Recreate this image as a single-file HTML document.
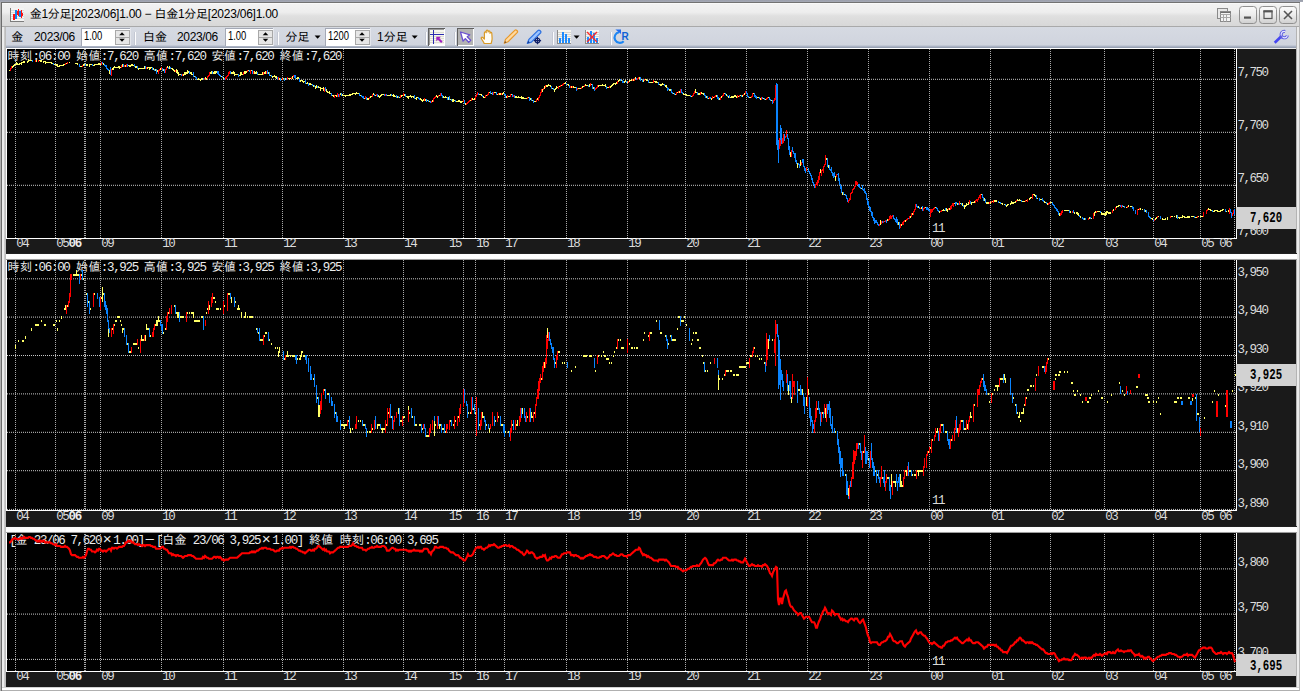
<!DOCTYPE html>
<html lang="ja"><head><meta charset="utf-8"><title>金1分足[2023/06]1.00 - 白金1分足[2023/06]1.00</title>
<style>
html,body{margin:0;padding:0;background:#fff;}
body{width:1303px;height:693px;position:relative;overflow:hidden;font-family:"Liberation Sans","IPAGothic",sans-serif;}
div{position:absolute;box-sizing:border-box;}
.t{white-space:pre;font-family:"Liberation Mono","IPAGothic",monospace;font-size:12px;line-height:13px;color:#ececec;}
.t .j{letter-spacing:0.4px;}
.t .l{font-size:12.5px;letter-spacing:-1.32px;}
.ax{color:#dcdcdc;}
.ax .l{letter-spacing:-1.5px;}
.w{display:inline-block;width:12.3px;text-align:center;font-size:15px;line-height:13px;letter-spacing:0;}
.b{font-weight:bold;}
.pb{font-weight:bold;color:#000;font-size:15.5px;line-height:16px;transform:scaleX(0.69);transform-origin:0 0;}
.p3 .l{letter-spacing:-1.385px;}
.p3 .j{letter-spacing:0.25px;}
.p3 .w{width:12.2px;}
.u{white-space:pre;font-family:"Liberation Sans","IPAGothic",sans-serif;font-size:12px;line-height:14px;color:#000;}
.chart{background:#000;}
.axis{background:#1a1a1a;}
.pbox{background:#d2d2d2;color:#000;text-align:center;}
svg{position:absolute;left:0;top:0;}
</style></head><body>

<div style="left:0;top:0;width:1300px;height:690.7px;background:#b4b4b4;"></div>
<div style="left:0;top:0;width:1303px;height:2px;background:linear-gradient(#999daa,#a6aab6);"></div>
<div style="left:1px;top:1.6px;width:1299px;height:1.5px;background:#727272;"></div>
<div style="left:0;top:2.4px;width:1px;height:688.3px;background:#b0b0b0;"></div>
<div style="left:0.9px;top:2.4px;width:1.4px;height:688.3px;background:#6c6c6c;"></div>
<div style="left:2.3px;top:3.2px;width:1296.6px;height:686.3px;background:#ececec;"></div>
<div style="left:1299px;top:3px;width:1px;height:687.7px;background:#b6b6b6;"></div>
<div style="left:2.3px;top:686.6px;width:1297px;height:4.1px;background:linear-gradient(#d2d2d2 0,#d2d2d2 30%,#fff 36%,#fff 66%,#b0b0b0 72%,#b0b0b0 100%);"></div>
<div style="left:4.3px;top:26.5px;width:1.7px;height:660px;background:linear-gradient(90deg,#d0d0d0,#b6b6b6);"></div>
<div style="left:1295.8px;top:26.5px;width:1.5px;height:660px;background:#b4b4b4;"></div>
<div style="left:2.3px;top:3.2px;width:1296.7px;height:23.3px;background:linear-gradient(#fdfdfd 0,#f2f2f2 6%,#eeeeee 40%,#e0e0e0 56%,#dbdbdb 80%,#d8d8d8 100%);"></div>
<div style="left:2.3px;top:26.2px;width:1296.7px;height:0.8px;background:#a9a9a9;"></div>
<div style="left:6px;top:27px;width:1290px;height:21px;background:linear-gradient(#d6dae2,#d0d4de 85%,#aeb6c6 92%,#8c96aa 100%);"></div>
<div class="axis" style="left:6px;top:49px;width:1290px;height:204px;"></div>
<div class="chart" style="left:6px;top:49px;width:1231px;height:189.6px;border-left:1px solid #fff;border-right:1px solid #fff;border-bottom:1.1px solid #fff;"></div>
<div style="left:6px;top:47.9px;width:1290px;height:1.2px;background:#ececec;"></div>
<div style="left:6px;top:48px;width:1231px;height:1.1px;background:#fff;"></div>
<div class="axis" style="left:6px;top:260px;width:1290px;height:266px;"></div>
<div class="chart" style="left:6px;top:260px;width:1231px;height:250.6px;border-left:1px solid #fff;border-right:1px solid #fff;border-bottom:1.1px solid #fff;"></div>
<div class="axis" style="left:6px;top:532px;width:1290px;height:155px;"></div>
<div class="chart" style="left:6px;top:532px;width:1231px;height:139.6px;border-left:1px solid #fff;border-right:1px solid #fff;border-bottom:1.1px solid #fff;"></div>
<div style="left:6px;top:252.5px;width:1291px;height:7px;background:linear-gradient(#1a1a1a 0,#1a1a1a 7%,#fdfdfd 12%,#fff 78%,#aaa 90%,#777 100%);"></div>
<div style="left:6px;top:525.5px;width:1291px;height:7px;background:linear-gradient(#1a1a1a 0,#1a1a1a 7%,#fdfdfd 12%,#fff 78%,#aaa 90%,#777 100%);"></div>
<div class="t " style="left:7.6px;top:50.5px;"><span class="j">時刻</span><span class="l">:06:00</span></div>
<div class="t " style="left:76px;top:50.5px;"><span class="j">始値</span><span class="l">:7,620</span></div>
<div class="t " style="left:143.7px;top:50.5px;"><span class="j">高値</span><span class="l">:7,620</span></div>
<div class="t " style="left:211.6px;top:50.5px;"><span class="j">安値</span><span class="l">:7,620</span></div>
<div class="t " style="left:279.4px;top:50.5px;"><span class="j">終値</span><span class="l">:7,620</span></div>
<div class="t " style="left:7.6px;top:261.5px;"><span class="j">時刻</span><span class="l">:06:00</span></div>
<div class="t " style="left:76px;top:261.5px;"><span class="j">始値</span><span class="l">:3,925</span></div>
<div class="t " style="left:143.7px;top:261.5px;"><span class="j">高値</span><span class="l">:3,925</span></div>
<div class="t " style="left:211.6px;top:261.5px;"><span class="j">安値</span><span class="l">:3,925</span></div>
<div class="t " style="left:279.4px;top:261.5px;"><span class="j">終値</span><span class="l">:3,925</span></div>
<div class="t p3" style="left:9.3px;top:534.2px;"><span class="l">[</span><span class="j">金</span><span class="l"> 23/06 7,620</span><span class="w">×</span><span class="l">1.00]</span><span class="j">－</span><span class="l">[</span><span class="j">白金</span><span class="l"> 23/06 3,925</span><span class="w">×</span><span class="l">1.00] </span><span class="j">終値</span><span class="l"> </span><span class="j">時刻</span><span class="l">:06:00 3,695</span></div>
<svg width="1303" height="693" viewBox="0 0 1303 693">
<g stroke="#a8a8a8" stroke-width="1" stroke-dasharray="1 1" shape-rendering="crispEdges"><line x1="15.5" y1="49" x2="15.5" y2="237.6"/><line x1="55.5" y1="49" x2="55.5" y2="237.6"/><line x1="84.5" y1="49" x2="84.5" y2="237.6"/><line x1="85.5" y1="49" x2="85.5" y2="237.6"/><line x1="100.5" y1="49" x2="100.5" y2="237.6"/><line x1="161.5" y1="49" x2="161.5" y2="237.6"/><line x1="223.5" y1="49" x2="223.5" y2="237.6"/><line x1="282.5" y1="49" x2="282.5" y2="237.6"/><line x1="343.5" y1="49" x2="343.5" y2="237.6"/><line x1="403.5" y1="49" x2="403.5" y2="237.6"/><line x1="463.5" y1="49" x2="463.5" y2="237.6"/><line x1="475.5" y1="49" x2="475.5" y2="237.6"/><line x1="504.5" y1="49" x2="504.5" y2="237.6"/><line x1="566.5" y1="49" x2="566.5" y2="237.6"/><line x1="627.5" y1="49" x2="627.5" y2="237.6"/><line x1="685.5" y1="49" x2="685.5" y2="237.6"/><line x1="746.5" y1="49" x2="746.5" y2="237.6"/><line x1="807.5" y1="49" x2="807.5" y2="237.6"/><line x1="868.5" y1="49" x2="868.5" y2="237.6"/><line x1="929.5" y1="49" x2="929.5" y2="237.6"/><line x1="990.5" y1="49" x2="990.5" y2="237.6"/><line x1="1050.5" y1="49" x2="1050.5" y2="237.6"/><line x1="1104.5" y1="49" x2="1104.5" y2="237.6"/><line x1="1153.5" y1="49" x2="1153.5" y2="237.6"/><line x1="1200.5" y1="49" x2="1200.5" y2="237.6"/><line x1="1234.5" y1="49" x2="1234.5" y2="237.6"/></g><g stroke="#c8c8c8" stroke-width="1" stroke-dasharray="1 1"><line x1="7" y1="79.3" x2="1236" y2="79.3"/><line x1="7" y1="132.3" x2="1236" y2="132.3"/><line x1="7" y1="185.3" x2="1236" y2="185.3"/></g>
<g stroke="#a8a8a8" stroke-width="1" stroke-dasharray="1 1" shape-rendering="crispEdges"><line x1="15.5" y1="260" x2="15.5" y2="509.4"/><line x1="55.5" y1="260" x2="55.5" y2="509.4"/><line x1="84.5" y1="260" x2="84.5" y2="509.4"/><line x1="85.5" y1="260" x2="85.5" y2="509.4"/><line x1="100.5" y1="260" x2="100.5" y2="509.4"/><line x1="161.5" y1="260" x2="161.5" y2="509.4"/><line x1="223.5" y1="260" x2="223.5" y2="509.4"/><line x1="282.5" y1="260" x2="282.5" y2="509.4"/><line x1="343.5" y1="260" x2="343.5" y2="509.4"/><line x1="403.5" y1="260" x2="403.5" y2="509.4"/><line x1="463.5" y1="260" x2="463.5" y2="509.4"/><line x1="475.5" y1="260" x2="475.5" y2="509.4"/><line x1="504.5" y1="260" x2="504.5" y2="509.4"/><line x1="566.5" y1="260" x2="566.5" y2="509.4"/><line x1="627.5" y1="260" x2="627.5" y2="509.4"/><line x1="685.5" y1="260" x2="685.5" y2="509.4"/><line x1="746.5" y1="260" x2="746.5" y2="509.4"/><line x1="807.5" y1="260" x2="807.5" y2="509.4"/><line x1="868.5" y1="260" x2="868.5" y2="509.4"/><line x1="929.5" y1="260" x2="929.5" y2="509.4"/><line x1="990.5" y1="260" x2="990.5" y2="509.4"/><line x1="1050.5" y1="260" x2="1050.5" y2="509.4"/><line x1="1104.5" y1="260" x2="1104.5" y2="509.4"/><line x1="1153.5" y1="260" x2="1153.5" y2="509.4"/><line x1="1200.5" y1="260" x2="1200.5" y2="509.4"/><line x1="1234.5" y1="260" x2="1234.5" y2="509.4"/></g><g stroke="#c8c8c8" stroke-width="1" stroke-dasharray="1 1"><line x1="7" y1="278.8" x2="1236" y2="278.8"/><line x1="7" y1="317.1" x2="1236" y2="317.1"/><line x1="7" y1="355.5" x2="1236" y2="355.5"/><line x1="7" y1="393.9" x2="1236" y2="393.9"/><line x1="7" y1="432.3" x2="1236" y2="432.3"/><line x1="7" y1="470.7" x2="1236" y2="470.7"/><line x1="7" y1="509.4" x2="1236" y2="509.4"/></g>
<g stroke="#a8a8a8" stroke-width="1" stroke-dasharray="1 1" shape-rendering="crispEdges"><line x1="15.5" y1="532" x2="15.5" y2="670.5"/><line x1="55.5" y1="532" x2="55.5" y2="670.5"/><line x1="84.5" y1="532" x2="84.5" y2="670.5"/><line x1="85.5" y1="532" x2="85.5" y2="670.5"/><line x1="100.5" y1="532" x2="100.5" y2="670.5"/><line x1="161.5" y1="532" x2="161.5" y2="670.5"/><line x1="223.5" y1="532" x2="223.5" y2="670.5"/><line x1="282.5" y1="532" x2="282.5" y2="670.5"/><line x1="343.5" y1="532" x2="343.5" y2="670.5"/><line x1="403.5" y1="532" x2="403.5" y2="670.5"/><line x1="463.5" y1="532" x2="463.5" y2="670.5"/><line x1="475.5" y1="532" x2="475.5" y2="670.5"/><line x1="504.5" y1="532" x2="504.5" y2="670.5"/><line x1="566.5" y1="532" x2="566.5" y2="670.5"/><line x1="627.5" y1="532" x2="627.5" y2="670.5"/><line x1="685.5" y1="532" x2="685.5" y2="670.5"/><line x1="746.5" y1="532" x2="746.5" y2="670.5"/><line x1="807.5" y1="532" x2="807.5" y2="670.5"/><line x1="868.5" y1="532" x2="868.5" y2="670.5"/><line x1="929.5" y1="532" x2="929.5" y2="670.5"/><line x1="990.5" y1="532" x2="990.5" y2="670.5"/><line x1="1050.5" y1="532" x2="1050.5" y2="670.5"/><line x1="1104.5" y1="532" x2="1104.5" y2="670.5"/><line x1="1153.5" y1="532" x2="1153.5" y2="670.5"/><line x1="1200.5" y1="532" x2="1200.5" y2="670.5"/><line x1="1234.5" y1="532" x2="1234.5" y2="670.5"/></g><g stroke="#c8c8c8" stroke-width="1" stroke-dasharray="1 1"><line x1="7" y1="568.9" x2="1236" y2="568.9"/><line x1="7" y1="614.1" x2="1236" y2="614.1"/><line x1="7" y1="659.4" x2="1236" y2="659.4"/></g>
<g shape-rendering="crispEdges"><rect x="8.5" y="70.3" width="1.1" height="1.1" fill="#ffff66"/><rect x="9.5" y="68.2" width="1.1" height="3.2" fill="#ff0000"/><rect x="10.5" y="66.1" width="1.1" height="3.2" fill="#ff0000"/><rect x="11.5" y="66.1" width="1.1" height="2.1" fill="#ffff66"/><rect x="12.5" y="65.0" width="1.1" height="2.1" fill="#ffff66"/><rect x="13.5" y="64.0" width="1.1" height="2.1" fill="#ffff66"/><rect x="14.5" y="64.0" width="1.1" height="1.1" fill="#ffff66"/><rect x="15.5" y="61.8" width="1.1" height="3.2" fill="#ffff66"/><rect x="16.5" y="62.9" width="1.1" height="2.1" fill="#ffff66"/><rect x="17.5" y="64.0" width="1.1" height="1.1" fill="#ffff66"/><rect x="18.5" y="62.9" width="1.1" height="2.1" fill="#ffff66"/><rect x="19.5" y="62.9" width="1.1" height="1.1" fill="#ffff66"/><rect x="20.5" y="61.8" width="1.1" height="3.2" fill="#ffff66"/><rect x="21.5" y="61.8" width="1.1" height="1.1" fill="#ffff66"/><rect x="22.5" y="60.8" width="1.1" height="2.1" fill="#ffff66"/><rect x="23.5" y="60.8" width="1.1" height="2.1" fill="#ffff66"/><rect x="26.5" y="60.8" width="1.1" height="2.1" fill="#ffff66"/><rect x="27.5" y="58.7" width="1.1" height="3.2" fill="#ffff66"/><rect x="28.5" y="59.7" width="1.1" height="1.1" fill="#ffff66"/><rect x="29.5" y="59.7" width="1.1" height="1.1" fill="#ffff66"/><rect x="30.5" y="59.7" width="1.1" height="1.1" fill="#ffff66"/><rect x="31.5" y="59.7" width="1.1" height="2.1" fill="#0a84ff"/><rect x="34.5" y="59.7" width="1.1" height="2.1" fill="#ff0000"/><rect x="35.5" y="59.7" width="1.1" height="2.1" fill="#ffff66"/><rect x="37.5" y="59.7" width="1.1" height="2.1" fill="#ff0000"/><rect x="38.5" y="59.7" width="1.1" height="1.1" fill="#ffff66"/><rect x="39.5" y="59.7" width="1.1" height="2.1" fill="#ffff66"/><rect x="40.5" y="59.7" width="1.1" height="2.1" fill="#ffff66"/><rect x="42.5" y="60.8" width="1.1" height="2.1" fill="#ffff66"/><rect x="43.5" y="60.8" width="1.1" height="1.1" fill="#ffff66"/><rect x="44.5" y="60.8" width="1.1" height="3.2" fill="#ffff66"/><rect x="45.5" y="61.8" width="1.1" height="1.1" fill="#ffff66"/><rect x="46.5" y="61.8" width="1.1" height="1.1" fill="#ffff66"/><rect x="47.5" y="61.8" width="1.1" height="1.1" fill="#ffff66"/><rect x="48.5" y="61.8" width="1.1" height="1.1" fill="#ffff66"/><rect x="49.5" y="61.8" width="1.1" height="1.1" fill="#ffff66"/><rect x="50.5" y="61.8" width="1.1" height="2.1" fill="#ffff66"/><rect x="51.5" y="62.9" width="1.1" height="1.1" fill="#ffff66"/><rect x="52.5" y="62.9" width="1.1" height="2.1" fill="#0a84ff"/><rect x="53.5" y="64.0" width="1.1" height="1.1" fill="#ffff66"/><rect x="54.5" y="64.0" width="1.1" height="1.1" fill="#ffff66"/><rect x="55.5" y="64.0" width="1.1" height="2.1" fill="#ffff66"/><rect x="56.5" y="64.0" width="1.1" height="3.2" fill="#ffff66"/><rect x="57.5" y="66.1" width="1.1" height="1.1" fill="#ffff66"/><rect x="58.5" y="65.0" width="1.1" height="2.1" fill="#ffff66"/><rect x="59.5" y="65.0" width="1.1" height="1.1" fill="#ffff66"/><rect x="60.5" y="65.0" width="1.1" height="1.1" fill="#ffff66"/><rect x="61.5" y="65.0" width="1.1" height="1.1" fill="#ffff66"/><rect x="62.5" y="64.0" width="1.1" height="2.1" fill="#ffff66"/><rect x="63.5" y="64.0" width="1.1" height="1.1" fill="#ffff66"/><rect x="64.5" y="62.9" width="1.1" height="2.1" fill="#ff0000"/><rect x="65.5" y="62.9" width="1.1" height="1.1" fill="#ffff66"/><rect x="66.5" y="61.8" width="1.1" height="2.1" fill="#ff0000"/><rect x="68.5" y="61.8" width="1.1" height="1.1" fill="#ffff66"/><rect x="74.5" y="62.9" width="1.1" height="1.1" fill="#ffff66"/><rect x="75.5" y="62.9" width="1.1" height="1.1" fill="#ffff66"/><rect x="76.5" y="62.9" width="1.1" height="2.1" fill="#ffff66"/><rect x="78.5" y="64.0" width="1.1" height="3.2" fill="#0a84ff"/><rect x="79.5" y="66.1" width="1.1" height="1.1" fill="#ffff66"/><rect x="80.5" y="66.1" width="1.1" height="1.1" fill="#ffff66"/><rect x="81.5" y="65.0" width="1.1" height="2.1" fill="#ff0000"/><rect x="82.5" y="64.0" width="1.1" height="2.1" fill="#ffff66"/><rect x="83.5" y="64.0" width="1.1" height="1.1" fill="#ffff66"/><rect x="84.5" y="64.0" width="1.1" height="2.1" fill="#0a84ff"/><rect x="85.5" y="64.0" width="1.1" height="2.1" fill="#ffff66"/><rect x="86.5" y="64.0" width="1.1" height="2.1" fill="#ffff66"/><rect x="88.5" y="64.0" width="1.1" height="3.2" fill="#ffff66"/><rect x="89.5" y="64.0" width="1.1" height="1.1" fill="#ffff66"/><rect x="90.5" y="64.0" width="1.1" height="1.1" fill="#ffff66"/><rect x="91.5" y="64.0" width="1.1" height="2.1" fill="#0a84ff"/><rect x="92.5" y="65.0" width="1.1" height="1.1" fill="#ffff66"/><rect x="93.5" y="64.0" width="1.1" height="2.1" fill="#ffff66"/><rect x="94.5" y="64.0" width="1.1" height="1.1" fill="#ffff66"/><rect x="95.5" y="64.0" width="1.1" height="1.1" fill="#ffff66"/><rect x="96.5" y="64.0" width="1.1" height="1.1" fill="#ffff66"/><rect x="97.5" y="62.9" width="1.1" height="2.1" fill="#ffff66"/><rect x="98.5" y="62.9" width="1.1" height="2.1" fill="#ffff66"/><rect x="99.5" y="64.0" width="1.1" height="1.1" fill="#ffff66"/><rect x="100.5" y="61.8" width="1.1" height="3.2" fill="#ff0000"/><rect x="101.5" y="61.8" width="1.1" height="2.1" fill="#0a84ff"/><rect x="102.5" y="62.9" width="1.1" height="2.1" fill="#ffff66"/><rect x="103.5" y="64.0" width="1.1" height="2.1" fill="#0a84ff"/><rect x="104.5" y="65.0" width="1.1" height="2.1" fill="#0a84ff"/><rect x="105.5" y="65.0" width="1.1" height="4.2" fill="#0a84ff"/><rect x="106.5" y="68.2" width="1.1" height="2.1" fill="#0a84ff"/><rect x="107.5" y="69.3" width="1.1" height="2.1" fill="#0a84ff"/><rect x="108.5" y="70.3" width="1.1" height="3.2" fill="#ffff66"/><rect x="109.5" y="71.4" width="1.1" height="3.2" fill="#0a84ff"/><rect x="110.5" y="69.3" width="1.1" height="6.4" fill="#ff0000"/><rect x="111.5" y="68.2" width="1.1" height="2.1" fill="#ffff66"/><rect x="112.5" y="67.1" width="1.1" height="3.2" fill="#ffff66"/><rect x="113.5" y="66.1" width="1.1" height="2.1" fill="#ffff66"/><rect x="114.5" y="67.1" width="1.1" height="1.1" fill="#ffff66"/><rect x="115.5" y="67.1" width="1.1" height="1.1" fill="#ffff66"/><rect x="116.5" y="67.1" width="1.1" height="1.1" fill="#ffff66"/><rect x="117.5" y="66.1" width="1.1" height="2.1" fill="#ffff66"/><rect x="118.5" y="66.1" width="1.1" height="3.2" fill="#ffff66"/><rect x="119.5" y="67.1" width="1.1" height="1.1" fill="#ffff66"/><rect x="120.5" y="65.0" width="1.1" height="3.2" fill="#ff0000"/><rect x="121.5" y="64.0" width="1.1" height="3.2" fill="#ffff66"/><rect x="122.5" y="64.0" width="1.1" height="3.2" fill="#0a84ff"/><rect x="123.5" y="65.0" width="1.1" height="2.1" fill="#ff0000"/><rect x="124.5" y="65.0" width="1.1" height="2.1" fill="#ffff66"/><rect x="125.5" y="64.0" width="1.1" height="3.2" fill="#ff0000"/><rect x="126.5" y="64.0" width="1.1" height="3.2" fill="#0a84ff"/><rect x="127.5" y="65.0" width="1.1" height="1.1" fill="#ffff66"/><rect x="128.5" y="65.0" width="1.1" height="2.1" fill="#ffff66"/><rect x="129.5" y="65.0" width="1.1" height="2.1" fill="#ffff66"/><rect x="130.5" y="64.0" width="1.1" height="2.1" fill="#ffff66"/><rect x="131.5" y="64.0" width="1.1" height="2.1" fill="#ffff66"/><rect x="132.5" y="65.0" width="1.1" height="1.1" fill="#ffff66"/><rect x="133.5" y="64.0" width="1.1" height="3.2" fill="#0a84ff"/><rect x="134.5" y="66.1" width="1.1" height="2.1" fill="#ffff66"/><rect x="135.5" y="66.1" width="1.1" height="2.1" fill="#ffff66"/><rect x="136.5" y="66.1" width="1.1" height="3.2" fill="#0a84ff"/><rect x="137.5" y="68.2" width="1.1" height="2.1" fill="#ffff66"/><rect x="138.5" y="68.2" width="1.1" height="1.1" fill="#ffff66"/><rect x="139.5" y="68.2" width="1.1" height="1.1" fill="#ffff66"/><rect x="140.5" y="68.2" width="1.1" height="1.1" fill="#ffff66"/><rect x="141.5" y="68.2" width="1.1" height="1.1" fill="#ffff66"/><rect x="142.5" y="68.2" width="1.1" height="1.1" fill="#ffff66"/><rect x="143.5" y="66.1" width="1.1" height="3.2" fill="#ffff66"/><rect x="144.5" y="66.1" width="1.1" height="3.2" fill="#0a84ff"/><rect x="145.5" y="67.1" width="1.1" height="2.1" fill="#ff0000"/><rect x="146.5" y="67.1" width="1.1" height="2.1" fill="#ffff66"/><rect x="147.5" y="67.1" width="1.1" height="1.1" fill="#ffff66"/><rect x="148.5" y="67.1" width="1.1" height="3.2" fill="#ffff66"/><rect x="149.5" y="67.1" width="1.1" height="2.1" fill="#ffff66"/><rect x="150.5" y="67.1" width="1.1" height="1.1" fill="#ffff66"/><rect x="151.5" y="67.1" width="1.1" height="3.2" fill="#0a84ff"/><rect x="152.5" y="68.2" width="1.1" height="2.1" fill="#ffff66"/><rect x="153.5" y="69.3" width="1.1" height="2.1" fill="#0a84ff"/><rect x="154.5" y="69.3" width="1.1" height="2.1" fill="#ffff66"/><rect x="155.5" y="70.3" width="1.1" height="1.1" fill="#ffff66"/><rect x="156.5" y="70.3" width="1.1" height="2.1" fill="#ffff66"/><rect x="157.5" y="70.3" width="1.1" height="3.2" fill="#ff0000"/><rect x="158.5" y="69.3" width="1.1" height="2.1" fill="#ff0000"/><rect x="159.5" y="68.2" width="1.1" height="2.1" fill="#ffff66"/><rect x="160.5" y="67.1" width="1.1" height="3.2" fill="#ff0000"/><rect x="161.5" y="68.2" width="1.1" height="3.2" fill="#0a84ff"/><rect x="162.5" y="69.3" width="1.1" height="2.1" fill="#ffff66"/><rect x="163.5" y="69.3" width="1.1" height="3.2" fill="#0a84ff"/><rect x="164.5" y="69.3" width="1.1" height="3.2" fill="#ff0000"/><rect x="165.5" y="67.1" width="1.1" height="3.2" fill="#ff0000"/><rect x="166.5" y="66.1" width="1.1" height="2.1" fill="#ffff66"/><rect x="167.5" y="67.1" width="1.1" height="2.1" fill="#0a84ff"/><rect x="168.5" y="66.1" width="1.1" height="3.2" fill="#ffff66"/><rect x="169.5" y="67.1" width="1.1" height="2.1" fill="#0a84ff"/><rect x="170.5" y="68.2" width="1.1" height="1.1" fill="#ffff66"/><rect x="171.5" y="68.2" width="1.1" height="2.1" fill="#ffff66"/><rect x="172.5" y="69.3" width="1.1" height="2.1" fill="#ffff66"/><rect x="173.5" y="70.3" width="1.1" height="2.1" fill="#ffff66"/><rect x="174.5" y="70.3" width="1.1" height="2.1" fill="#ff0000"/><rect x="175.5" y="69.3" width="1.1" height="3.2" fill="#ffff66"/><rect x="176.5" y="70.3" width="1.1" height="3.2" fill="#ffff66"/><rect x="177.5" y="72.4" width="1.1" height="3.2" fill="#ffff66"/><rect x="178.5" y="73.5" width="1.1" height="1.1" fill="#ffff66"/><rect x="179.5" y="73.5" width="1.1" height="1.1" fill="#ffff66"/><rect x="180.5" y="73.5" width="1.1" height="2.1" fill="#0a84ff"/><rect x="181.5" y="73.5" width="1.1" height="2.1" fill="#ff0000"/><rect x="182.5" y="73.5" width="1.1" height="2.1" fill="#ffff66"/><rect x="183.5" y="72.4" width="1.1" height="2.1" fill="#ffff66"/><rect x="184.5" y="72.4" width="1.1" height="2.1" fill="#ffff66"/><rect x="185.5" y="72.4" width="1.1" height="1.1" fill="#ffff66"/><rect x="186.5" y="70.3" width="1.1" height="3.2" fill="#ffff66"/><rect x="187.5" y="71.4" width="1.1" height="1.1" fill="#ffff66"/><rect x="188.5" y="71.4" width="1.1" height="2.1" fill="#0a84ff"/><rect x="189.5" y="72.4" width="1.1" height="1.1" fill="#ffff66"/><rect x="190.5" y="72.4" width="1.1" height="2.1" fill="#ffff66"/><rect x="191.5" y="73.5" width="1.1" height="1.1" fill="#ffff66"/><rect x="192.5" y="72.4" width="1.1" height="4.2" fill="#0a84ff"/><rect x="193.5" y="75.6" width="1.1" height="1.1" fill="#ffff66"/><rect x="194.5" y="75.6" width="1.1" height="2.1" fill="#0a84ff"/><rect x="195.5" y="76.7" width="1.1" height="3.2" fill="#0a84ff"/><rect x="196.5" y="78.8" width="1.1" height="1.1" fill="#ffff66"/><rect x="197.5" y="77.7" width="1.1" height="2.1" fill="#ffff66"/><rect x="198.5" y="78.8" width="1.1" height="1.1" fill="#ffff66"/><rect x="199.5" y="78.8" width="1.1" height="2.1" fill="#ffff66"/><rect x="200.5" y="77.7" width="1.1" height="2.1" fill="#ffff66"/><rect x="201.5" y="77.7" width="1.1" height="2.1" fill="#ffff66"/><rect x="202.5" y="77.7" width="1.1" height="2.1" fill="#0a84ff"/><rect x="203.5" y="77.7" width="1.1" height="2.1" fill="#ff0000"/><rect x="204.5" y="76.7" width="1.1" height="2.1" fill="#ffff66"/><rect x="205.5" y="77.7" width="1.1" height="2.1" fill="#ffff66"/><rect x="206.5" y="75.6" width="1.1" height="3.2" fill="#ff0000"/><rect x="207.5" y="74.6" width="1.1" height="2.1" fill="#ff0000"/><rect x="208.5" y="72.4" width="1.1" height="3.2" fill="#ff0000"/><rect x="209.5" y="72.4" width="1.1" height="1.1" fill="#ffff66"/><rect x="210.5" y="71.4" width="1.1" height="2.1" fill="#ffff66"/><rect x="211.5" y="71.4" width="1.1" height="2.1" fill="#0a84ff"/><rect x="212.5" y="72.4" width="1.1" height="1.1" fill="#ffff66"/><rect x="213.5" y="71.4" width="1.1" height="2.1" fill="#ffff66"/><rect x="214.5" y="71.4" width="1.1" height="2.1" fill="#ffff66"/><rect x="215.5" y="71.4" width="1.1" height="1.1" fill="#ffff66"/><rect x="216.5" y="71.4" width="1.1" height="2.1" fill="#0a84ff"/><rect x="217.5" y="71.4" width="1.1" height="3.2" fill="#0a84ff"/><rect x="218.5" y="73.5" width="1.1" height="2.1" fill="#0a84ff"/><rect x="219.5" y="74.6" width="1.1" height="2.1" fill="#0a84ff"/><rect x="220.5" y="75.6" width="1.1" height="1.1" fill="#ffff66"/><rect x="221.5" y="75.6" width="1.1" height="2.1" fill="#0a84ff"/><rect x="222.5" y="76.7" width="1.1" height="2.1" fill="#ffff66"/><rect x="223.5" y="77.7" width="1.1" height="2.1" fill="#0a84ff"/><rect x="224.5" y="76.7" width="1.1" height="3.2" fill="#ff0000"/><rect x="225.5" y="75.6" width="1.1" height="3.2" fill="#ff0000"/><rect x="226.5" y="74.6" width="1.1" height="2.1" fill="#ff0000"/><rect x="227.5" y="72.4" width="1.1" height="3.2" fill="#ff0000"/><rect x="228.5" y="71.4" width="1.1" height="2.1" fill="#ff0000"/><rect x="229.5" y="71.4" width="1.1" height="2.1" fill="#0a84ff"/><rect x="230.5" y="72.4" width="1.1" height="1.1" fill="#ffff66"/><rect x="231.5" y="72.4" width="1.1" height="1.1" fill="#ffff66"/><rect x="232.5" y="71.4" width="1.1" height="2.1" fill="#ffff66"/><rect x="233.5" y="72.4" width="1.1" height="3.2" fill="#ffff66"/><rect x="234.5" y="73.5" width="1.1" height="1.1" fill="#ffff66"/><rect x="235.5" y="73.5" width="1.1" height="1.1" fill="#ffff66"/><rect x="236.5" y="73.5" width="1.1" height="1.1" fill="#ffff66"/><rect x="237.5" y="73.5" width="1.1" height="3.2" fill="#0a84ff"/><rect x="238.5" y="74.6" width="1.1" height="1.1" fill="#ffff66"/><rect x="239.5" y="72.4" width="1.1" height="3.2" fill="#ffff66"/><rect x="240.5" y="72.4" width="1.1" height="2.1" fill="#ffff66"/><rect x="241.5" y="73.5" width="1.1" height="1.1" fill="#ffff66"/><rect x="242.5" y="72.4" width="1.1" height="2.1" fill="#ff0000"/><rect x="243.5" y="71.4" width="1.1" height="2.1" fill="#ffff66"/><rect x="244.5" y="71.4" width="1.1" height="2.1" fill="#ffff66"/><rect x="245.5" y="71.4" width="1.1" height="1.1" fill="#ffff66"/><rect x="246.5" y="70.3" width="1.1" height="2.1" fill="#ff0000"/><rect x="247.5" y="70.3" width="1.1" height="1.1" fill="#ffff66"/><rect x="248.5" y="70.3" width="1.1" height="2.1" fill="#0a84ff"/><rect x="249.5" y="70.3" width="1.1" height="3.2" fill="#ff0000"/><rect x="250.5" y="70.3" width="1.1" height="1.1" fill="#ffff66"/><rect x="251.5" y="70.3" width="1.1" height="3.2" fill="#0a84ff"/><rect x="252.5" y="71.4" width="1.1" height="2.1" fill="#ff0000"/><rect x="253.5" y="71.4" width="1.1" height="2.1" fill="#ffff66"/><rect x="254.5" y="72.4" width="1.1" height="1.1" fill="#ffff66"/><rect x="255.5" y="71.4" width="1.1" height="2.1" fill="#ffff66"/><rect x="256.5" y="72.4" width="1.1" height="2.1" fill="#0a84ff"/><rect x="257.5" y="73.5" width="1.1" height="1.1" fill="#ffff66"/><rect x="258.5" y="73.5" width="1.1" height="1.1" fill="#ffff66"/><rect x="259.5" y="73.5" width="1.1" height="1.1" fill="#ffff66"/><rect x="260.5" y="73.5" width="1.1" height="1.1" fill="#ffff66"/><rect x="261.5" y="72.4" width="1.1" height="2.1" fill="#ffff66"/><rect x="262.5" y="72.4" width="1.1" height="2.1" fill="#ff0000"/><rect x="263.5" y="72.4" width="1.1" height="1.1" fill="#ffff66"/><rect x="264.5" y="71.4" width="1.1" height="2.1" fill="#ffff66"/><rect x="265.5" y="71.4" width="1.1" height="2.1" fill="#ff0000"/><rect x="266.5" y="70.3" width="1.1" height="3.2" fill="#0a84ff"/><rect x="267.5" y="72.4" width="1.1" height="1.1" fill="#ffff66"/><rect x="268.5" y="72.4" width="1.1" height="3.2" fill="#0a84ff"/><rect x="269.5" y="74.6" width="1.1" height="1.1" fill="#ffff66"/><rect x="270.5" y="74.6" width="1.1" height="2.1" fill="#0a84ff"/><rect x="271.5" y="75.6" width="1.1" height="2.1" fill="#ffff66"/><rect x="272.5" y="75.6" width="1.1" height="1.1" fill="#ffff66"/><rect x="273.5" y="74.6" width="1.1" height="2.1" fill="#ffff66"/><rect x="274.5" y="75.6" width="1.1" height="2.1" fill="#ffff66"/><rect x="275.5" y="75.6" width="1.1" height="3.2" fill="#ffff66"/><rect x="276.5" y="76.7" width="1.1" height="3.2" fill="#0a84ff"/><rect x="277.5" y="76.7" width="1.1" height="3.2" fill="#ff0000"/><rect x="278.5" y="77.7" width="1.1" height="2.1" fill="#ffff66"/><rect x="279.5" y="77.7" width="1.1" height="3.2" fill="#0a84ff"/><rect x="280.5" y="78.8" width="1.1" height="1.1" fill="#ffff66"/><rect x="281.5" y="77.7" width="1.1" height="2.1" fill="#ff0000"/><rect x="282.5" y="77.7" width="1.1" height="1.1" fill="#ffff66"/><rect x="283.5" y="77.7" width="1.1" height="3.2" fill="#0a84ff"/><rect x="284.5" y="77.7" width="1.1" height="2.1" fill="#ffff66"/><rect x="285.5" y="77.7" width="1.1" height="2.1" fill="#0a84ff"/><rect x="286.5" y="76.7" width="1.1" height="3.2" fill="#ff0000"/><rect x="287.5" y="77.7" width="1.1" height="1.1" fill="#ffff66"/><rect x="288.5" y="77.7" width="1.1" height="2.1" fill="#ffff66"/><rect x="289.5" y="77.7" width="1.1" height="1.1" fill="#ffff66"/><rect x="290.5" y="76.7" width="1.1" height="2.1" fill="#ff0000"/><rect x="291.5" y="75.6" width="1.1" height="3.2" fill="#ffff66"/><rect x="292.5" y="74.6" width="1.1" height="2.1" fill="#ff0000"/><rect x="293.5" y="74.6" width="1.1" height="3.2" fill="#0a84ff"/><rect x="294.5" y="74.6" width="1.1" height="4.2" fill="#0a84ff"/><rect x="295.5" y="77.7" width="1.1" height="1.1" fill="#ffff66"/><rect x="296.5" y="76.7" width="1.1" height="2.1" fill="#ffff66"/><rect x="297.5" y="76.7" width="1.1" height="2.1" fill="#ffff66"/><rect x="298.5" y="77.7" width="1.1" height="4.2" fill="#0a84ff"/><rect x="299.5" y="79.9" width="1.1" height="2.1" fill="#ffff66"/><rect x="300.5" y="79.9" width="1.1" height="1.1" fill="#ffff66"/><rect x="301.5" y="79.9" width="1.1" height="2.1" fill="#ffff66"/><rect x="302.5" y="80.9" width="1.1" height="2.1" fill="#ffff66"/><rect x="303.5" y="80.9" width="1.1" height="1.1" fill="#ffff66"/><rect x="304.5" y="79.9" width="1.1" height="4.2" fill="#0a84ff"/><rect x="305.5" y="83.0" width="1.1" height="1.1" fill="#ffff66"/><rect x="306.5" y="82.0" width="1.1" height="2.1" fill="#ffff66"/><rect x="307.5" y="83.0" width="1.1" height="3.2" fill="#0a84ff"/><rect x="308.5" y="83.0" width="1.1" height="2.1" fill="#ffff66"/><rect x="309.5" y="83.0" width="1.1" height="2.1" fill="#ffff66"/><rect x="310.5" y="84.1" width="1.1" height="1.1" fill="#ffff66"/><rect x="311.5" y="84.1" width="1.1" height="2.1" fill="#0a84ff"/><rect x="312.5" y="85.2" width="1.1" height="2.1" fill="#ffff66"/><rect x="313.5" y="85.2" width="1.1" height="2.1" fill="#0a84ff"/><rect x="314.5" y="86.2" width="1.1" height="3.2" fill="#ffff66"/><rect x="315.5" y="85.2" width="1.1" height="3.2" fill="#ffff66"/><rect x="316.5" y="86.2" width="1.1" height="2.1" fill="#0a84ff"/><rect x="317.5" y="86.2" width="1.1" height="2.1" fill="#ffff66"/><rect x="318.5" y="87.3" width="1.1" height="1.1" fill="#ffff66"/><rect x="319.5" y="87.3" width="1.1" height="3.2" fill="#ffff66"/><rect x="320.5" y="88.3" width="1.1" height="1.1" fill="#ffff66"/><rect x="321.5" y="88.3" width="1.1" height="1.1" fill="#ffff66"/><rect x="322.5" y="87.3" width="1.1" height="3.2" fill="#ffff66"/><rect x="323.5" y="88.3" width="1.1" height="3.2" fill="#ff0000"/><rect x="324.5" y="87.3" width="1.1" height="3.2" fill="#0a84ff"/><rect x="325.5" y="89.4" width="1.1" height="2.1" fill="#ffff66"/><rect x="326.5" y="90.5" width="1.1" height="2.1" fill="#ffff66"/><rect x="327.5" y="91.5" width="1.1" height="1.1" fill="#ffff66"/><rect x="328.5" y="90.5" width="1.1" height="3.2" fill="#ffff66"/><rect x="329.5" y="92.6" width="1.1" height="1.1" fill="#ffff66"/><rect x="330.5" y="92.6" width="1.1" height="3.2" fill="#0a84ff"/><rect x="331.5" y="94.7" width="1.1" height="1.1" fill="#ffff66"/><rect x="332.5" y="94.7" width="1.1" height="2.1" fill="#ffff66"/><rect x="333.5" y="94.7" width="1.1" height="3.2" fill="#ff0000"/><rect x="334.5" y="94.7" width="1.1" height="1.1" fill="#ffff66"/><rect x="335.5" y="94.7" width="1.1" height="2.1" fill="#ffff66"/><rect x="336.5" y="92.6" width="1.1" height="4.2" fill="#ff0000"/><rect x="337.5" y="93.6" width="1.1" height="3.2" fill="#0a84ff"/><rect x="338.5" y="93.6" width="1.1" height="3.2" fill="#ff0000"/><rect x="339.5" y="92.6" width="1.1" height="2.1" fill="#ffff66"/><rect x="340.5" y="92.6" width="1.1" height="3.2" fill="#0a84ff"/><rect x="341.5" y="93.6" width="1.1" height="2.1" fill="#ffff66"/><rect x="342.5" y="94.7" width="1.1" height="1.1" fill="#ffff66"/><rect x="343.5" y="94.7" width="1.1" height="1.1" fill="#ffff66"/><rect x="344.5" y="94.7" width="1.1" height="2.1" fill="#ffff66"/><rect x="345.5" y="94.7" width="1.1" height="1.1" fill="#ffff66"/><rect x="346.5" y="94.7" width="1.1" height="1.1" fill="#ffff66"/><rect x="347.5" y="94.7" width="1.1" height="1.1" fill="#ffff66"/><rect x="348.5" y="93.6" width="1.1" height="2.1" fill="#ffff66"/><rect x="349.5" y="93.6" width="1.1" height="2.1" fill="#ffff66"/><rect x="350.5" y="93.6" width="1.1" height="1.1" fill="#ffff66"/><rect x="351.5" y="92.6" width="1.1" height="2.1" fill="#ffff66"/><rect x="352.5" y="92.6" width="1.1" height="1.1" fill="#ffff66"/><rect x="353.5" y="92.6" width="1.1" height="1.1" fill="#ffff66"/><rect x="354.5" y="92.6" width="1.1" height="2.1" fill="#ffff66"/><rect x="355.5" y="91.5" width="1.1" height="2.1" fill="#ffff66"/><rect x="356.5" y="92.6" width="1.1" height="1.1" fill="#ffff66"/><rect x="357.5" y="92.6" width="1.1" height="1.1" fill="#ffff66"/><rect x="358.5" y="92.6" width="1.1" height="3.2" fill="#0a84ff"/><rect x="359.5" y="94.7" width="1.1" height="1.1" fill="#ffff66"/><rect x="360.5" y="94.7" width="1.1" height="2.1" fill="#0a84ff"/><rect x="361.5" y="95.8" width="1.1" height="2.1" fill="#0a84ff"/><rect x="362.5" y="95.8" width="1.1" height="3.2" fill="#0a84ff"/><rect x="363.5" y="97.9" width="1.1" height="1.1" fill="#ffff66"/><rect x="364.5" y="95.8" width="1.1" height="3.2" fill="#ff0000"/><rect x="365.5" y="96.8" width="1.1" height="3.2" fill="#0a84ff"/><rect x="366.5" y="97.9" width="1.1" height="2.1" fill="#ffff66"/><rect x="367.5" y="97.9" width="1.1" height="2.1" fill="#ffff66"/><rect x="368.5" y="96.8" width="1.1" height="2.1" fill="#ff0000"/><rect x="369.5" y="95.8" width="1.1" height="2.1" fill="#ffff66"/><rect x="370.5" y="95.8" width="1.1" height="1.1" fill="#ffff66"/><rect x="371.5" y="93.6" width="1.1" height="3.2" fill="#ff0000"/><rect x="372.5" y="92.6" width="1.1" height="2.1" fill="#ffff66"/><rect x="373.5" y="93.6" width="1.1" height="2.1" fill="#0a84ff"/><rect x="374.5" y="94.7" width="1.1" height="1.1" fill="#ffff66"/><rect x="375.5" y="93.6" width="1.1" height="2.1" fill="#ff0000"/><rect x="376.5" y="93.6" width="1.1" height="3.2" fill="#0a84ff"/><rect x="377.5" y="94.7" width="1.1" height="2.1" fill="#ffff66"/><rect x="378.5" y="95.8" width="1.1" height="2.1" fill="#ffff66"/><rect x="379.5" y="94.7" width="1.1" height="2.1" fill="#ffff66"/><rect x="380.5" y="93.6" width="1.1" height="2.1" fill="#ffff66"/><rect x="381.5" y="93.6" width="1.1" height="1.1" fill="#ffff66"/><rect x="382.5" y="93.6" width="1.1" height="1.1" fill="#ffff66"/><rect x="383.5" y="93.6" width="1.1" height="2.1" fill="#0a84ff"/><rect x="384.5" y="93.6" width="1.1" height="2.1" fill="#ff0000"/><rect x="385.5" y="93.6" width="1.1" height="2.1" fill="#0a84ff"/><rect x="386.5" y="94.7" width="1.1" height="1.1" fill="#ffff66"/><rect x="387.5" y="94.7" width="1.1" height="1.1" fill="#ffff66"/><rect x="388.5" y="94.7" width="1.1" height="1.1" fill="#ffff66"/><rect x="389.5" y="93.6" width="1.1" height="2.1" fill="#ffff66"/><rect x="390.5" y="93.6" width="1.1" height="2.1" fill="#0a84ff"/><rect x="391.5" y="94.7" width="1.1" height="1.1" fill="#ffff66"/><rect x="392.5" y="93.6" width="1.1" height="3.2" fill="#ffff66"/><rect x="393.5" y="94.7" width="1.1" height="2.1" fill="#ffff66"/><rect x="394.5" y="95.8" width="1.1" height="1.1" fill="#ffff66"/><rect x="395.5" y="94.7" width="1.1" height="3.2" fill="#0a84ff"/><rect x="396.5" y="95.8" width="1.1" height="2.1" fill="#ffff66"/><rect x="397.5" y="95.8" width="1.1" height="2.1" fill="#0a84ff"/><rect x="398.5" y="96.8" width="1.1" height="1.1" fill="#ffff66"/><rect x="399.5" y="94.7" width="1.1" height="3.2" fill="#ff0000"/><rect x="400.5" y="94.7" width="1.1" height="2.1" fill="#ffff66"/><rect x="401.5" y="94.7" width="1.1" height="1.1" fill="#ffff66"/><rect x="402.5" y="92.6" width="1.1" height="3.2" fill="#ff0000"/><rect x="403.5" y="93.6" width="1.1" height="2.1" fill="#ffff66"/><rect x="404.5" y="93.6" width="1.1" height="3.2" fill="#0a84ff"/><rect x="405.5" y="95.8" width="1.1" height="1.1" fill="#ffff66"/><rect x="406.5" y="95.8" width="1.1" height="2.1" fill="#ffff66"/><rect x="407.5" y="95.8" width="1.1" height="3.2" fill="#ffff66"/><rect x="408.5" y="95.8" width="1.1" height="1.1" fill="#ffff66"/><rect x="409.5" y="94.7" width="1.1" height="2.1" fill="#ffff66"/><rect x="410.5" y="95.8" width="1.1" height="2.1" fill="#ffff66"/><rect x="411.5" y="95.8" width="1.1" height="1.1" fill="#ffff66"/><rect x="412.5" y="95.8" width="1.1" height="2.1" fill="#ffff66"/><rect x="413.5" y="94.7" width="1.1" height="4.2" fill="#0a84ff"/><rect x="414.5" y="97.9" width="1.1" height="1.1" fill="#ffff66"/><rect x="415.5" y="96.8" width="1.1" height="3.2" fill="#ffff66"/><rect x="416.5" y="96.8" width="1.1" height="1.1" fill="#ffff66"/><rect x="417.5" y="96.8" width="1.1" height="2.1" fill="#0a84ff"/><rect x="418.5" y="97.9" width="1.1" height="2.1" fill="#0a84ff"/><rect x="419.5" y="97.9" width="1.1" height="2.1" fill="#ffff66"/><rect x="420.5" y="98.9" width="1.1" height="2.1" fill="#ffff66"/><rect x="421.5" y="100.0" width="1.1" height="2.1" fill="#ffff66"/><rect x="422.5" y="98.9" width="1.1" height="2.1" fill="#ffff66"/><rect x="423.5" y="97.9" width="1.1" height="3.2" fill="#ff0000"/><rect x="424.5" y="98.9" width="1.1" height="2.1" fill="#ffff66"/><rect x="425.5" y="98.9" width="1.1" height="3.2" fill="#0a84ff"/><rect x="426.5" y="100.0" width="1.1" height="1.1" fill="#ffff66"/><rect x="427.5" y="100.0" width="1.1" height="2.1" fill="#0a84ff"/><rect x="428.5" y="101.1" width="1.1" height="1.1" fill="#ffff66"/><rect x="429.5" y="101.1" width="1.1" height="2.1" fill="#0a84ff"/><rect x="430.5" y="101.1" width="1.1" height="2.1" fill="#ff0000"/><rect x="431.5" y="100.0" width="1.1" height="2.1" fill="#ffff66"/><rect x="432.5" y="97.9" width="1.1" height="4.2" fill="#ff0000"/><rect x="433.5" y="96.8" width="1.1" height="2.1" fill="#ff0000"/><rect x="434.5" y="95.8" width="1.1" height="2.1" fill="#ff0000"/><rect x="435.5" y="94.7" width="1.1" height="2.1" fill="#ffff66"/><rect x="436.5" y="95.8" width="1.1" height="2.1" fill="#ffff66"/><rect x="437.5" y="94.7" width="1.1" height="2.1" fill="#ff0000"/><rect x="438.5" y="94.7" width="1.1" height="1.1" fill="#ffff66"/><rect x="439.5" y="92.6" width="1.1" height="3.2" fill="#ff0000"/><rect x="440.5" y="92.6" width="1.1" height="3.2" fill="#0a84ff"/><rect x="441.5" y="94.7" width="1.1" height="3.2" fill="#0a84ff"/><rect x="442.5" y="95.8" width="1.1" height="2.1" fill="#ffff66"/><rect x="443.5" y="96.8" width="1.1" height="1.1" fill="#ffff66"/><rect x="444.5" y="95.8" width="1.1" height="2.1" fill="#ffff66"/><rect x="445.5" y="96.8" width="1.1" height="1.1" fill="#ffff66"/><rect x="446.5" y="96.8" width="1.1" height="3.2" fill="#0a84ff"/><rect x="447.5" y="96.8" width="1.1" height="3.2" fill="#ffff66"/><rect x="448.5" y="95.8" width="1.1" height="4.2" fill="#0a84ff"/><rect x="449.5" y="98.9" width="1.1" height="1.1" fill="#ffff66"/><rect x="450.5" y="98.9" width="1.1" height="2.1" fill="#0a84ff"/><rect x="451.5" y="98.9" width="1.1" height="3.2" fill="#ffff66"/><rect x="452.5" y="98.9" width="1.1" height="3.2" fill="#ffff66"/><rect x="453.5" y="100.0" width="1.1" height="1.1" fill="#ffff66"/><rect x="454.5" y="100.0" width="1.1" height="2.1" fill="#0a84ff"/><rect x="455.5" y="101.1" width="1.1" height="1.1" fill="#ffff66"/><rect x="456.5" y="101.1" width="1.1" height="1.1" fill="#ffff66"/><rect x="457.5" y="100.0" width="1.1" height="2.1" fill="#ffff66"/><rect x="458.5" y="100.0" width="1.1" height="2.1" fill="#ffff66"/><rect x="459.5" y="101.1" width="1.1" height="2.1" fill="#ffff66"/><rect x="460.5" y="101.1" width="1.1" height="2.1" fill="#ffff66"/><rect x="461.5" y="101.1" width="1.1" height="1.1" fill="#ffff66"/><rect x="462.5" y="100.0" width="1.1" height="2.1" fill="#ff0000"/><rect x="463.5" y="100.0" width="1.1" height="4.2" fill="#0a84ff"/><rect x="464.5" y="103.2" width="1.1" height="2.1" fill="#ffff66"/><rect x="465.5" y="103.2" width="1.1" height="2.1" fill="#ff0000"/><rect x="466.5" y="102.1" width="1.1" height="2.1" fill="#ff0000"/><rect x="467.5" y="101.1" width="1.1" height="2.1" fill="#ff0000"/><rect x="468.5" y="100.0" width="1.1" height="2.1" fill="#ff0000"/><rect x="469.5" y="100.0" width="1.1" height="1.1" fill="#ffff66"/><rect x="470.5" y="97.9" width="1.1" height="3.2" fill="#ff0000"/><rect x="471.5" y="97.9" width="1.1" height="2.1" fill="#ffff66"/><rect x="472.5" y="98.9" width="1.1" height="1.1" fill="#ffff66"/><rect x="473.5" y="97.9" width="1.1" height="2.1" fill="#ffff66"/><rect x="474.5" y="95.8" width="1.1" height="4.2" fill="#ff0000"/><rect x="475.5" y="93.6" width="1.1" height="3.2" fill="#ff0000"/><rect x="476.5" y="91.5" width="1.1" height="3.2" fill="#ff0000"/><rect x="477.5" y="92.6" width="1.1" height="2.1" fill="#0a84ff"/><rect x="478.5" y="93.6" width="1.1" height="1.1" fill="#ffff66"/><rect x="479.5" y="93.6" width="1.1" height="1.1" fill="#ffff66"/><rect x="480.5" y="93.6" width="1.1" height="2.1" fill="#ffff66"/><rect x="481.5" y="94.7" width="1.1" height="2.1" fill="#0a84ff"/><rect x="482.5" y="95.8" width="1.1" height="2.1" fill="#ffff66"/><rect x="483.5" y="96.8" width="1.1" height="1.1" fill="#ffff66"/><rect x="484.5" y="94.7" width="1.1" height="3.2" fill="#ff0000"/><rect x="485.5" y="94.7" width="1.1" height="1.1" fill="#ffff66"/><rect x="486.5" y="93.6" width="1.1" height="2.1" fill="#ff0000"/><rect x="487.5" y="91.5" width="1.1" height="3.2" fill="#ff0000"/><rect x="488.5" y="91.5" width="1.1" height="1.1" fill="#ffff66"/><rect x="489.5" y="90.5" width="1.1" height="3.2" fill="#0a84ff"/><rect x="490.5" y="92.6" width="1.1" height="1.1" fill="#ffff66"/><rect x="491.5" y="91.5" width="1.1" height="3.2" fill="#0a84ff"/><rect x="492.5" y="91.5" width="1.1" height="3.2" fill="#ff0000"/><rect x="493.5" y="91.5" width="1.1" height="1.1" fill="#ffff66"/><rect x="494.5" y="91.5" width="1.1" height="1.1" fill="#ffff66"/><rect x="495.5" y="91.5" width="1.1" height="3.2" fill="#0a84ff"/><rect x="496.5" y="93.6" width="1.1" height="1.1" fill="#ffff66"/><rect x="497.5" y="92.6" width="1.1" height="2.1" fill="#ff0000"/><rect x="498.5" y="92.6" width="1.1" height="2.1" fill="#ffff66"/><rect x="499.5" y="92.6" width="1.1" height="2.1" fill="#ffff66"/><rect x="500.5" y="92.6" width="1.1" height="2.1" fill="#ff0000"/><rect x="501.5" y="92.6" width="1.1" height="2.1" fill="#ffff66"/><rect x="502.5" y="91.5" width="1.1" height="2.1" fill="#ffff66"/><rect x="503.5" y="92.6" width="1.1" height="2.1" fill="#0a84ff"/><rect x="504.5" y="93.6" width="1.1" height="4.2" fill="#0a84ff"/><rect x="505.5" y="95.8" width="1.1" height="2.1" fill="#ffff66"/><rect x="506.5" y="94.7" width="1.1" height="3.2" fill="#ff0000"/><rect x="507.5" y="95.8" width="1.1" height="1.1" fill="#ffff66"/><rect x="508.5" y="95.8" width="1.1" height="1.1" fill="#ffff66"/><rect x="509.5" y="93.6" width="1.1" height="3.2" fill="#ff0000"/><rect x="510.5" y="93.6" width="1.1" height="1.1" fill="#ffff66"/><rect x="511.5" y="93.6" width="1.1" height="3.2" fill="#0a84ff"/><rect x="512.5" y="94.7" width="1.1" height="2.1" fill="#ff0000"/><rect x="513.5" y="94.7" width="1.1" height="3.2" fill="#0a84ff"/><rect x="514.5" y="95.8" width="1.1" height="2.1" fill="#ffff66"/><rect x="515.5" y="95.8" width="1.1" height="2.1" fill="#ffff66"/><rect x="516.5" y="96.8" width="1.1" height="1.1" fill="#ffff66"/><rect x="517.5" y="95.8" width="1.1" height="2.1" fill="#ffff66"/><rect x="518.5" y="96.8" width="1.1" height="1.1" fill="#ffff66"/><rect x="519.5" y="96.8" width="1.1" height="1.1" fill="#ffff66"/><rect x="520.5" y="95.8" width="1.1" height="3.2" fill="#ffff66"/><rect x="521.5" y="96.8" width="1.1" height="2.1" fill="#ffff66"/><rect x="522.5" y="96.8" width="1.1" height="2.1" fill="#ffff66"/><rect x="523.5" y="97.9" width="1.1" height="1.1" fill="#ffff66"/><rect x="524.5" y="97.9" width="1.1" height="1.1" fill="#ffff66"/><rect x="525.5" y="97.9" width="1.1" height="1.1" fill="#ffff66"/><rect x="526.5" y="96.8" width="1.1" height="2.1" fill="#ff0000"/><rect x="527.5" y="96.8" width="1.1" height="1.1" fill="#ffff66"/><rect x="528.5" y="96.8" width="1.1" height="4.2" fill="#0a84ff"/><rect x="529.5" y="97.9" width="1.1" height="2.1" fill="#ffff66"/><rect x="530.5" y="97.9" width="1.1" height="3.2" fill="#0a84ff"/><rect x="531.5" y="100.0" width="1.1" height="1.1" fill="#ffff66"/><rect x="532.5" y="100.0" width="1.1" height="3.2" fill="#0a84ff"/><rect x="533.5" y="101.1" width="1.1" height="1.1" fill="#ffff66"/><rect x="534.5" y="101.1" width="1.1" height="1.1" fill="#ffff66"/><rect x="535.5" y="98.9" width="1.1" height="3.2" fill="#ff0000"/><rect x="536.5" y="97.9" width="1.1" height="2.1" fill="#ffff66"/><rect x="537.5" y="96.8" width="1.1" height="4.2" fill="#ff0000"/><rect x="538.5" y="94.7" width="1.1" height="3.2" fill="#ff0000"/><rect x="539.5" y="91.5" width="1.1" height="4.2" fill="#ff0000"/><rect x="540.5" y="89.4" width="1.1" height="3.2" fill="#ff0000"/><rect x="541.5" y="89.4" width="1.1" height="2.1" fill="#ffff66"/><rect x="542.5" y="88.3" width="1.1" height="2.1" fill="#ff0000"/><rect x="543.5" y="86.2" width="1.1" height="3.2" fill="#ffff66"/><rect x="544.5" y="85.2" width="1.1" height="3.2" fill="#ff0000"/><rect x="545.5" y="85.2" width="1.1" height="2.1" fill="#ffff66"/><rect x="546.5" y="85.2" width="1.1" height="2.1" fill="#ffff66"/><rect x="547.5" y="84.1" width="1.1" height="2.1" fill="#ffff66"/><rect x="548.5" y="85.2" width="1.1" height="1.1" fill="#ffff66"/><rect x="549.5" y="85.2" width="1.1" height="2.1" fill="#ffff66"/><rect x="550.5" y="86.2" width="1.1" height="3.2" fill="#0a84ff"/><rect x="551.5" y="88.3" width="1.1" height="1.1" fill="#ffff66"/><rect x="552.5" y="88.3" width="1.1" height="2.1" fill="#0a84ff"/><rect x="553.5" y="89.4" width="1.1" height="2.1" fill="#ffff66"/><rect x="554.5" y="88.3" width="1.1" height="2.1" fill="#ffff66"/><rect x="555.5" y="86.2" width="1.1" height="3.2" fill="#ffff66"/><rect x="556.5" y="87.3" width="1.1" height="1.1" fill="#ffff66"/><rect x="557.5" y="86.2" width="1.1" height="3.2" fill="#ff0000"/><rect x="558.5" y="86.2" width="1.1" height="1.1" fill="#ffff66"/><rect x="559.5" y="85.2" width="1.1" height="2.1" fill="#ff0000"/><rect x="560.5" y="85.2" width="1.1" height="1.1" fill="#ffff66"/><rect x="561.5" y="84.1" width="1.1" height="2.1" fill="#ff0000"/><rect x="562.5" y="83.0" width="1.1" height="2.1" fill="#ff0000"/><rect x="563.5" y="83.0" width="1.1" height="1.1" fill="#ffff66"/><rect x="564.5" y="82.0" width="1.1" height="2.1" fill="#ffff66"/><rect x="565.5" y="83.0" width="1.1" height="2.1" fill="#0a84ff"/><rect x="566.5" y="84.1" width="1.1" height="1.1" fill="#ffff66"/><rect x="567.5" y="84.1" width="1.1" height="2.1" fill="#ffff66"/><rect x="568.5" y="85.2" width="1.1" height="3.2" fill="#0a84ff"/><rect x="569.5" y="86.2" width="1.1" height="2.1" fill="#ff0000"/><rect x="570.5" y="86.2" width="1.1" height="2.1" fill="#ffff66"/><rect x="571.5" y="86.2" width="1.1" height="2.1" fill="#ff0000"/><rect x="572.5" y="86.2" width="1.1" height="2.1" fill="#ffff66"/><rect x="573.5" y="87.3" width="1.1" height="1.1" fill="#ffff66"/><rect x="574.5" y="87.3" width="1.1" height="1.1" fill="#ffff66"/><rect x="575.5" y="87.3" width="1.1" height="3.2" fill="#0a84ff"/><rect x="576.5" y="88.3" width="1.1" height="2.1" fill="#ff0000"/><rect x="577.5" y="88.3" width="1.1" height="1.1" fill="#ffff66"/><rect x="578.5" y="88.3" width="1.1" height="1.1" fill="#ffff66"/><rect x="579.5" y="88.3" width="1.1" height="1.1" fill="#ffff66"/><rect x="580.5" y="87.3" width="1.1" height="2.1" fill="#ff0000"/><rect x="581.5" y="86.2" width="1.1" height="2.1" fill="#ffff66"/><rect x="582.5" y="86.2" width="1.1" height="1.1" fill="#ffff66"/><rect x="583.5" y="85.2" width="1.1" height="2.1" fill="#ff0000"/><rect x="584.5" y="84.1" width="1.1" height="2.1" fill="#ffff66"/><rect x="585.5" y="85.2" width="1.1" height="1.1" fill="#ffff66"/><rect x="586.5" y="85.2" width="1.1" height="1.1" fill="#ffff66"/><rect x="587.5" y="85.2" width="1.1" height="2.1" fill="#0a84ff"/><rect x="588.5" y="84.1" width="1.1" height="3.2" fill="#ffff66"/><rect x="589.5" y="83.0" width="1.1" height="3.2" fill="#ff0000"/><rect x="590.5" y="84.1" width="1.1" height="1.1" fill="#ffff66"/><rect x="591.5" y="84.1" width="1.1" height="5.3" fill="#0a84ff"/><rect x="592.5" y="87.3" width="1.1" height="2.1" fill="#ffff66"/><rect x="593.5" y="87.3" width="1.1" height="3.2" fill="#0a84ff"/><rect x="594.5" y="88.3" width="1.1" height="2.1" fill="#ff0000"/><rect x="595.5" y="87.3" width="1.1" height="2.1" fill="#ff0000"/><rect x="596.5" y="85.2" width="1.1" height="3.2" fill="#ff0000"/><rect x="597.5" y="85.2" width="1.1" height="2.1" fill="#ffff66"/><rect x="598.5" y="85.2" width="1.1" height="1.1" fill="#ffff66"/><rect x="599.5" y="85.2" width="1.1" height="1.1" fill="#ffff66"/><rect x="600.5" y="85.2" width="1.1" height="1.1" fill="#ffff66"/><rect x="601.5" y="84.1" width="1.1" height="2.1" fill="#ffff66"/><rect x="602.5" y="85.2" width="1.1" height="1.1" fill="#ffff66"/><rect x="603.5" y="85.2" width="1.1" height="1.1" fill="#ffff66"/><rect x="604.5" y="84.1" width="1.1" height="3.2" fill="#ffff66"/><rect x="605.5" y="86.2" width="1.1" height="3.2" fill="#0a84ff"/><rect x="606.5" y="87.3" width="1.1" height="1.1" fill="#ffff66"/><rect x="607.5" y="87.3" width="1.1" height="1.1" fill="#ffff66"/><rect x="608.5" y="86.2" width="1.1" height="2.1" fill="#ff0000"/><rect x="609.5" y="86.2" width="1.1" height="2.1" fill="#ffff66"/><rect x="610.5" y="85.2" width="1.1" height="2.1" fill="#ffff66"/><rect x="611.5" y="84.1" width="1.1" height="2.1" fill="#ffff66"/><rect x="612.5" y="83.0" width="1.1" height="2.1" fill="#ffff66"/><rect x="613.5" y="83.0" width="1.1" height="1.1" fill="#ffff66"/><rect x="614.5" y="83.0" width="1.1" height="2.1" fill="#ffff66"/><rect x="615.5" y="82.0" width="1.1" height="2.1" fill="#ffff66"/><rect x="616.5" y="80.9" width="1.1" height="3.2" fill="#ff0000"/><rect x="617.5" y="79.9" width="1.1" height="2.1" fill="#ffff66"/><rect x="618.5" y="78.8" width="1.1" height="2.1" fill="#ffff66"/><rect x="619.5" y="78.8" width="1.1" height="2.1" fill="#0a84ff"/><rect x="620.5" y="79.9" width="1.1" height="1.1" fill="#ffff66"/><rect x="621.5" y="79.9" width="1.1" height="3.2" fill="#0a84ff"/><rect x="622.5" y="80.9" width="1.1" height="2.1" fill="#0a84ff"/><rect x="623.5" y="80.9" width="1.1" height="2.1" fill="#ffff66"/><rect x="624.5" y="79.9" width="1.1" height="2.1" fill="#ffff66"/><rect x="625.5" y="80.9" width="1.1" height="2.1" fill="#0a84ff"/><rect x="626.5" y="82.0" width="1.1" height="1.1" fill="#ffff66"/><rect x="627.5" y="80.9" width="1.1" height="2.1" fill="#ff0000"/><rect x="628.5" y="79.9" width="1.1" height="2.1" fill="#ffff66"/><rect x="629.5" y="79.9" width="1.1" height="1.1" fill="#ffff66"/><rect x="630.5" y="78.8" width="1.1" height="2.1" fill="#ffff66"/><rect x="631.5" y="78.8" width="1.1" height="2.1" fill="#ff0000"/><rect x="632.5" y="78.8" width="1.1" height="2.1" fill="#ffff66"/><rect x="633.5" y="77.7" width="1.1" height="3.2" fill="#ff0000"/><rect x="634.5" y="76.7" width="1.1" height="2.1" fill="#ffff66"/><rect x="635.5" y="77.7" width="1.1" height="2.1" fill="#0a84ff"/><rect x="636.5" y="77.7" width="1.1" height="2.1" fill="#ff0000"/><rect x="637.5" y="76.7" width="1.1" height="2.1" fill="#ff0000"/><rect x="638.5" y="76.7" width="1.1" height="2.1" fill="#ffff66"/><rect x="639.5" y="76.7" width="1.1" height="4.2" fill="#0a84ff"/><rect x="640.5" y="78.8" width="1.1" height="1.1" fill="#ffff66"/><rect x="641.5" y="78.8" width="1.1" height="3.2" fill="#0a84ff"/><rect x="642.5" y="79.9" width="1.1" height="2.1" fill="#ffff66"/><rect x="643.5" y="78.8" width="1.1" height="2.1" fill="#ff0000"/><rect x="644.5" y="78.8" width="1.1" height="1.1" fill="#ffff66"/><rect x="645.5" y="78.8" width="1.1" height="2.1" fill="#ffff66"/><rect x="646.5" y="79.9" width="1.1" height="1.1" fill="#ffff66"/><rect x="647.5" y="79.9" width="1.1" height="3.2" fill="#0a84ff"/><rect x="648.5" y="82.0" width="1.1" height="1.1" fill="#ffff66"/><rect x="649.5" y="82.0" width="1.1" height="1.1" fill="#ffff66"/><rect x="650.5" y="82.0" width="1.1" height="1.1" fill="#ffff66"/><rect x="651.5" y="82.0" width="1.1" height="1.1" fill="#ffff66"/><rect x="652.5" y="79.9" width="1.1" height="3.2" fill="#ff0000"/><rect x="653.5" y="80.9" width="1.1" height="1.1" fill="#ffff66"/><rect x="654.5" y="80.9" width="1.1" height="2.1" fill="#ffff66"/><rect x="655.5" y="80.9" width="1.1" height="2.1" fill="#ffff66"/><rect x="656.5" y="82.0" width="1.1" height="1.1" fill="#ffff66"/><rect x="657.5" y="82.0" width="1.1" height="3.2" fill="#0a84ff"/><rect x="658.5" y="84.1" width="1.1" height="1.1" fill="#ffff66"/><rect x="659.5" y="84.1" width="1.1" height="2.1" fill="#ffff66"/><rect x="660.5" y="84.1" width="1.1" height="2.1" fill="#ffff66"/><rect x="661.5" y="83.0" width="1.1" height="2.1" fill="#ffff66"/><rect x="662.5" y="84.1" width="1.1" height="1.1" fill="#ffff66"/><rect x="663.5" y="84.1" width="1.1" height="2.1" fill="#0a84ff"/><rect x="664.5" y="85.2" width="1.1" height="2.1" fill="#ffff66"/><rect x="665.5" y="85.2" width="1.1" height="3.2" fill="#ffff66"/><rect x="666.5" y="87.3" width="1.1" height="3.2" fill="#0a84ff"/><rect x="667.5" y="88.3" width="1.1" height="2.1" fill="#0a84ff"/><rect x="668.5" y="89.4" width="1.1" height="1.1" fill="#ffff66"/><rect x="669.5" y="89.4" width="1.1" height="1.1" fill="#ffff66"/><rect x="670.5" y="89.4" width="1.1" height="3.2" fill="#0a84ff"/><rect x="671.5" y="91.5" width="1.1" height="2.1" fill="#0a84ff"/><rect x="672.5" y="92.6" width="1.1" height="1.1" fill="#ffff66"/><rect x="673.5" y="92.6" width="1.1" height="2.1" fill="#0a84ff"/><rect x="674.5" y="93.6" width="1.1" height="1.1" fill="#ffff66"/><rect x="675.5" y="91.5" width="1.1" height="3.2" fill="#ff0000"/><rect x="676.5" y="91.5" width="1.1" height="1.1" fill="#ffff66"/><rect x="677.5" y="90.5" width="1.1" height="2.1" fill="#ff0000"/><rect x="678.5" y="90.5" width="1.1" height="2.1" fill="#ffff66"/><rect x="679.5" y="89.4" width="1.1" height="3.2" fill="#ff0000"/><rect x="680.5" y="89.4" width="1.1" height="3.2" fill="#0a84ff"/><rect x="681.5" y="91.5" width="1.1" height="2.1" fill="#0a84ff"/><rect x="682.5" y="92.6" width="1.1" height="2.1" fill="#ffff66"/><rect x="683.5" y="93.6" width="1.1" height="1.1" fill="#ffff66"/><rect x="684.5" y="93.6" width="1.1" height="1.1" fill="#ffff66"/><rect x="685.5" y="93.6" width="1.1" height="2.1" fill="#ffff66"/><rect x="686.5" y="94.7" width="1.1" height="1.1" fill="#ffff66"/><rect x="687.5" y="94.7" width="1.1" height="1.1" fill="#ffff66"/><rect x="688.5" y="94.7" width="1.1" height="1.1" fill="#ffff66"/><rect x="689.5" y="94.7" width="1.1" height="2.1" fill="#0a84ff"/><rect x="690.5" y="95.8" width="1.1" height="1.1" fill="#ffff66"/><rect x="691.5" y="94.7" width="1.1" height="2.1" fill="#ff0000"/><rect x="692.5" y="92.6" width="1.1" height="3.2" fill="#ff0000"/><rect x="693.5" y="90.5" width="1.1" height="3.2" fill="#ff0000"/><rect x="694.5" y="89.4" width="1.1" height="3.2" fill="#ffff66"/><rect x="695.5" y="91.5" width="1.1" height="1.1" fill="#ffff66"/><rect x="696.5" y="91.5" width="1.1" height="3.2" fill="#0a84ff"/><rect x="697.5" y="92.6" width="1.1" height="2.1" fill="#ffff66"/><rect x="698.5" y="92.6" width="1.1" height="2.1" fill="#ffff66"/><rect x="699.5" y="91.5" width="1.1" height="3.2" fill="#ff0000"/><rect x="700.5" y="91.5" width="1.1" height="2.1" fill="#ffff66"/><rect x="701.5" y="92.6" width="1.1" height="1.1" fill="#ffff66"/><rect x="702.5" y="92.6" width="1.1" height="2.1" fill="#ffff66"/><rect x="703.5" y="92.6" width="1.1" height="3.2" fill="#0a84ff"/><rect x="704.5" y="94.7" width="1.1" height="3.2" fill="#0a84ff"/><rect x="705.5" y="95.8" width="1.1" height="2.1" fill="#ffff66"/><rect x="706.5" y="95.8" width="1.1" height="3.2" fill="#0a84ff"/><rect x="707.5" y="97.9" width="1.1" height="1.1" fill="#ffff66"/><rect x="708.5" y="96.8" width="1.1" height="2.1" fill="#ff0000"/><rect x="709.5" y="96.8" width="1.1" height="2.1" fill="#0a84ff"/><rect x="710.5" y="97.9" width="1.1" height="2.1" fill="#ffff66"/><rect x="711.5" y="95.8" width="1.1" height="3.2" fill="#ff0000"/><rect x="712.5" y="96.8" width="1.1" height="1.1" fill="#ffff66"/><rect x="713.5" y="95.8" width="1.1" height="2.1" fill="#ff0000"/><rect x="714.5" y="94.7" width="1.1" height="2.1" fill="#ff0000"/><rect x="715.5" y="94.7" width="1.1" height="2.1" fill="#ffff66"/><rect x="716.5" y="94.7" width="1.1" height="4.2" fill="#0a84ff"/><rect x="717.5" y="96.8" width="1.1" height="3.2" fill="#0a84ff"/><rect x="718.5" y="97.9" width="1.1" height="2.1" fill="#ffff66"/><rect x="719.5" y="96.8" width="1.1" height="3.2" fill="#ff0000"/><rect x="720.5" y="95.8" width="1.1" height="2.1" fill="#ffff66"/><rect x="721.5" y="94.7" width="1.1" height="2.1" fill="#ff0000"/><rect x="722.5" y="92.6" width="1.1" height="3.2" fill="#ff0000"/><rect x="723.5" y="92.6" width="1.1" height="1.1" fill="#ffff66"/><rect x="724.5" y="92.6" width="1.1" height="2.1" fill="#0a84ff"/><rect x="725.5" y="93.6" width="1.1" height="2.1" fill="#ffff66"/><rect x="726.5" y="94.7" width="1.1" height="2.1" fill="#0a84ff"/><rect x="727.5" y="95.8" width="1.1" height="2.1" fill="#ffff66"/><rect x="728.5" y="94.7" width="1.1" height="3.2" fill="#0a84ff"/><rect x="729.5" y="96.8" width="1.1" height="1.1" fill="#ffff66"/><rect x="730.5" y="95.8" width="1.1" height="2.1" fill="#ffff66"/><rect x="731.5" y="95.8" width="1.1" height="2.1" fill="#ffff66"/><rect x="732.5" y="95.8" width="1.1" height="2.1" fill="#ffff66"/><rect x="733.5" y="94.7" width="1.1" height="2.1" fill="#ffff66"/><rect x="734.5" y="94.7" width="1.1" height="2.1" fill="#ffff66"/><rect x="735.5" y="95.8" width="1.1" height="2.1" fill="#ffff66"/><rect x="736.5" y="94.7" width="1.1" height="3.2" fill="#ff0000"/><rect x="737.5" y="95.8" width="1.1" height="1.1" fill="#ffff66"/><rect x="738.5" y="94.7" width="1.1" height="2.1" fill="#ff0000"/><rect x="739.5" y="94.7" width="1.1" height="1.1" fill="#ffff66"/><rect x="740.5" y="94.7" width="1.1" height="2.1" fill="#0a84ff"/><rect x="741.5" y="94.7" width="1.1" height="2.1" fill="#ffff66"/><rect x="742.5" y="93.6" width="1.1" height="2.1" fill="#ff0000"/><rect x="743.5" y="92.6" width="1.1" height="2.1" fill="#ffff66"/><rect x="744.5" y="90.5" width="1.1" height="3.2" fill="#ff0000"/><rect x="745.5" y="90.5" width="1.1" height="3.2" fill="#0a84ff"/><rect x="746.5" y="92.6" width="1.1" height="4.2" fill="#0a84ff"/><rect x="747.5" y="95.8" width="1.1" height="2.1" fill="#0a84ff"/><rect x="748.5" y="96.8" width="1.1" height="1.1" fill="#ffff66"/><rect x="749.5" y="96.8" width="1.1" height="1.1" fill="#ffff66"/><rect x="750.5" y="95.8" width="1.1" height="2.1" fill="#ff0000"/><rect x="751.5" y="92.6" width="1.1" height="4.2" fill="#ff0000"/><rect x="752.5" y="92.6" width="1.1" height="1.1" fill="#ffff66"/><rect x="753.5" y="92.6" width="1.1" height="4.2" fill="#0a84ff"/><rect x="754.5" y="94.7" width="1.1" height="3.2" fill="#0a84ff"/><rect x="755.5" y="95.8" width="1.1" height="3.2" fill="#0a84ff"/><rect x="756.5" y="96.8" width="1.1" height="1.1" fill="#ffff66"/><rect x="757.5" y="96.8" width="1.1" height="1.1" fill="#ffff66"/><rect x="758.5" y="96.8" width="1.1" height="2.1" fill="#0a84ff"/><rect x="759.5" y="97.9" width="1.1" height="2.1" fill="#ffff66"/><rect x="760.5" y="96.8" width="1.1" height="3.2" fill="#ff0000"/><rect x="761.5" y="96.8" width="1.1" height="2.1" fill="#0a84ff"/><rect x="762.5" y="97.9" width="1.1" height="1.1" fill="#ffff66"/><rect x="763.5" y="97.9" width="1.1" height="2.1" fill="#0a84ff"/><rect x="764.5" y="98.9" width="1.1" height="1.1" fill="#ffff66"/><rect x="765.5" y="97.9" width="1.1" height="2.1" fill="#ff0000"/><rect x="766.5" y="96.8" width="1.1" height="2.1" fill="#ff0000"/><rect x="767.5" y="96.8" width="1.1" height="1.1" fill="#ffff66"/><rect x="768.5" y="96.8" width="1.1" height="3.2" fill="#0a84ff"/><rect x="769.5" y="98.9" width="1.1" height="2.1" fill="#0a84ff"/><rect x="770.5" y="100.0" width="1.1" height="1.1" fill="#ffff66"/><rect x="771.5" y="100.0" width="1.1" height="4.2" fill="#0a84ff"/><rect x="772.5" y="100.0" width="1.1" height="3.2" fill="#ff0000"/><rect x="773.5" y="97.9" width="1.1" height="3.2" fill="#ff0000"/><rect x="774.5" y="89.4" width="1.1" height="9.5" fill="#ff0000"/><rect x="775.5" y="84.1" width="1.1" height="7.4" fill="#ff0000"/><rect x="776.5" y="84.1" width="1.1" height="65.7" fill="#0a84ff"/><rect x="777.5" y="144.5" width="1.1" height="4.2" fill="#0a84ff"/><rect x="778.5" y="138.2" width="1.1" height="10.6" fill="#ff0000"/><rect x="779.5" y="127.6" width="1.1" height="18.0" fill="#ff0000"/><rect x="780.5" y="127.6" width="1.1" height="15.9" fill="#0a84ff"/><rect x="781.5" y="138.2" width="1.1" height="5.3" fill="#ff0000"/><rect x="782.5" y="133.9" width="1.1" height="9.5" fill="#ff0000"/><rect x="783.5" y="133.9" width="1.1" height="7.4" fill="#0a84ff"/><rect x="784.5" y="136.0" width="1.1" height="2.1" fill="#ff0000"/><rect x="785.5" y="129.7" width="1.1" height="7.4" fill="#ff0000"/><rect x="786.5" y="133.9" width="1.1" height="5.3" fill="#0a84ff"/><rect x="787.5" y="138.2" width="1.1" height="11.6" fill="#0a84ff"/><rect x="788.5" y="145.6" width="1.1" height="9.5" fill="#0a84ff"/><rect x="789.5" y="151.9" width="1.1" height="5.3" fill="#ffff66"/><rect x="790.5" y="149.8" width="1.1" height="7.4" fill="#ff0000"/><rect x="791.5" y="146.6" width="1.1" height="5.3" fill="#0a84ff"/><rect x="792.5" y="150.9" width="1.1" height="3.2" fill="#0a84ff"/><rect x="793.5" y="153.0" width="1.1" height="5.3" fill="#0a84ff"/><rect x="794.5" y="153.0" width="1.1" height="8.5" fill="#0a84ff"/><rect x="795.5" y="160.4" width="1.1" height="3.2" fill="#0a84ff"/><rect x="796.5" y="162.5" width="1.1" height="5.3" fill="#ffff66"/><rect x="797.5" y="162.5" width="1.1" height="2.1" fill="#0a84ff"/><rect x="798.5" y="163.6" width="1.1" height="4.2" fill="#0a84ff"/><rect x="799.5" y="160.4" width="1.1" height="5.3" fill="#ffff66"/><rect x="800.5" y="161.5" width="1.1" height="3.2" fill="#ff0000"/><rect x="801.5" y="159.4" width="1.1" height="3.2" fill="#0a84ff"/><rect x="802.5" y="159.4" width="1.1" height="7.4" fill="#0a84ff"/><rect x="803.5" y="165.7" width="1.1" height="5.3" fill="#0a84ff"/><rect x="804.5" y="167.8" width="1.1" height="5.3" fill="#0a84ff"/><rect x="805.5" y="166.8" width="1.1" height="4.2" fill="#ff0000"/><rect x="806.5" y="168.9" width="1.1" height="1.1" fill="#ffff66"/><rect x="807.5" y="167.8" width="1.1" height="4.2" fill="#0a84ff"/><rect x="808.5" y="171.0" width="1.1" height="3.2" fill="#0a84ff"/><rect x="809.5" y="173.1" width="1.1" height="3.2" fill="#0a84ff"/><rect x="810.5" y="175.3" width="1.1" height="4.2" fill="#0a84ff"/><rect x="811.5" y="178.4" width="1.1" height="4.2" fill="#0a84ff"/><rect x="812.5" y="181.6" width="1.1" height="3.2" fill="#0a84ff"/><rect x="813.5" y="183.7" width="1.1" height="4.2" fill="#0a84ff"/><rect x="814.5" y="183.7" width="1.1" height="4.2" fill="#ff0000"/><rect x="815.5" y="181.6" width="1.1" height="3.2" fill="#ff0000"/><rect x="816.5" y="179.5" width="1.1" height="6.4" fill="#ff0000"/><rect x="817.5" y="176.3" width="1.1" height="6.4" fill="#ff0000"/><rect x="818.5" y="172.1" width="1.1" height="7.4" fill="#ff0000"/><rect x="819.5" y="168.9" width="1.1" height="4.2" fill="#ffff66"/><rect x="820.5" y="170.0" width="1.1" height="6.4" fill="#ff0000"/><rect x="821.5" y="168.9" width="1.1" height="2.1" fill="#ff0000"/><rect x="822.5" y="165.7" width="1.1" height="7.4" fill="#ff0000"/><rect x="823.5" y="163.6" width="1.1" height="3.2" fill="#ff0000"/><rect x="824.5" y="156.2" width="1.1" height="8.5" fill="#ff0000"/><rect x="825.5" y="158.3" width="1.1" height="2.1" fill="#ffff66"/><rect x="826.5" y="158.3" width="1.1" height="8.5" fill="#0a84ff"/><rect x="827.5" y="164.7" width="1.1" height="3.2" fill="#ffff66"/><rect x="828.5" y="164.7" width="1.1" height="5.3" fill="#0a84ff"/><rect x="829.5" y="168.9" width="1.1" height="2.1" fill="#0a84ff"/><rect x="830.5" y="166.8" width="1.1" height="6.4" fill="#0a84ff"/><rect x="831.5" y="172.1" width="1.1" height="4.2" fill="#0a84ff"/><rect x="832.5" y="173.1" width="1.1" height="5.3" fill="#0a84ff"/><rect x="833.5" y="172.1" width="1.1" height="5.3" fill="#0a84ff"/><rect x="834.5" y="176.3" width="1.1" height="4.2" fill="#ffff66"/><rect x="835.5" y="174.2" width="1.1" height="3.2" fill="#ff0000"/><rect x="836.5" y="174.2" width="1.1" height="1.1" fill="#0a84ff"/><rect x="837.5" y="173.1" width="1.1" height="7.4" fill="#0a84ff"/><rect x="838.5" y="178.4" width="1.1" height="6.4" fill="#0a84ff"/><rect x="839.5" y="183.7" width="1.1" height="5.3" fill="#0a84ff"/><rect x="840.5" y="185.9" width="1.1" height="7.4" fill="#0a84ff"/><rect x="841.5" y="192.2" width="1.1" height="3.2" fill="#ffff66"/><rect x="842.5" y="192.2" width="1.1" height="3.2" fill="#0a84ff"/><rect x="843.5" y="194.3" width="1.1" height="1.1" fill="#ffff66"/><rect x="844.5" y="194.3" width="1.1" height="2.1" fill="#0a84ff"/><rect x="845.5" y="195.4" width="1.1" height="3.2" fill="#0a84ff"/><rect x="846.5" y="197.5" width="1.1" height="4.2" fill="#0a84ff"/><rect x="847.5" y="199.6" width="1.1" height="3.2" fill="#ff0000"/><rect x="848.5" y="197.5" width="1.1" height="3.2" fill="#ff0000"/><rect x="849.5" y="193.3" width="1.1" height="6.4" fill="#ff0000"/><rect x="850.5" y="192.2" width="1.1" height="2.1" fill="#ff0000"/><rect x="851.5" y="189.0" width="1.1" height="4.2" fill="#ff0000"/><rect x="852.5" y="188.0" width="1.1" height="2.1" fill="#ff0000"/><rect x="853.5" y="185.9" width="1.1" height="3.2" fill="#ff0000"/><rect x="854.5" y="180.6" width="1.1" height="6.4" fill="#ff0000"/><rect x="855.5" y="180.6" width="1.1" height="4.2" fill="#ff0000"/><rect x="856.5" y="181.6" width="1.1" height="3.2" fill="#ff0000"/><rect x="857.5" y="183.7" width="1.1" height="3.2" fill="#0a84ff"/><rect x="858.5" y="183.7" width="1.1" height="4.2" fill="#0a84ff"/><rect x="859.5" y="186.9" width="1.1" height="2.1" fill="#0a84ff"/><rect x="860.5" y="188.0" width="1.1" height="1.1" fill="#ffff66"/><rect x="861.5" y="184.8" width="1.1" height="5.3" fill="#0a84ff"/><rect x="862.5" y="189.0" width="1.1" height="2.1" fill="#0a84ff"/><rect x="863.5" y="188.0" width="1.1" height="5.3" fill="#0a84ff"/><rect x="864.5" y="191.2" width="1.1" height="3.2" fill="#0a84ff"/><rect x="865.5" y="193.3" width="1.1" height="6.4" fill="#0a84ff"/><rect x="866.5" y="197.5" width="1.1" height="7.4" fill="#0a84ff"/><rect x="867.5" y="200.7" width="1.1" height="6.3" fill="#0a84ff"/><rect x="868.5" y="206.0" width="1.1" height="5.3" fill="#0a84ff"/><rect x="869.5" y="207.1" width="1.1" height="5.3" fill="#0a84ff"/><rect x="870.5" y="211.3" width="1.1" height="4.2" fill="#0a84ff"/><rect x="871.5" y="212.4" width="1.1" height="5.3" fill="#0a84ff"/><rect x="872.5" y="216.6" width="1.1" height="4.2" fill="#0a84ff"/><rect x="873.5" y="217.7" width="1.1" height="6.3" fill="#0a84ff"/><rect x="874.5" y="219.8" width="1.1" height="3.2" fill="#0a84ff"/><rect x="875.5" y="219.8" width="1.1" height="3.2" fill="#0a84ff"/><rect x="876.5" y="221.9" width="1.1" height="3.2" fill="#0a84ff"/><rect x="877.5" y="224.0" width="1.1" height="2.1" fill="#0a84ff"/><rect x="878.5" y="224.0" width="1.1" height="2.1" fill="#ff0000"/><rect x="879.5" y="219.8" width="1.1" height="5.3" fill="#ffff66"/><rect x="880.5" y="220.8" width="1.1" height="3.2" fill="#ff0000"/><rect x="881.5" y="220.8" width="1.1" height="2.1" fill="#0a84ff"/><rect x="882.5" y="220.8" width="1.1" height="2.1" fill="#ff0000"/><rect x="883.5" y="220.8" width="1.1" height="1.1" fill="#0a84ff"/><rect x="884.5" y="219.8" width="1.1" height="2.1" fill="#ff0000"/><rect x="885.5" y="219.8" width="1.1" height="3.2" fill="#0a84ff"/><rect x="886.5" y="218.7" width="1.1" height="2.1" fill="#ffff66"/><rect x="887.5" y="218.7" width="1.1" height="2.1" fill="#ff0000"/><rect x="888.5" y="215.5" width="1.1" height="4.2" fill="#ff0000"/><rect x="889.5" y="214.5" width="1.1" height="4.2" fill="#ff0000"/><rect x="890.5" y="215.5" width="1.1" height="3.2" fill="#ff0000"/><rect x="891.5" y="214.5" width="1.1" height="2.1" fill="#ff0000"/><rect x="892.5" y="214.5" width="1.1" height="4.2" fill="#0a84ff"/><rect x="893.5" y="217.7" width="1.1" height="2.1" fill="#0a84ff"/><rect x="894.5" y="218.7" width="1.1" height="3.2" fill="#0a84ff"/><rect x="895.5" y="216.6" width="1.1" height="6.4" fill="#0a84ff"/><rect x="896.5" y="218.7" width="1.1" height="6.4" fill="#0a84ff"/><rect x="897.5" y="221.9" width="1.1" height="3.2" fill="#ffff66"/><rect x="898.5" y="224.0" width="1.1" height="2.1" fill="#ffff66"/><rect x="899.5" y="224.0" width="1.1" height="4.2" fill="#ff0000"/><rect x="900.5" y="224.0" width="1.1" height="2.1" fill="#ffff66"/><rect x="901.5" y="221.9" width="1.1" height="3.2" fill="#ff0000"/><rect x="902.5" y="220.8" width="1.1" height="4.2" fill="#ff0000"/><rect x="903.5" y="219.8" width="1.1" height="2.1" fill="#ff0000"/><rect x="904.5" y="219.8" width="1.1" height="2.1" fill="#ffff66"/><rect x="905.5" y="218.7" width="1.1" height="2.1" fill="#ff0000"/><rect x="906.5" y="217.7" width="1.1" height="2.1" fill="#ff0000"/><rect x="907.5" y="217.7" width="1.1" height="1.1" fill="#0a84ff"/><rect x="908.5" y="215.5" width="1.1" height="3.2" fill="#ff0000"/><rect x="909.5" y="215.5" width="1.1" height="2.1" fill="#ffff66"/><rect x="910.5" y="213.4" width="1.1" height="3.2" fill="#ff0000"/><rect x="911.5" y="213.4" width="1.1" height="1.1" fill="#ffff66"/><rect x="912.5" y="211.3" width="1.1" height="3.2" fill="#ff0000"/><rect x="913.5" y="209.2" width="1.1" height="3.2" fill="#ff0000"/><rect x="914.5" y="203.9" width="1.1" height="6.4" fill="#ff0000"/><rect x="915.5" y="203.9" width="1.1" height="3.2" fill="#0a84ff"/><rect x="916.5" y="206.0" width="1.1" height="2.1" fill="#0a84ff"/><rect x="917.5" y="206.0" width="1.1" height="2.1" fill="#ffff66"/><rect x="918.5" y="207.1" width="1.1" height="2.1" fill="#0a84ff"/><rect x="919.5" y="208.1" width="1.1" height="1.1" fill="#ff0000"/><rect x="920.5" y="207.1" width="1.1" height="2.1" fill="#ffff66"/><rect x="921.5" y="206.0" width="1.1" height="5.3" fill="#0a84ff"/><rect x="922.5" y="208.1" width="1.1" height="3.2" fill="#ff0000"/><rect x="923.5" y="207.1" width="1.1" height="2.1" fill="#ff0000"/><rect x="924.5" y="207.1" width="1.1" height="1.1" fill="#ffff66"/><rect x="925.5" y="207.1" width="1.1" height="3.2" fill="#0a84ff"/><rect x="926.5" y="207.1" width="1.1" height="3.2" fill="#0a84ff"/><rect x="927.5" y="208.1" width="1.1" height="3.2" fill="#0a84ff"/><rect x="928.5" y="210.2" width="1.1" height="2.1" fill="#0a84ff"/><rect x="929.5" y="211.3" width="1.1" height="2.1" fill="#ffff66"/><rect x="930.5" y="209.2" width="1.1" height="4.2" fill="#ff0000"/><rect x="931.5" y="209.2" width="1.1" height="3.2" fill="#ff0000"/><rect x="932.5" y="208.1" width="1.1" height="2.1" fill="#ff0000"/><rect x="933.5" y="207.1" width="1.1" height="2.1" fill="#ff0000"/><rect x="934.5" y="207.1" width="1.1" height="1.1" fill="#ffff66"/><rect x="935.5" y="207.1" width="1.1" height="2.1" fill="#0a84ff"/><rect x="936.5" y="208.1" width="1.1" height="3.2" fill="#0a84ff"/><rect x="937.5" y="210.2" width="1.1" height="2.1" fill="#0a84ff"/><rect x="938.5" y="211.3" width="1.1" height="2.1" fill="#ffff66"/><rect x="939.5" y="211.3" width="1.1" height="1.1" fill="#ff0000"/><rect x="940.5" y="210.2" width="1.1" height="2.1" fill="#ff0000"/><rect x="941.5" y="210.2" width="1.1" height="1.1" fill="#ffff66"/><rect x="942.5" y="209.2" width="1.1" height="2.1" fill="#ffff66"/><rect x="943.5" y="210.2" width="1.1" height="1.1" fill="#ffff66"/><rect x="944.5" y="208.1" width="1.1" height="3.2" fill="#0a84ff"/><rect x="945.5" y="208.1" width="1.1" height="3.2" fill="#ffff66"/><rect x="946.5" y="209.2" width="1.1" height="3.2" fill="#ffff66"/><rect x="947.5" y="208.1" width="1.1" height="2.1" fill="#ff0000"/><rect x="948.5" y="208.1" width="1.1" height="2.1" fill="#ffff66"/><rect x="949.5" y="206.0" width="1.1" height="4.2" fill="#ff0000"/><rect x="950.5" y="204.9" width="1.1" height="4.2" fill="#ff0000"/><rect x="951.5" y="202.8" width="1.1" height="3.2" fill="#ff0000"/><rect x="952.5" y="202.8" width="1.1" height="4.2" fill="#ff0000"/><rect x="953.5" y="202.8" width="1.1" height="1.1" fill="#ffff66"/><rect x="954.5" y="201.8" width="1.1" height="4.2" fill="#0a84ff"/><rect x="955.5" y="201.8" width="1.1" height="2.1" fill="#0a84ff"/><rect x="956.5" y="202.8" width="1.1" height="2.1" fill="#ffff66"/><rect x="957.5" y="202.8" width="1.1" height="2.1" fill="#0a84ff"/><rect x="958.5" y="200.7" width="1.1" height="4.2" fill="#ff0000"/><rect x="959.5" y="202.8" width="1.1" height="1.1" fill="#ffff66"/><rect x="960.5" y="202.8" width="1.1" height="2.1" fill="#0a84ff"/><rect x="961.5" y="202.8" width="1.1" height="3.2" fill="#ffff66"/><rect x="962.5" y="204.9" width="1.1" height="2.1" fill="#0a84ff"/><rect x="963.5" y="204.9" width="1.1" height="4.2" fill="#ffff66"/><rect x="964.5" y="204.9" width="1.1" height="2.1" fill="#ffff66"/><rect x="965.5" y="202.8" width="1.1" height="3.2" fill="#ffff66"/><rect x="966.5" y="203.9" width="1.1" height="1.1" fill="#ffff66"/><rect x="967.5" y="201.8" width="1.1" height="3.2" fill="#ffff66"/><rect x="968.5" y="199.6" width="1.1" height="4.2" fill="#ff0000"/><rect x="969.5" y="200.7" width="1.1" height="3.2" fill="#0a84ff"/><rect x="970.5" y="201.8" width="1.1" height="3.2" fill="#ffff66"/><rect x="971.5" y="201.8" width="1.1" height="1.1" fill="#ffff66"/><rect x="972.5" y="201.8" width="1.1" height="1.1" fill="#ffff66"/><rect x="973.5" y="200.7" width="1.1" height="2.1" fill="#ffff66"/><rect x="974.5" y="199.6" width="1.1" height="3.2" fill="#ff0000"/><rect x="975.5" y="198.6" width="1.1" height="2.1" fill="#ff0000"/><rect x="976.5" y="198.6" width="1.1" height="3.2" fill="#ff0000"/><rect x="977.5" y="196.5" width="1.1" height="3.2" fill="#ff0000"/><rect x="978.5" y="195.4" width="1.1" height="2.1" fill="#ff0000"/><rect x="979.5" y="194.3" width="1.1" height="4.2" fill="#ff0000"/><rect x="980.5" y="194.3" width="1.1" height="1.1" fill="#ffff66"/><rect x="981.5" y="194.3" width="1.1" height="3.2" fill="#0a84ff"/><rect x="982.5" y="196.5" width="1.1" height="4.2" fill="#0a84ff"/><rect x="983.5" y="197.5" width="1.1" height="3.2" fill="#ffff66"/><rect x="984.5" y="198.6" width="1.1" height="4.2" fill="#0a84ff"/><rect x="985.5" y="201.8" width="1.1" height="2.1" fill="#ffff66"/><rect x="986.5" y="201.8" width="1.1" height="2.1" fill="#ffff66"/><rect x="987.5" y="201.8" width="1.1" height="2.1" fill="#ffff66"/><rect x="988.5" y="201.8" width="1.1" height="2.1" fill="#ff0000"/><rect x="989.5" y="201.8" width="1.1" height="2.1" fill="#ffff66"/><rect x="990.5" y="200.7" width="1.1" height="2.1" fill="#ff0000"/><rect x="991.5" y="200.7" width="1.1" height="1.1" fill="#ffff66"/><rect x="992.5" y="199.6" width="1.1" height="3.2" fill="#ff0000"/><rect x="993.5" y="199.6" width="1.1" height="2.1" fill="#ffff66"/><rect x="994.5" y="199.6" width="1.1" height="2.1" fill="#ffff66"/><rect x="995.5" y="199.6" width="1.1" height="2.1" fill="#ffff66"/><rect x="997.5" y="200.7" width="1.1" height="2.1" fill="#0a84ff"/><rect x="998.5" y="201.8" width="1.1" height="1.1" fill="#ffff66"/><rect x="999.5" y="201.8" width="1.1" height="2.1" fill="#0a84ff"/><rect x="1000.5" y="202.8" width="1.1" height="1.1" fill="#ffff66"/><rect x="1001.5" y="202.8" width="1.1" height="2.1" fill="#ffff66"/><rect x="1003.5" y="203.9" width="1.1" height="1.1" fill="#ffff66"/><rect x="1004.5" y="203.9" width="1.1" height="2.1" fill="#0a84ff"/><rect x="1005.5" y="204.9" width="1.1" height="2.1" fill="#ffff66"/><rect x="1006.5" y="203.9" width="1.1" height="2.1" fill="#ffff66"/><rect x="1007.5" y="203.9" width="1.1" height="1.1" fill="#ffff66"/><rect x="1009.5" y="202.8" width="1.1" height="2.1" fill="#ffff66"/><rect x="1010.5" y="200.7" width="1.1" height="3.2" fill="#ffff66"/><rect x="1011.5" y="201.8" width="1.1" height="2.1" fill="#ffff66"/><rect x="1012.5" y="201.8" width="1.1" height="2.1" fill="#ffff66"/><rect x="1013.5" y="201.8" width="1.1" height="1.1" fill="#ffff66"/><rect x="1014.5" y="200.7" width="1.1" height="2.1" fill="#ffff66"/><rect x="1015.5" y="199.6" width="1.1" height="2.1" fill="#ff0000"/><rect x="1016.5" y="198.6" width="1.1" height="2.1" fill="#ffff66"/><rect x="1017.5" y="199.6" width="1.1" height="1.1" fill="#ffff66"/><rect x="1018.5" y="198.6" width="1.1" height="2.1" fill="#ffff66"/><rect x="1019.5" y="199.6" width="1.1" height="1.1" fill="#ffff66"/><rect x="1020.5" y="199.6" width="1.1" height="2.1" fill="#0a84ff"/><rect x="1021.5" y="200.7" width="1.1" height="1.1" fill="#ffff66"/><rect x="1022.5" y="200.7" width="1.1" height="1.1" fill="#ffff66"/><rect x="1023.5" y="200.7" width="1.1" height="1.1" fill="#ffff66"/><rect x="1024.5" y="199.6" width="1.1" height="2.1" fill="#ff0000"/><rect x="1025.5" y="199.6" width="1.1" height="1.1" fill="#ffff66"/><rect x="1026.5" y="198.6" width="1.1" height="3.2" fill="#ff0000"/><rect x="1028.5" y="197.5" width="1.1" height="2.1" fill="#ffff66"/><rect x="1029.5" y="196.5" width="1.1" height="2.1" fill="#ffff66"/><rect x="1030.5" y="196.5" width="1.1" height="1.1" fill="#ffff66"/><rect x="1031.5" y="194.3" width="1.1" height="4.2" fill="#ff0000"/><rect x="1032.5" y="194.3" width="1.1" height="1.1" fill="#ffff66"/><rect x="1033.5" y="194.3" width="1.1" height="2.1" fill="#ffff66"/><rect x="1034.5" y="195.4" width="1.1" height="1.1" fill="#ffff66"/><rect x="1035.5" y="195.4" width="1.1" height="3.2" fill="#0a84ff"/><rect x="1036.5" y="197.5" width="1.1" height="1.1" fill="#ffff66"/><rect x="1038.5" y="197.5" width="1.1" height="3.2" fill="#0a84ff"/><rect x="1039.5" y="198.6" width="1.1" height="1.1" fill="#ffff66"/><rect x="1040.5" y="198.6" width="1.1" height="1.1" fill="#ffff66"/><rect x="1041.5" y="197.5" width="1.1" height="3.2" fill="#0a84ff"/><rect x="1042.5" y="199.6" width="1.1" height="2.1" fill="#0a84ff"/><rect x="1043.5" y="200.7" width="1.1" height="2.1" fill="#ffff66"/><rect x="1044.5" y="201.8" width="1.1" height="1.1" fill="#ffff66"/><rect x="1045.5" y="201.8" width="1.1" height="2.1" fill="#0a84ff"/><rect x="1046.5" y="202.8" width="1.1" height="2.1" fill="#ffff66"/><rect x="1047.5" y="202.8" width="1.1" height="2.1" fill="#ff0000"/><rect x="1048.5" y="201.8" width="1.1" height="2.1" fill="#ff0000"/><rect x="1049.5" y="201.8" width="1.1" height="1.1" fill="#ffff66"/><rect x="1050.5" y="201.8" width="1.1" height="1.1" fill="#ffff66"/><rect x="1051.5" y="201.8" width="1.1" height="3.2" fill="#0a84ff"/><rect x="1052.5" y="203.9" width="1.1" height="2.1" fill="#0a84ff"/><rect x="1053.5" y="204.9" width="1.1" height="3.2" fill="#0a84ff"/><rect x="1054.5" y="207.1" width="1.1" height="2.1" fill="#0a84ff"/><rect x="1055.5" y="208.1" width="1.1" height="3.2" fill="#0a84ff"/><rect x="1056.5" y="209.2" width="1.1" height="3.2" fill="#0a84ff"/><rect x="1057.5" y="211.3" width="1.1" height="3.2" fill="#0a84ff"/><rect x="1058.5" y="213.4" width="1.1" height="2.1" fill="#ffff66"/><rect x="1059.5" y="213.4" width="1.1" height="2.1" fill="#ff0000"/><rect x="1060.5" y="211.3" width="1.1" height="3.2" fill="#ff0000"/><rect x="1061.5" y="210.2" width="1.1" height="3.2" fill="#ff0000"/><rect x="1063.5" y="210.2" width="1.1" height="1.1" fill="#ffff66"/><rect x="1064.5" y="210.2" width="1.1" height="1.1" fill="#ffff66"/><rect x="1065.5" y="210.2" width="1.1" height="1.1" fill="#ffff66"/><rect x="1066.5" y="210.2" width="1.1" height="1.1" fill="#ffff66"/><rect x="1067.5" y="210.2" width="1.1" height="1.1" fill="#ffff66"/><rect x="1068.5" y="210.2" width="1.1" height="3.2" fill="#0a84ff"/><rect x="1069.5" y="211.3" width="1.1" height="2.1" fill="#ffff66"/><rect x="1071.5" y="211.3" width="1.1" height="2.1" fill="#ff0000"/><rect x="1072.5" y="210.2" width="1.1" height="3.2" fill="#0a84ff"/><rect x="1073.5" y="212.4" width="1.1" height="1.1" fill="#ffff66"/><rect x="1075.5" y="212.4" width="1.1" height="1.1" fill="#ffff66"/><rect x="1076.5" y="212.4" width="1.1" height="2.1" fill="#ffff66"/><rect x="1077.5" y="213.4" width="1.1" height="2.1" fill="#ffff66"/><rect x="1078.5" y="214.5" width="1.1" height="2.1" fill="#0a84ff"/><rect x="1079.5" y="215.5" width="1.1" height="2.1" fill="#ffff66"/><rect x="1081.5" y="216.6" width="1.1" height="2.1" fill="#0a84ff"/><rect x="1082.5" y="217.7" width="1.1" height="2.1" fill="#0a84ff"/><rect x="1083.5" y="217.7" width="1.1" height="2.1" fill="#ffff66"/><rect x="1084.5" y="217.7" width="1.1" height="2.1" fill="#0a84ff"/><rect x="1087.5" y="217.7" width="1.1" height="2.1" fill="#ff0000"/><rect x="1088.5" y="216.6" width="1.1" height="2.1" fill="#ffff66"/><rect x="1089.5" y="216.6" width="1.1" height="2.1" fill="#0a84ff"/><rect x="1090.5" y="217.7" width="1.1" height="1.1" fill="#ffff66"/><rect x="1092.5" y="213.4" width="1.1" height="5.3" fill="#ff0000"/><rect x="1093.5" y="212.4" width="1.1" height="3.2" fill="#ffff66"/><rect x="1094.5" y="211.3" width="1.1" height="2.1" fill="#ffff66"/><rect x="1095.5" y="211.3" width="1.1" height="2.1" fill="#ff0000"/><rect x="1096.5" y="211.3" width="1.1" height="1.1" fill="#ffff66"/><rect x="1097.5" y="211.3" width="1.1" height="1.1" fill="#ffff66"/><rect x="1098.5" y="211.3" width="1.1" height="1.1" fill="#ffff66"/><rect x="1099.5" y="211.3" width="1.1" height="2.1" fill="#0a84ff"/><rect x="1100.5" y="212.4" width="1.1" height="2.1" fill="#ffff66"/><rect x="1101.5" y="213.4" width="1.1" height="1.1" fill="#ffff66"/><rect x="1102.5" y="213.4" width="1.1" height="1.1" fill="#ffff66"/><rect x="1103.5" y="213.4" width="1.1" height="1.1" fill="#ffff66"/><rect x="1104.5" y="212.4" width="1.1" height="3.2" fill="#ffff66"/><rect x="1105.5" y="211.3" width="1.1" height="3.2" fill="#ffff66"/><rect x="1106.5" y="211.3" width="1.1" height="2.1" fill="#ffff66"/><rect x="1107.5" y="212.4" width="1.1" height="1.1" fill="#ffff66"/><rect x="1108.5" y="212.4" width="1.1" height="1.1" fill="#ffff66"/><rect x="1109.5" y="212.4" width="1.1" height="1.1" fill="#ffff66"/><rect x="1111.5" y="210.2" width="1.1" height="3.2" fill="#ff0000"/><rect x="1112.5" y="209.2" width="1.1" height="2.1" fill="#ffff66"/><rect x="1114.5" y="207.1" width="1.1" height="3.2" fill="#ff0000"/><rect x="1115.5" y="206.0" width="1.1" height="2.1" fill="#ffff66"/><rect x="1116.5" y="206.0" width="1.1" height="1.1" fill="#ffff66"/><rect x="1117.5" y="204.9" width="1.1" height="2.1" fill="#ffff66"/><rect x="1118.5" y="204.9" width="1.1" height="1.1" fill="#ffff66"/><rect x="1119.5" y="204.9" width="1.1" height="2.1" fill="#0a84ff"/><rect x="1120.5" y="204.9" width="1.1" height="3.2" fill="#ff0000"/><rect x="1121.5" y="204.9" width="1.1" height="2.1" fill="#0a84ff"/><rect x="1122.5" y="206.0" width="1.1" height="1.1" fill="#ffff66"/><rect x="1123.5" y="206.0" width="1.1" height="2.1" fill="#0a84ff"/><rect x="1125.5" y="207.1" width="1.1" height="1.1" fill="#ffff66"/><rect x="1126.5" y="206.0" width="1.1" height="2.1" fill="#ff0000"/><rect x="1127.5" y="204.9" width="1.1" height="2.1" fill="#ffff66"/><rect x="1129.5" y="206.0" width="1.1" height="1.1" fill="#ffff66"/><rect x="1130.5" y="206.0" width="1.1" height="1.1" fill="#ffff66"/><rect x="1131.5" y="206.0" width="1.1" height="3.2" fill="#0a84ff"/><rect x="1132.5" y="207.1" width="1.1" height="4.2" fill="#0a84ff"/><rect x="1134.5" y="210.2" width="1.1" height="4.2" fill="#0a84ff"/><rect x="1136.5" y="209.2" width="1.1" height="5.3" fill="#ff0000"/><rect x="1137.5" y="209.2" width="1.1" height="1.1" fill="#ffff66"/><rect x="1138.5" y="208.1" width="1.1" height="2.1" fill="#ff0000"/><rect x="1139.5" y="208.1" width="1.1" height="2.1" fill="#ffff66"/><rect x="1141.5" y="209.2" width="1.1" height="1.1" fill="#ffff66"/><rect x="1143.5" y="209.2" width="1.1" height="3.2" fill="#0a84ff"/><rect x="1144.5" y="210.2" width="1.1" height="2.1" fill="#ffff66"/><rect x="1145.5" y="210.2" width="1.1" height="3.2" fill="#0a84ff"/><rect x="1147.5" y="212.4" width="1.1" height="4.2" fill="#0a84ff"/><rect x="1148.5" y="215.5" width="1.1" height="2.1" fill="#0a84ff"/><rect x="1149.5" y="216.6" width="1.1" height="2.1" fill="#0a84ff"/><rect x="1150.5" y="217.7" width="1.1" height="1.1" fill="#ffff66"/><rect x="1151.5" y="217.7" width="1.1" height="2.1" fill="#ffff66"/><rect x="1152.5" y="218.7" width="1.1" height="2.1" fill="#0a84ff"/><rect x="1153.5" y="218.7" width="1.1" height="2.1" fill="#ff0000"/><rect x="1154.5" y="217.7" width="1.1" height="2.1" fill="#ffff66"/><rect x="1155.5" y="216.6" width="1.1" height="2.1" fill="#ffff66"/><rect x="1156.5" y="215.5" width="1.1" height="2.1" fill="#ff0000"/><rect x="1157.5" y="215.5" width="1.1" height="1.1" fill="#ffff66"/><rect x="1159.5" y="215.5" width="1.1" height="3.2" fill="#0a84ff"/><rect x="1161.5" y="217.7" width="1.1" height="2.1" fill="#ffff66"/><rect x="1162.5" y="218.7" width="1.1" height="1.1" fill="#ffff66"/><rect x="1163.5" y="218.7" width="1.1" height="1.1" fill="#ffff66"/><rect x="1164.5" y="217.7" width="1.1" height="2.1" fill="#ffff66"/><rect x="1166.5" y="216.6" width="1.1" height="3.2" fill="#ffff66"/><rect x="1169.5" y="215.5" width="1.1" height="2.1" fill="#ff0000"/><rect x="1170.5" y="215.5" width="1.1" height="1.1" fill="#ffff66"/><rect x="1171.5" y="215.5" width="1.1" height="1.1" fill="#ffff66"/><rect x="1173.5" y="215.5" width="1.1" height="1.1" fill="#ffff66"/><rect x="1175.5" y="214.5" width="1.1" height="3.2" fill="#ffff66"/><rect x="1176.5" y="214.5" width="1.1" height="4.2" fill="#0a84ff"/><rect x="1177.5" y="216.6" width="1.1" height="1.1" fill="#ffff66"/><rect x="1178.5" y="216.6" width="1.1" height="2.1" fill="#ffff66"/><rect x="1179.5" y="216.6" width="1.1" height="1.1" fill="#ffff66"/><rect x="1180.5" y="216.6" width="1.1" height="1.1" fill="#ffff66"/><rect x="1181.5" y="214.5" width="1.1" height="3.2" fill="#ffff66"/><rect x="1182.5" y="215.5" width="1.1" height="1.1" fill="#ffff66"/><rect x="1183.5" y="215.5" width="1.1" height="2.1" fill="#ffff66"/><rect x="1184.5" y="216.6" width="1.1" height="1.1" fill="#ffff66"/><rect x="1185.5" y="216.6" width="1.1" height="1.1" fill="#ffff66"/><rect x="1186.5" y="215.5" width="1.1" height="2.1" fill="#ffff66"/><rect x="1187.5" y="215.5" width="1.1" height="2.1" fill="#ffff66"/><rect x="1188.5" y="215.5" width="1.1" height="2.1" fill="#ffff66"/><rect x="1190.5" y="215.5" width="1.1" height="1.1" fill="#ffff66"/><rect x="1191.5" y="215.5" width="1.1" height="1.1" fill="#ffff66"/><rect x="1192.5" y="215.5" width="1.1" height="1.1" fill="#ffff66"/><rect x="1193.5" y="215.5" width="1.1" height="2.1" fill="#0a84ff"/><rect x="1194.5" y="216.6" width="1.1" height="1.1" fill="#ffff66"/><rect x="1195.5" y="216.6" width="1.1" height="1.1" fill="#ffff66"/><rect x="1196.5" y="215.5" width="1.1" height="2.1" fill="#ff0000"/><rect x="1197.5" y="215.5" width="1.1" height="1.1" fill="#ffff66"/><rect x="1199.5" y="215.5" width="1.1" height="1.1" fill="#ffff66"/><rect x="1200.5" y="215.5" width="1.1" height="1.1" fill="#ffff66"/><rect x="1201.5" y="215.5" width="1.1" height="1.1" fill="#ffff66"/><rect x="1202.5" y="212.4" width="1.1" height="4.2" fill="#ff0000"/><rect x="1205.5" y="210.2" width="1.1" height="4.2" fill="#ff0000"/><rect x="1206.5" y="209.2" width="1.1" height="2.1" fill="#ff0000"/><rect x="1207.5" y="208.1" width="1.1" height="2.1" fill="#ffff66"/><rect x="1208.5" y="209.2" width="1.1" height="1.1" fill="#ffff66"/><rect x="1209.5" y="209.2" width="1.1" height="2.1" fill="#ffff66"/><rect x="1210.5" y="210.2" width="1.1" height="1.1" fill="#ffff66"/><rect x="1211.5" y="210.2" width="1.1" height="2.1" fill="#0a84ff"/><rect x="1212.5" y="211.3" width="1.1" height="1.1" fill="#ffff66"/><rect x="1213.5" y="210.2" width="1.1" height="2.1" fill="#ffff66"/><rect x="1214.5" y="210.2" width="1.1" height="1.1" fill="#ffff66"/><rect x="1215.5" y="210.2" width="1.1" height="1.1" fill="#ffff66"/><rect x="1216.5" y="210.2" width="1.1" height="2.1" fill="#ffff66"/><rect x="1217.5" y="211.3" width="1.1" height="1.1" fill="#ffff66"/><rect x="1218.5" y="211.3" width="1.1" height="1.1" fill="#ffff66"/><rect x="1219.5" y="210.2" width="1.1" height="2.1" fill="#ffff66"/><rect x="1220.5" y="210.2" width="1.1" height="1.1" fill="#ffff66"/><rect x="1221.5" y="209.2" width="1.1" height="2.1" fill="#ffff66"/><rect x="1222.5" y="209.2" width="1.1" height="1.1" fill="#ffff66"/><rect x="1224.5" y="209.2" width="1.1" height="3.2" fill="#0a84ff"/><rect x="1225.5" y="211.3" width="1.1" height="1.1" fill="#ffff66"/><rect x="1227.5" y="210.2" width="1.1" height="2.1" fill="#ffff66"/><rect x="1228.5" y="209.2" width="1.1" height="2.1" fill="#ff0000"/><rect x="1229.5" y="209.2" width="1.1" height="4.2" fill="#0a84ff"/><rect x="1230.5" y="212.4" width="1.1" height="3.2" fill="#0a84ff"/><rect x="1231.5" y="213.4" width="1.1" height="2.1" fill="#ff0000"/><rect x="1232.5" y="210.2" width="1.1" height="4.2" fill="#ff0000"/><rect x="1233.5" y="209.2" width="1.1" height="5.3" fill="#0a84ff"/><rect x="775.5" y="83.0" width="1.1" height="62.0" fill="#0a84ff"/><rect x="774.5" y="85.0" width="1.1" height="15.0" fill="#ff0000"/><rect x="777.5" y="140.0" width="1.1" height="23.0" fill="#0a84ff"/><rect x="779.5" y="125.0" width="1.1" height="15.0" fill="#0a84ff"/><rect x="109.5" y="67.0" width="1.1" height="6.5" fill="#0a84ff"/><rect x="155.5" y="69.0" width="1.1" height="4.5" fill="#0a84ff"/><rect x="898.5" y="222.0" width="1.1" height="7.0" fill="#0a84ff"/><rect x="929.5" y="209.0" width="1.1" height="8.0" fill="#ff0000"/><rect x="824.5" y="155.0" width="1.1" height="8.0" fill="#ff0000"/><rect x="1228.5" y="208.0" width="1.1" height="6.0" fill="#ff0000"/><rect x="1230.5" y="213.0" width="1.1" height="5.0" fill="#0a84ff"/></g>
<g shape-rendering="crispEdges"><rect x="63.5" y="308.4" width="1.1" height="2.0" fill="#ffff66"/><rect x="64.5" y="304.6" width="1.1" height="5.8" fill="#ffff66"/><rect x="65.5" y="304.6" width="1.1" height="9.7" fill="#ff0000"/><rect x="66.5" y="304.6" width="1.1" height="2.0" fill="#ffff66"/><rect x="67.5" y="300.7" width="1.1" height="5.8" fill="#ff0000"/><rect x="68.5" y="293.1" width="1.1" height="9.7" fill="#ff0000"/><rect x="69.5" y="277.7" width="1.1" height="13.5" fill="#ff0000"/><rect x="70.5" y="273.9" width="1.1" height="5.8" fill="#ff0000"/><rect x="72.5" y="273.9" width="1.1" height="2.0" fill="#ffff66"/><rect x="73.5" y="273.9" width="1.1" height="2.0" fill="#ffff66"/><rect x="74.5" y="273.9" width="1.1" height="2.0" fill="#ffff66"/><rect x="75.5" y="270.0" width="1.1" height="5.8" fill="#ffff66"/><rect x="76.5" y="273.9" width="1.1" height="2.0" fill="#ffff66"/><rect x="77.5" y="273.9" width="1.1" height="2.0" fill="#ffff66"/><rect x="78.5" y="273.9" width="1.1" height="9.7" fill="#0a84ff"/><rect x="79.5" y="273.9" width="1.1" height="5.8" fill="#ff0000"/><rect x="80.5" y="273.9" width="1.1" height="2.0" fill="#ffff66"/><rect x="81.5" y="270.0" width="1.1" height="9.7" fill="#0a84ff"/><rect x="82.5" y="277.7" width="1.1" height="2.0" fill="#ffff66"/><rect x="85.5" y="293.1" width="1.1" height="2.0" fill="#ffff66"/><rect x="86.5" y="293.1" width="1.1" height="13.5" fill="#0a84ff"/><rect x="87.5" y="300.7" width="1.1" height="2.0" fill="#ffff66"/><rect x="88.5" y="300.7" width="1.1" height="13.5" fill="#0a84ff"/><rect x="89.5" y="308.4" width="1.1" height="2.0" fill="#ffff66"/><rect x="92.5" y="293.1" width="1.1" height="13.5" fill="#ff0000"/><rect x="93.5" y="293.1" width="1.1" height="2.0" fill="#ffff66"/><rect x="96.5" y="293.1" width="1.1" height="5.8" fill="#0a84ff"/><rect x="98.5" y="296.9" width="1.1" height="9.7" fill="#0a84ff"/><rect x="99.5" y="296.9" width="1.1" height="13.5" fill="#ff0000"/><rect x="100.5" y="296.9" width="1.1" height="2.0" fill="#ffff66"/><rect x="101.5" y="293.1" width="1.1" height="5.8" fill="#ff0000"/><rect x="102.5" y="293.1" width="1.1" height="2.0" fill="#ffff66"/><rect x="103.5" y="293.1" width="1.1" height="13.5" fill="#0a84ff"/><rect x="104.5" y="300.7" width="1.1" height="9.7" fill="#0a84ff"/><rect x="105.5" y="304.6" width="1.1" height="9.7" fill="#0a84ff"/><rect x="106.5" y="308.4" width="1.1" height="13.5" fill="#0a84ff"/><rect x="107.5" y="319.9" width="1.1" height="9.7" fill="#0a84ff"/><rect x="108.5" y="327.6" width="1.1" height="5.8" fill="#0a84ff"/><rect x="110.5" y="327.6" width="1.1" height="9.7" fill="#ff0000"/><rect x="111.5" y="327.6" width="1.1" height="2.0" fill="#ffff66"/><rect x="112.5" y="323.8" width="1.1" height="9.7" fill="#ff0000"/><rect x="113.5" y="323.8" width="1.1" height="2.0" fill="#ffff66"/><rect x="114.5" y="319.9" width="1.1" height="2.0" fill="#ffff66"/><rect x="115.5" y="319.9" width="1.1" height="2.0" fill="#ffff66"/><rect x="116.5" y="316.1" width="1.1" height="2.0" fill="#ffff66"/><rect x="117.5" y="316.1" width="1.1" height="2.0" fill="#ffff66"/><rect x="118.5" y="316.1" width="1.1" height="2.0" fill="#ffff66"/><rect x="119.5" y="319.9" width="1.1" height="2.0" fill="#ffff66"/><rect x="120.5" y="323.8" width="1.1" height="2.0" fill="#ffff66"/><rect x="121.5" y="327.6" width="1.1" height="5.8" fill="#ffff66"/><rect x="122.5" y="327.6" width="1.1" height="2.0" fill="#ffff66"/><rect x="123.5" y="327.6" width="1.1" height="9.7" fill="#0a84ff"/><rect x="125.5" y="335.3" width="1.1" height="9.7" fill="#0a84ff"/><rect x="126.5" y="343.0" width="1.1" height="2.0" fill="#ffff66"/><rect x="127.5" y="343.0" width="1.1" height="9.7" fill="#0a84ff"/><rect x="128.5" y="350.7" width="1.1" height="2.0" fill="#ffff66"/><rect x="129.5" y="350.7" width="1.1" height="2.0" fill="#ffff66"/><rect x="130.5" y="346.8" width="1.1" height="5.8" fill="#ff0000"/><rect x="132.5" y="343.0" width="1.1" height="2.0" fill="#ffff66"/><rect x="133.5" y="343.0" width="1.1" height="2.0" fill="#ffff66"/><rect x="134.5" y="343.0" width="1.1" height="2.0" fill="#ffff66"/><rect x="135.5" y="343.0" width="1.1" height="2.0" fill="#ffff66"/><rect x="136.5" y="339.1" width="1.1" height="5.8" fill="#ff0000"/><rect x="137.5" y="346.8" width="1.1" height="2.0" fill="#ffff66"/><rect x="139.5" y="339.1" width="1.1" height="13.5" fill="#ff0000"/><rect x="140.5" y="335.3" width="1.1" height="5.8" fill="#ffff66"/><rect x="141.5" y="339.1" width="1.1" height="2.0" fill="#ffff66"/><rect x="142.5" y="339.1" width="1.1" height="2.0" fill="#ffff66"/><rect x="143.5" y="335.3" width="1.1" height="5.8" fill="#ff0000"/><rect x="144.5" y="335.3" width="1.1" height="5.8" fill="#ffff66"/><rect x="145.5" y="323.8" width="1.1" height="5.8" fill="#ffff66"/><rect x="146.5" y="327.6" width="1.1" height="2.0" fill="#ffff66"/><rect x="147.5" y="327.6" width="1.1" height="2.0" fill="#ffff66"/><rect x="148.5" y="327.6" width="1.1" height="9.7" fill="#0a84ff"/><rect x="149.5" y="335.3" width="1.1" height="2.0" fill="#ffff66"/><rect x="151.5" y="331.5" width="1.1" height="5.8" fill="#ff0000"/><rect x="152.5" y="327.6" width="1.1" height="9.7" fill="#ff0000"/><rect x="153.5" y="323.8" width="1.1" height="5.8" fill="#ff0000"/><rect x="154.5" y="323.8" width="1.1" height="2.0" fill="#ffff66"/><rect x="155.5" y="319.9" width="1.1" height="5.8" fill="#ffff66"/><rect x="156.5" y="319.9" width="1.1" height="5.8" fill="#ffff66"/><rect x="157.5" y="316.1" width="1.1" height="5.8" fill="#ffff66"/><rect x="158.5" y="319.9" width="1.1" height="2.0" fill="#ffff66"/><rect x="159.5" y="319.9" width="1.1" height="5.8" fill="#0a84ff"/><rect x="160.5" y="323.8" width="1.1" height="5.8" fill="#0a84ff"/><rect x="161.5" y="323.8" width="1.1" height="9.7" fill="#0a84ff"/><rect x="162.5" y="331.5" width="1.1" height="2.0" fill="#ffff66"/><rect x="164.5" y="327.6" width="1.1" height="2.0" fill="#ffff66"/><rect x="165.5" y="316.1" width="1.1" height="13.5" fill="#ff0000"/><rect x="166.5" y="312.3" width="1.1" height="9.7" fill="#ff0000"/><rect x="167.5" y="312.3" width="1.1" height="2.0" fill="#ffff66"/><rect x="168.5" y="308.4" width="1.1" height="5.8" fill="#ff0000"/><rect x="170.5" y="304.6" width="1.1" height="9.7" fill="#ff0000"/><rect x="173.5" y="304.6" width="1.1" height="2.0" fill="#ffff66"/><rect x="174.5" y="304.6" width="1.1" height="9.7" fill="#0a84ff"/><rect x="175.5" y="312.3" width="1.1" height="2.0" fill="#ffff66"/><rect x="176.5" y="312.3" width="1.1" height="5.8" fill="#ffff66"/><rect x="177.5" y="312.3" width="1.1" height="5.8" fill="#ffff66"/><rect x="178.5" y="312.3" width="1.1" height="9.7" fill="#0a84ff"/><rect x="179.5" y="316.1" width="1.1" height="2.0" fill="#ffff66"/><rect x="180.5" y="316.1" width="1.1" height="2.0" fill="#ffff66"/><rect x="181.5" y="316.1" width="1.1" height="2.0" fill="#ffff66"/><rect x="182.5" y="316.1" width="1.1" height="2.0" fill="#ffff66"/><rect x="185.5" y="312.3" width="1.1" height="9.7" fill="#ff0000"/><rect x="186.5" y="312.3" width="1.1" height="2.0" fill="#ffff66"/><rect x="188.5" y="312.3" width="1.1" height="2.0" fill="#ffff66"/><rect x="190.5" y="312.3" width="1.1" height="2.0" fill="#ffff66"/><rect x="191.5" y="312.3" width="1.1" height="2.0" fill="#ffff66"/><rect x="192.5" y="312.3" width="1.1" height="5.8" fill="#ffff66"/><rect x="193.5" y="319.9" width="1.1" height="2.0" fill="#ffff66"/><rect x="194.5" y="319.9" width="1.1" height="2.0" fill="#ffff66"/><rect x="195.5" y="319.9" width="1.1" height="2.0" fill="#ffff66"/><rect x="196.5" y="319.9" width="1.1" height="2.0" fill="#ffff66"/><rect x="197.5" y="319.9" width="1.1" height="2.0" fill="#ffff66"/><rect x="198.5" y="319.9" width="1.1" height="2.0" fill="#ffff66"/><rect x="200.5" y="316.1" width="1.1" height="2.0" fill="#ffff66"/><rect x="201.5" y="316.1" width="1.1" height="2.0" fill="#ffff66"/><rect x="202.5" y="316.1" width="1.1" height="13.5" fill="#0a84ff"/><rect x="204.5" y="319.9" width="1.1" height="5.8" fill="#ff0000"/><rect x="205.5" y="312.3" width="1.1" height="2.0" fill="#ffff66"/><rect x="206.5" y="308.4" width="1.1" height="2.0" fill="#ffff66"/><rect x="207.5" y="300.7" width="1.1" height="13.5" fill="#ff0000"/><rect x="208.5" y="304.6" width="1.1" height="5.8" fill="#ffff66"/><rect x="210.5" y="296.9" width="1.1" height="9.7" fill="#ff0000"/><rect x="211.5" y="293.1" width="1.1" height="9.7" fill="#ff0000"/><rect x="212.5" y="296.9" width="1.1" height="2.0" fill="#ffff66"/><rect x="213.5" y="296.9" width="1.1" height="2.0" fill="#ffff66"/><rect x="214.5" y="300.7" width="1.1" height="2.0" fill="#ffff66"/><rect x="215.5" y="308.4" width="1.1" height="2.0" fill="#ffff66"/><rect x="216.5" y="308.4" width="1.1" height="2.0" fill="#ffff66"/><rect x="217.5" y="308.4" width="1.1" height="2.0" fill="#ffff66"/><rect x="219.5" y="308.4" width="1.1" height="2.0" fill="#ffff66"/><rect x="222.5" y="300.7" width="1.1" height="13.5" fill="#ff0000"/><rect x="223.5" y="304.6" width="1.1" height="2.0" fill="#ffff66"/><rect x="226.5" y="293.1" width="1.1" height="17.4" fill="#ff0000"/><rect x="227.5" y="293.1" width="1.1" height="2.0" fill="#ffff66"/><rect x="228.5" y="293.1" width="1.1" height="2.0" fill="#ffff66"/><rect x="229.5" y="293.1" width="1.1" height="5.8" fill="#0a84ff"/><rect x="230.5" y="296.9" width="1.1" height="5.8" fill="#ffff66"/><rect x="233.5" y="296.9" width="1.1" height="9.7" fill="#0a84ff"/><rect x="234.5" y="300.7" width="1.1" height="2.0" fill="#ffff66"/><rect x="236.5" y="308.4" width="1.1" height="2.0" fill="#ffff66"/><rect x="237.5" y="304.6" width="1.1" height="5.8" fill="#ffff66"/><rect x="238.5" y="308.4" width="1.1" height="2.0" fill="#ffff66"/><rect x="240.5" y="312.3" width="1.1" height="5.8" fill="#ffff66"/><rect x="243.5" y="316.1" width="1.1" height="2.0" fill="#ffff66"/><rect x="244.5" y="312.3" width="1.1" height="5.8" fill="#ffff66"/><rect x="246.5" y="316.1" width="1.1" height="2.0" fill="#ffff66"/><rect x="248.5" y="316.1" width="1.1" height="2.0" fill="#ffff66"/><rect x="249.5" y="316.1" width="1.1" height="2.0" fill="#ffff66"/><rect x="250.5" y="316.1" width="1.1" height="2.0" fill="#ffff66"/><rect x="251.5" y="316.1" width="1.1" height="2.0" fill="#ffff66"/><rect x="255.5" y="327.6" width="1.1" height="2.0" fill="#ffff66"/><rect x="256.5" y="327.6" width="1.1" height="5.8" fill="#0a84ff"/><rect x="257.5" y="331.5" width="1.1" height="2.0" fill="#ffff66"/><rect x="258.5" y="327.6" width="1.1" height="13.5" fill="#0a84ff"/><rect x="259.5" y="339.1" width="1.1" height="2.0" fill="#ffff66"/><rect x="260.5" y="339.1" width="1.1" height="2.0" fill="#ffff66"/><rect x="261.5" y="339.1" width="1.1" height="2.0" fill="#ffff66"/><rect x="262.5" y="335.3" width="1.1" height="9.7" fill="#ff0000"/><rect x="263.5" y="335.3" width="1.1" height="2.0" fill="#ffff66"/><rect x="264.5" y="331.5" width="1.1" height="2.0" fill="#ffff66"/><rect x="265.5" y="331.5" width="1.1" height="2.0" fill="#ffff66"/><rect x="267.5" y="331.5" width="1.1" height="9.7" fill="#0a84ff"/><rect x="268.5" y="339.1" width="1.1" height="2.0" fill="#ffff66"/><rect x="270.5" y="343.0" width="1.1" height="2.0" fill="#ffff66"/><rect x="274.5" y="346.8" width="1.1" height="2.0" fill="#ffff66"/><rect x="276.5" y="346.8" width="1.1" height="2.0" fill="#ffff66"/><rect x="277.5" y="350.7" width="1.1" height="5.8" fill="#ffff66"/><rect x="278.5" y="346.8" width="1.1" height="5.8" fill="#ffff66"/><rect x="282.5" y="350.7" width="1.1" height="9.7" fill="#0a84ff"/><rect x="283.5" y="358.3" width="1.1" height="2.0" fill="#ffff66"/><rect x="284.5" y="354.5" width="1.1" height="5.8" fill="#ff0000"/><rect x="285.5" y="354.5" width="1.1" height="2.0" fill="#ffff66"/><rect x="286.5" y="350.7" width="1.1" height="5.8" fill="#ffff66"/><rect x="287.5" y="354.5" width="1.1" height="2.0" fill="#ffff66"/><rect x="289.5" y="354.5" width="1.1" height="2.0" fill="#ffff66"/><rect x="291.5" y="354.5" width="1.1" height="2.0" fill="#ffff66"/><rect x="292.5" y="354.5" width="1.1" height="2.0" fill="#ffff66"/><rect x="293.5" y="354.5" width="1.1" height="2.0" fill="#ffff66"/><rect x="294.5" y="354.5" width="1.1" height="5.8" fill="#0a84ff"/><rect x="295.5" y="354.5" width="1.1" height="9.7" fill="#0a84ff"/><rect x="296.5" y="358.3" width="1.1" height="2.0" fill="#ffff66"/><rect x="298.5" y="358.3" width="1.1" height="2.0" fill="#ffff66"/><rect x="299.5" y="354.5" width="1.1" height="5.8" fill="#ffff66"/><rect x="300.5" y="350.7" width="1.1" height="5.8" fill="#ffff66"/><rect x="301.5" y="350.7" width="1.1" height="2.0" fill="#ffff66"/><rect x="302.5" y="354.5" width="1.1" height="2.0" fill="#ffff66"/><rect x="303.5" y="354.5" width="1.1" height="2.0" fill="#ffff66"/><rect x="304.5" y="354.5" width="1.1" height="5.8" fill="#0a84ff"/><rect x="305.5" y="354.5" width="1.1" height="9.7" fill="#0a84ff"/><rect x="307.5" y="358.3" width="1.1" height="13.5" fill="#0a84ff"/><rect x="309.5" y="366.0" width="1.1" height="13.5" fill="#0a84ff"/><rect x="310.5" y="373.7" width="1.1" height="5.8" fill="#0a84ff"/><rect x="312.5" y="377.5" width="1.1" height="2.0" fill="#ffff66"/><rect x="313.5" y="373.7" width="1.1" height="13.5" fill="#0a84ff"/><rect x="315.5" y="385.2" width="1.1" height="17.4" fill="#0a84ff"/><rect x="316.5" y="396.7" width="1.1" height="2.0" fill="#ffff66"/><rect x="317.5" y="396.7" width="1.1" height="13.5" fill="#0a84ff"/><rect x="319.5" y="400.6" width="1.1" height="13.5" fill="#ff0000"/><rect x="320.5" y="392.9" width="1.1" height="17.4" fill="#ff0000"/><rect x="322.5" y="389.1" width="1.1" height="5.8" fill="#ff0000"/><rect x="323.5" y="389.1" width="1.1" height="2.0" fill="#ffff66"/><rect x="324.5" y="389.1" width="1.1" height="9.7" fill="#0a84ff"/><rect x="326.5" y="392.9" width="1.1" height="2.0" fill="#ffff66"/><rect x="327.5" y="392.9" width="1.1" height="2.0" fill="#ffff66"/><rect x="328.5" y="392.9" width="1.1" height="9.7" fill="#0a84ff"/><rect x="330.5" y="396.7" width="1.1" height="9.7" fill="#0a84ff"/><rect x="331.5" y="400.6" width="1.1" height="5.8" fill="#0a84ff"/><rect x="333.5" y="404.4" width="1.1" height="13.5" fill="#0a84ff"/><rect x="334.5" y="412.1" width="1.1" height="2.0" fill="#ffff66"/><rect x="335.5" y="412.1" width="1.1" height="9.7" fill="#0a84ff"/><rect x="336.5" y="415.9" width="1.1" height="5.8" fill="#0a84ff"/><rect x="339.5" y="419.8" width="1.1" height="9.7" fill="#0a84ff"/><rect x="340.5" y="423.6" width="1.1" height="2.0" fill="#ffff66"/><rect x="341.5" y="423.6" width="1.1" height="2.0" fill="#ffff66"/><rect x="342.5" y="423.6" width="1.1" height="2.0" fill="#ffff66"/><rect x="343.5" y="423.6" width="1.1" height="5.8" fill="#ffff66"/><rect x="344.5" y="423.6" width="1.1" height="2.0" fill="#ffff66"/><rect x="345.5" y="423.6" width="1.1" height="2.0" fill="#ffff66"/><rect x="346.5" y="419.8" width="1.1" height="5.8" fill="#ff0000"/><rect x="347.5" y="419.8" width="1.1" height="2.0" fill="#ffff66"/><rect x="348.5" y="415.9" width="1.1" height="13.5" fill="#0a84ff"/><rect x="349.5" y="427.5" width="1.1" height="5.8" fill="#ffff66"/><rect x="351.5" y="427.5" width="1.1" height="2.0" fill="#ffff66"/><rect x="354.5" y="423.6" width="1.1" height="5.8" fill="#ff0000"/><rect x="355.5" y="415.9" width="1.1" height="13.5" fill="#ff0000"/><rect x="357.5" y="419.8" width="1.1" height="2.0" fill="#ffff66"/><rect x="359.5" y="419.8" width="1.1" height="2.0" fill="#ffff66"/><rect x="361.5" y="419.8" width="1.1" height="5.8" fill="#0a84ff"/><rect x="362.5" y="423.6" width="1.1" height="2.0" fill="#ffff66"/><rect x="363.5" y="423.6" width="1.1" height="2.0" fill="#ffff66"/><rect x="364.5" y="423.6" width="1.1" height="5.8" fill="#0a84ff"/><rect x="365.5" y="427.5" width="1.1" height="9.7" fill="#0a84ff"/><rect x="366.5" y="431.3" width="1.1" height="2.0" fill="#ffff66"/><rect x="368.5" y="431.3" width="1.1" height="2.0" fill="#ffff66"/><rect x="369.5" y="431.3" width="1.1" height="2.0" fill="#ffff66"/><rect x="370.5" y="423.6" width="1.1" height="9.7" fill="#ff0000"/><rect x="371.5" y="427.5" width="1.1" height="2.0" fill="#ffff66"/><rect x="373.5" y="419.8" width="1.1" height="9.7" fill="#ff0000"/><rect x="374.5" y="415.9" width="1.1" height="13.5" fill="#0a84ff"/><rect x="376.5" y="423.6" width="1.1" height="5.8" fill="#ffff66"/><rect x="377.5" y="423.6" width="1.1" height="2.0" fill="#ffff66"/><rect x="378.5" y="423.6" width="1.1" height="2.0" fill="#ffff66"/><rect x="379.5" y="423.6" width="1.1" height="5.8" fill="#0a84ff"/><rect x="380.5" y="427.5" width="1.1" height="2.0" fill="#ffff66"/><rect x="381.5" y="427.5" width="1.1" height="5.8" fill="#ffff66"/><rect x="382.5" y="427.5" width="1.1" height="2.0" fill="#ffff66"/><rect x="383.5" y="427.5" width="1.1" height="2.0" fill="#ffff66"/><rect x="384.5" y="419.8" width="1.1" height="13.5" fill="#ff0000"/><rect x="385.5" y="423.6" width="1.1" height="2.0" fill="#ffff66"/><rect x="386.5" y="408.3" width="1.1" height="17.4" fill="#ff0000"/><rect x="387.5" y="412.1" width="1.1" height="2.0" fill="#ffff66"/><rect x="388.5" y="408.3" width="1.1" height="9.7" fill="#ff0000"/><rect x="389.5" y="404.4" width="1.1" height="13.5" fill="#0a84ff"/><rect x="390.5" y="415.9" width="1.1" height="2.0" fill="#ffff66"/><rect x="391.5" y="415.9" width="1.1" height="13.5" fill="#0a84ff"/><rect x="392.5" y="419.8" width="1.1" height="9.7" fill="#ff0000"/><rect x="393.5" y="415.9" width="1.1" height="5.8" fill="#ff0000"/><rect x="395.5" y="412.1" width="1.1" height="5.8" fill="#ff0000"/><rect x="397.5" y="408.3" width="1.1" height="5.8" fill="#ffff66"/><rect x="398.5" y="408.3" width="1.1" height="17.4" fill="#0a84ff"/><rect x="399.5" y="419.8" width="1.1" height="2.0" fill="#ffff66"/><rect x="400.5" y="419.8" width="1.1" height="2.0" fill="#ffff66"/><rect x="401.5" y="415.9" width="1.1" height="9.7" fill="#ff0000"/><rect x="402.5" y="415.9" width="1.1" height="2.0" fill="#ffff66"/><rect x="403.5" y="415.9" width="1.1" height="2.0" fill="#ffff66"/><rect x="407.5" y="408.3" width="1.1" height="13.5" fill="#ff0000"/><rect x="408.5" y="412.1" width="1.1" height="2.0" fill="#ffff66"/><rect x="410.5" y="408.3" width="1.1" height="9.7" fill="#0a84ff"/><rect x="411.5" y="415.9" width="1.1" height="2.0" fill="#ffff66"/><rect x="413.5" y="415.9" width="1.1" height="9.7" fill="#0a84ff"/><rect x="414.5" y="423.6" width="1.1" height="2.0" fill="#ffff66"/><rect x="415.5" y="423.6" width="1.1" height="2.0" fill="#ffff66"/><rect x="418.5" y="423.6" width="1.1" height="2.0" fill="#ffff66"/><rect x="419.5" y="423.6" width="1.1" height="2.0" fill="#ffff66"/><rect x="420.5" y="423.6" width="1.1" height="9.7" fill="#0a84ff"/><rect x="421.5" y="427.5" width="1.1" height="2.0" fill="#ffff66"/><rect x="422.5" y="423.6" width="1.1" height="5.8" fill="#ff0000"/><rect x="423.5" y="423.6" width="1.1" height="5.8" fill="#0a84ff"/><rect x="424.5" y="427.5" width="1.1" height="9.7" fill="#0a84ff"/><rect x="425.5" y="435.1" width="1.1" height="2.0" fill="#ffff66"/><rect x="426.5" y="435.1" width="1.1" height="2.0" fill="#ffff66"/><rect x="427.5" y="435.1" width="1.1" height="2.0" fill="#ffff66"/><rect x="428.5" y="427.5" width="1.1" height="9.7" fill="#ff0000"/><rect x="429.5" y="423.6" width="1.1" height="9.7" fill="#ff0000"/><rect x="431.5" y="419.8" width="1.1" height="9.7" fill="#ff0000"/><rect x="433.5" y="415.9" width="1.1" height="9.7" fill="#0a84ff"/><rect x="434.5" y="423.6" width="1.1" height="2.0" fill="#ffff66"/><rect x="436.5" y="415.9" width="1.1" height="13.5" fill="#ff0000"/><rect x="437.5" y="415.9" width="1.1" height="9.7" fill="#0a84ff"/><rect x="438.5" y="423.6" width="1.1" height="5.8" fill="#ffff66"/><rect x="439.5" y="423.6" width="1.1" height="2.0" fill="#ffff66"/><rect x="440.5" y="423.6" width="1.1" height="9.7" fill="#0a84ff"/><rect x="441.5" y="427.5" width="1.1" height="2.0" fill="#ffff66"/><rect x="442.5" y="427.5" width="1.1" height="2.0" fill="#ffff66"/><rect x="443.5" y="423.6" width="1.1" height="9.7" fill="#0a84ff"/><rect x="444.5" y="431.3" width="1.1" height="2.0" fill="#ffff66"/><rect x="445.5" y="423.6" width="1.1" height="9.7" fill="#ff0000"/><rect x="446.5" y="423.6" width="1.1" height="5.8" fill="#ff0000"/><rect x="448.5" y="419.8" width="1.1" height="9.7" fill="#ff0000"/><rect x="449.5" y="419.8" width="1.1" height="2.0" fill="#ffff66"/><rect x="450.5" y="419.8" width="1.1" height="5.8" fill="#0a84ff"/><rect x="452.5" y="423.6" width="1.1" height="2.0" fill="#ffff66"/><rect x="453.5" y="415.9" width="1.1" height="13.5" fill="#ff0000"/><rect x="454.5" y="419.8" width="1.1" height="2.0" fill="#ffff66"/><rect x="456.5" y="415.9" width="1.1" height="9.7" fill="#ff0000"/><rect x="457.5" y="415.9" width="1.1" height="2.0" fill="#ffff66"/><rect x="458.5" y="408.3" width="1.1" height="13.5" fill="#ff0000"/><rect x="459.5" y="404.4" width="1.1" height="9.7" fill="#ff0000"/><rect x="462.5" y="389.1" width="1.1" height="17.4" fill="#ff0000"/><rect x="463.5" y="389.1" width="1.1" height="13.5" fill="#0a84ff"/><rect x="465.5" y="400.6" width="1.1" height="5.8" fill="#0a84ff"/><rect x="466.5" y="404.4" width="1.1" height="13.5" fill="#0a84ff"/><rect x="467.5" y="412.1" width="1.1" height="2.0" fill="#ffff66"/><rect x="469.5" y="412.1" width="1.1" height="2.0" fill="#ffff66"/><rect x="470.5" y="396.7" width="1.1" height="17.4" fill="#ff0000"/><rect x="471.5" y="396.7" width="1.1" height="13.5" fill="#0a84ff"/><rect x="472.5" y="408.3" width="1.1" height="2.0" fill="#ffff66"/><rect x="473.5" y="404.4" width="1.1" height="9.7" fill="#0a84ff"/><rect x="474.5" y="412.1" width="1.1" height="2.0" fill="#ffff66"/><rect x="475.5" y="400.6" width="1.1" height="17.4" fill="#ff0000"/><rect x="477.5" y="408.3" width="1.1" height="21.2" fill="#0a84ff"/><rect x="478.5" y="423.6" width="1.1" height="2.0" fill="#ffff66"/><rect x="479.5" y="419.8" width="1.1" height="9.7" fill="#ff0000"/><rect x="480.5" y="412.1" width="1.1" height="13.5" fill="#ff0000"/><rect x="481.5" y="412.1" width="1.1" height="5.8" fill="#ffff66"/><rect x="482.5" y="415.9" width="1.1" height="2.0" fill="#ffff66"/><rect x="483.5" y="415.9" width="1.1" height="5.8" fill="#0a84ff"/><rect x="484.5" y="419.8" width="1.1" height="9.7" fill="#0a84ff"/><rect x="485.5" y="423.6" width="1.1" height="2.0" fill="#ffff66"/><rect x="487.5" y="423.6" width="1.1" height="5.8" fill="#0a84ff"/><rect x="488.5" y="427.5" width="1.1" height="5.8" fill="#ffff66"/><rect x="489.5" y="423.6" width="1.1" height="5.8" fill="#ff0000"/><rect x="491.5" y="412.1" width="1.1" height="13.5" fill="#ff0000"/><rect x="493.5" y="415.9" width="1.1" height="9.7" fill="#0a84ff"/><rect x="494.5" y="419.8" width="1.1" height="2.0" fill="#ffff66"/><rect x="496.5" y="412.1" width="1.1" height="9.7" fill="#ff0000"/><rect x="497.5" y="415.9" width="1.1" height="2.0" fill="#ffff66"/><rect x="499.5" y="415.9" width="1.1" height="9.7" fill="#0a84ff"/><rect x="500.5" y="423.6" width="1.1" height="2.0" fill="#ffff66"/><rect x="501.5" y="423.6" width="1.1" height="2.0" fill="#ffff66"/><rect x="502.5" y="423.6" width="1.1" height="9.7" fill="#0a84ff"/><rect x="503.5" y="423.6" width="1.1" height="13.5" fill="#0a84ff"/><rect x="504.5" y="431.3" width="1.1" height="2.0" fill="#ffff66"/><rect x="507.5" y="431.3" width="1.1" height="2.0" fill="#ffff66"/><rect x="508.5" y="431.3" width="1.1" height="5.8" fill="#0a84ff"/><rect x="509.5" y="427.5" width="1.1" height="13.5" fill="#ff0000"/><rect x="510.5" y="419.8" width="1.1" height="13.5" fill="#ff0000"/><rect x="511.5" y="423.6" width="1.1" height="2.0" fill="#ffff66"/><rect x="512.5" y="419.8" width="1.1" height="9.7" fill="#0a84ff"/><rect x="514.5" y="419.8" width="1.1" height="9.7" fill="#ff0000"/><rect x="515.5" y="423.6" width="1.1" height="2.0" fill="#ffff66"/><rect x="516.5" y="419.8" width="1.1" height="5.8" fill="#ffff66"/><rect x="518.5" y="415.9" width="1.1" height="9.7" fill="#ff0000"/><rect x="519.5" y="408.3" width="1.1" height="13.5" fill="#ff0000"/><rect x="520.5" y="408.3" width="1.1" height="9.7" fill="#0a84ff"/><rect x="521.5" y="408.3" width="1.1" height="5.8" fill="#ffff66"/><rect x="523.5" y="408.3" width="1.1" height="9.7" fill="#0a84ff"/><rect x="524.5" y="415.9" width="1.1" height="5.8" fill="#0a84ff"/><rect x="525.5" y="412.1" width="1.1" height="9.7" fill="#ff0000"/><rect x="526.5" y="415.9" width="1.1" height="2.0" fill="#ffff66"/><rect x="528.5" y="408.3" width="1.1" height="13.5" fill="#ff0000"/><rect x="529.5" y="408.3" width="1.1" height="13.5" fill="#0a84ff"/><rect x="530.5" y="412.1" width="1.1" height="5.8" fill="#ffff66"/><rect x="531.5" y="415.9" width="1.1" height="2.0" fill="#ffff66"/><rect x="532.5" y="412.1" width="1.1" height="9.7" fill="#ff0000"/><rect x="533.5" y="412.1" width="1.1" height="2.0" fill="#ffff66"/><rect x="534.5" y="404.4" width="1.1" height="13.5" fill="#ff0000"/><rect x="535.5" y="396.7" width="1.1" height="9.7" fill="#ff0000"/><rect x="536.5" y="389.1" width="1.1" height="9.7" fill="#ff0000"/><rect x="537.5" y="381.4" width="1.1" height="17.4" fill="#ff0000"/><rect x="538.5" y="377.5" width="1.1" height="13.5" fill="#ff0000"/><rect x="539.5" y="373.7" width="1.1" height="9.7" fill="#ff0000"/><rect x="540.5" y="377.5" width="1.1" height="2.0" fill="#ffff66"/><rect x="541.5" y="366.0" width="1.1" height="13.5" fill="#ff0000"/><rect x="542.5" y="362.2" width="1.1" height="9.7" fill="#ff0000"/><rect x="543.5" y="362.2" width="1.1" height="5.8" fill="#ffff66"/><rect x="544.5" y="358.3" width="1.1" height="9.7" fill="#ff0000"/><rect x="545.5" y="343.0" width="1.1" height="17.4" fill="#ff0000"/><rect x="546.5" y="339.1" width="1.1" height="9.7" fill="#ff0000"/><rect x="547.5" y="331.5" width="1.1" height="9.7" fill="#ff0000"/><rect x="548.5" y="331.5" width="1.1" height="9.7" fill="#0a84ff"/><rect x="549.5" y="339.1" width="1.1" height="5.8" fill="#0a84ff"/><rect x="550.5" y="343.0" width="1.1" height="5.8" fill="#0a84ff"/><rect x="551.5" y="346.8" width="1.1" height="5.8" fill="#0a84ff"/><rect x="552.5" y="346.8" width="1.1" height="13.5" fill="#0a84ff"/><rect x="553.5" y="358.3" width="1.1" height="9.7" fill="#0a84ff"/><rect x="554.5" y="362.2" width="1.1" height="2.0" fill="#ffff66"/><rect x="555.5" y="354.5" width="1.1" height="13.5" fill="#ff0000"/><rect x="556.5" y="350.7" width="1.1" height="9.7" fill="#ff0000"/><rect x="557.5" y="350.7" width="1.1" height="2.0" fill="#ffff66"/><rect x="558.5" y="350.7" width="1.1" height="2.0" fill="#ffff66"/><rect x="561.5" y="362.2" width="1.1" height="2.0" fill="#ffff66"/><rect x="563.5" y="362.2" width="1.1" height="2.0" fill="#ffff66"/><rect x="566.5" y="362.2" width="1.1" height="5.8" fill="#0a84ff"/><rect x="570.5" y="369.9" width="1.1" height="2.0" fill="#ffff66"/><rect x="574.5" y="366.0" width="1.1" height="2.0" fill="#ffff66"/><rect x="582.5" y="354.5" width="1.1" height="2.0" fill="#ffff66"/><rect x="583.5" y="354.5" width="1.1" height="2.0" fill="#ffff66"/><rect x="584.5" y="354.5" width="1.1" height="2.0" fill="#ffff66"/><rect x="585.5" y="354.5" width="1.1" height="2.0" fill="#ffff66"/><rect x="588.5" y="354.5" width="1.1" height="2.0" fill="#ffff66"/><rect x="589.5" y="354.5" width="1.1" height="2.0" fill="#ffff66"/><rect x="590.5" y="354.5" width="1.1" height="2.0" fill="#ffff66"/><rect x="593.5" y="358.3" width="1.1" height="9.7" fill="#0a84ff"/><rect x="594.5" y="369.9" width="1.1" height="2.0" fill="#ffff66"/><rect x="596.5" y="354.5" width="1.1" height="9.7" fill="#ff0000"/><rect x="597.5" y="354.5" width="1.1" height="2.0" fill="#ffff66"/><rect x="600.5" y="354.5" width="1.1" height="2.0" fill="#ffff66"/><rect x="602.5" y="350.7" width="1.1" height="2.0" fill="#ffff66"/><rect x="603.5" y="354.5" width="1.1" height="2.0" fill="#ffff66"/><rect x="604.5" y="354.5" width="1.1" height="2.0" fill="#ffff66"/><rect x="605.5" y="358.3" width="1.1" height="2.0" fill="#ffff66"/><rect x="606.5" y="358.3" width="1.1" height="2.0" fill="#ffff66"/><rect x="607.5" y="358.3" width="1.1" height="2.0" fill="#ffff66"/><rect x="608.5" y="362.2" width="1.1" height="2.0" fill="#ffff66"/><rect x="610.5" y="362.2" width="1.1" height="2.0" fill="#ffff66"/><rect x="612.5" y="354.5" width="1.1" height="2.0" fill="#ffff66"/><rect x="613.5" y="350.7" width="1.1" height="2.0" fill="#ffff66"/><rect x="615.5" y="346.8" width="1.1" height="2.0" fill="#ffff66"/><rect x="616.5" y="339.1" width="1.1" height="9.7" fill="#ff0000"/><rect x="617.5" y="339.1" width="1.1" height="2.0" fill="#ffff66"/><rect x="619.5" y="339.1" width="1.1" height="2.0" fill="#ffff66"/><rect x="620.5" y="346.8" width="1.1" height="2.0" fill="#ffff66"/><rect x="621.5" y="346.8" width="1.1" height="2.0" fill="#ffff66"/><rect x="622.5" y="346.8" width="1.1" height="2.0" fill="#ffff66"/><rect x="626.5" y="339.1" width="1.1" height="13.5" fill="#ff0000"/><rect x="628.5" y="343.0" width="1.1" height="2.0" fill="#ffff66"/><rect x="630.5" y="346.8" width="1.1" height="2.0" fill="#ffff66"/><rect x="631.5" y="346.8" width="1.1" height="2.0" fill="#ffff66"/><rect x="633.5" y="346.8" width="1.1" height="2.0" fill="#ffff66"/><rect x="635.5" y="346.8" width="1.1" height="2.0" fill="#ffff66"/><rect x="636.5" y="346.8" width="1.1" height="2.0" fill="#ffff66"/><rect x="642.5" y="339.1" width="1.1" height="2.0" fill="#ffff66"/><rect x="643.5" y="331.5" width="1.1" height="2.0" fill="#ffff66"/><rect x="647.5" y="335.3" width="1.1" height="2.0" fill="#ffff66"/><rect x="648.5" y="331.5" width="1.1" height="9.7" fill="#ff0000"/><rect x="649.5" y="331.5" width="1.1" height="2.0" fill="#ffff66"/><rect x="650.5" y="331.5" width="1.1" height="2.0" fill="#ffff66"/><rect x="655.5" y="319.9" width="1.1" height="2.0" fill="#ffff66"/><rect x="658.5" y="319.9" width="1.1" height="9.7" fill="#0a84ff"/><rect x="659.5" y="331.5" width="1.1" height="2.0" fill="#ffff66"/><rect x="660.5" y="331.5" width="1.1" height="2.0" fill="#ffff66"/><rect x="664.5" y="335.3" width="1.1" height="2.0" fill="#ffff66"/><rect x="665.5" y="335.3" width="1.1" height="5.8" fill="#0a84ff"/><rect x="666.5" y="339.1" width="1.1" height="9.7" fill="#0a84ff"/><rect x="667.5" y="343.0" width="1.1" height="2.0" fill="#ffff66"/><rect x="669.5" y="335.3" width="1.1" height="2.0" fill="#ffff66"/><rect x="670.5" y="335.3" width="1.1" height="5.8" fill="#0a84ff"/><rect x="671.5" y="339.1" width="1.1" height="2.0" fill="#ffff66"/><rect x="672.5" y="339.1" width="1.1" height="2.0" fill="#ffff66"/><rect x="673.5" y="339.1" width="1.1" height="2.0" fill="#ffff66"/><rect x="674.5" y="339.1" width="1.1" height="2.0" fill="#ffff66"/><rect x="676.5" y="327.6" width="1.1" height="2.0" fill="#ffff66"/><rect x="677.5" y="316.1" width="1.1" height="2.0" fill="#ffff66"/><rect x="678.5" y="316.1" width="1.1" height="2.0" fill="#ffff66"/><rect x="679.5" y="316.1" width="1.1" height="9.7" fill="#0a84ff"/><rect x="680.5" y="319.9" width="1.1" height="2.0" fill="#ffff66"/><rect x="681.5" y="319.9" width="1.1" height="2.0" fill="#ffff66"/><rect x="682.5" y="319.9" width="1.1" height="2.0" fill="#ffff66"/><rect x="683.5" y="316.1" width="1.1" height="2.0" fill="#ffff66"/><rect x="685.5" y="323.8" width="1.1" height="2.0" fill="#ffff66"/><rect x="688.5" y="327.6" width="1.1" height="13.5" fill="#0a84ff"/><rect x="690.5" y="343.0" width="1.1" height="2.0" fill="#ffff66"/><rect x="691.5" y="339.1" width="1.1" height="2.0" fill="#ffff66"/><rect x="692.5" y="331.5" width="1.1" height="2.0" fill="#ffff66"/><rect x="694.5" y="331.5" width="1.1" height="2.0" fill="#ffff66"/><rect x="695.5" y="331.5" width="1.1" height="2.0" fill="#ffff66"/><rect x="696.5" y="339.1" width="1.1" height="2.0" fill="#ffff66"/><rect x="697.5" y="339.1" width="1.1" height="2.0" fill="#ffff66"/><rect x="698.5" y="346.8" width="1.1" height="2.0" fill="#ffff66"/><rect x="699.5" y="346.8" width="1.1" height="2.0" fill="#ffff66"/><rect x="701.5" y="354.5" width="1.1" height="2.0" fill="#ffff66"/><rect x="702.5" y="362.2" width="1.1" height="2.0" fill="#ffff66"/><rect x="703.5" y="362.2" width="1.1" height="9.7" fill="#0a84ff"/><rect x="704.5" y="369.9" width="1.1" height="2.0" fill="#ffff66"/><rect x="706.5" y="369.9" width="1.1" height="2.0" fill="#ffff66"/><rect x="709.5" y="362.2" width="1.1" height="2.0" fill="#ffff66"/><rect x="713.5" y="358.3" width="1.1" height="5.8" fill="#ff0000"/><rect x="716.5" y="358.3" width="1.1" height="9.7" fill="#0a84ff"/><rect x="717.5" y="369.9" width="1.1" height="9.7" fill="#0a84ff"/><rect x="718.5" y="377.5" width="1.1" height="2.0" fill="#ffff66"/><rect x="721.5" y="377.5" width="1.1" height="2.0" fill="#ffff66"/><rect x="723.5" y="373.7" width="1.1" height="2.0" fill="#ffff66"/><rect x="724.5" y="369.9" width="1.1" height="5.8" fill="#ff0000"/><rect x="725.5" y="369.9" width="1.1" height="2.0" fill="#ffff66"/><rect x="726.5" y="369.9" width="1.1" height="2.0" fill="#ffff66"/><rect x="727.5" y="369.9" width="1.1" height="2.0" fill="#ffff66"/><rect x="729.5" y="369.9" width="1.1" height="2.0" fill="#ffff66"/><rect x="730.5" y="369.9" width="1.1" height="2.0" fill="#ffff66"/><rect x="732.5" y="373.7" width="1.1" height="2.0" fill="#ffff66"/><rect x="733.5" y="373.7" width="1.1" height="2.0" fill="#ffff66"/><rect x="735.5" y="373.7" width="1.1" height="2.0" fill="#ffff66"/><rect x="736.5" y="373.7" width="1.1" height="2.0" fill="#ffff66"/><rect x="737.5" y="373.7" width="1.1" height="2.0" fill="#ffff66"/><rect x="738.5" y="366.0" width="1.1" height="2.0" fill="#ffff66"/><rect x="739.5" y="366.0" width="1.1" height="2.0" fill="#ffff66"/><rect x="740.5" y="366.0" width="1.1" height="2.0" fill="#ffff66"/><rect x="741.5" y="366.0" width="1.1" height="2.0" fill="#ffff66"/><rect x="742.5" y="366.0" width="1.1" height="2.0" fill="#ffff66"/><rect x="743.5" y="366.0" width="1.1" height="2.0" fill="#ffff66"/><rect x="744.5" y="366.0" width="1.1" height="2.0" fill="#ffff66"/><rect x="745.5" y="362.2" width="1.1" height="2.0" fill="#ffff66"/><rect x="746.5" y="362.2" width="1.1" height="2.0" fill="#ffff66"/><rect x="747.5" y="362.2" width="1.1" height="2.0" fill="#ffff66"/><rect x="748.5" y="358.3" width="1.1" height="9.7" fill="#ff0000"/><rect x="749.5" y="354.5" width="1.1" height="2.0" fill="#ffff66"/><rect x="750.5" y="354.5" width="1.1" height="2.0" fill="#ffff66"/><rect x="751.5" y="350.7" width="1.1" height="5.8" fill="#ff0000"/><rect x="752.5" y="346.8" width="1.1" height="5.8" fill="#ff0000"/><rect x="753.5" y="346.8" width="1.1" height="2.0" fill="#ffff66"/><rect x="754.5" y="354.5" width="1.1" height="2.0" fill="#ffff66"/><rect x="756.5" y="354.5" width="1.1" height="2.0" fill="#ffff66"/><rect x="758.5" y="358.3" width="1.1" height="2.0" fill="#ffff66"/><rect x="760.5" y="358.3" width="1.1" height="2.0" fill="#ffff66"/><rect x="763.5" y="362.2" width="1.1" height="2.0" fill="#ffff66"/><rect x="764.5" y="362.2" width="1.1" height="9.7" fill="#0a84ff"/><rect x="766.5" y="339.1" width="1.1" height="21.2" fill="#ff0000"/><rect x="767.5" y="339.1" width="1.1" height="9.7" fill="#ffff66"/><rect x="768.5" y="335.3" width="1.1" height="5.8" fill="#0a84ff"/><rect x="771.5" y="339.1" width="1.1" height="2.0" fill="#ffff66"/><rect x="773.5" y="339.1" width="1.1" height="13.5" fill="#ff0000"/><rect x="774.5" y="327.6" width="1.1" height="13.5" fill="#ff0000"/><rect x="775.5" y="323.8" width="1.1" height="9.7" fill="#ff0000"/><rect x="776.5" y="323.8" width="1.1" height="13.5" fill="#0a84ff"/><rect x="777.5" y="335.3" width="1.1" height="25.0" fill="#0a84ff"/><rect x="778.5" y="358.3" width="1.1" height="13.5" fill="#0a84ff"/><rect x="779.5" y="369.9" width="1.1" height="5.8" fill="#ffff66"/><rect x="780.5" y="369.9" width="1.1" height="9.7" fill="#0a84ff"/><rect x="781.5" y="373.7" width="1.1" height="13.5" fill="#0a84ff"/><rect x="782.5" y="381.4" width="1.1" height="9.7" fill="#0a84ff"/><rect x="785.5" y="369.9" width="1.1" height="13.5" fill="#ff0000"/><rect x="786.5" y="373.7" width="1.1" height="17.4" fill="#0a84ff"/><rect x="787.5" y="385.2" width="1.1" height="9.7" fill="#ffff66"/><rect x="788.5" y="381.4" width="1.1" height="9.7" fill="#0a84ff"/><rect x="789.5" y="381.4" width="1.1" height="17.4" fill="#0a84ff"/><rect x="790.5" y="396.7" width="1.1" height="5.8" fill="#ffff66"/><rect x="791.5" y="373.7" width="1.1" height="25.0" fill="#ff0000"/><rect x="792.5" y="381.4" width="1.1" height="5.8" fill="#ff0000"/><rect x="793.5" y="381.4" width="1.1" height="13.5" fill="#ff0000"/><rect x="796.5" y="381.4" width="1.1" height="21.2" fill="#0a84ff"/><rect x="797.5" y="389.1" width="1.1" height="2.0" fill="#ffff66"/><rect x="798.5" y="389.1" width="1.1" height="2.0" fill="#ffff66"/><rect x="799.5" y="385.2" width="1.1" height="9.7" fill="#0a84ff"/><rect x="800.5" y="389.1" width="1.1" height="5.8" fill="#0a84ff"/><rect x="801.5" y="389.1" width="1.1" height="5.8" fill="#ffff66"/><rect x="802.5" y="392.9" width="1.1" height="13.5" fill="#0a84ff"/><rect x="803.5" y="396.7" width="1.1" height="17.4" fill="#0a84ff"/><rect x="805.5" y="396.7" width="1.1" height="9.7" fill="#ffff66"/><rect x="806.5" y="389.1" width="1.1" height="17.4" fill="#ff0000"/><rect x="807.5" y="389.1" width="1.1" height="5.8" fill="#ffff66"/><rect x="808.5" y="396.7" width="1.1" height="21.2" fill="#0a84ff"/><rect x="809.5" y="408.3" width="1.1" height="17.4" fill="#0a84ff"/><rect x="810.5" y="415.9" width="1.1" height="5.8" fill="#0a84ff"/><rect x="811.5" y="419.8" width="1.1" height="13.5" fill="#0a84ff"/><rect x="812.5" y="423.6" width="1.1" height="5.8" fill="#0a84ff"/><rect x="813.5" y="419.8" width="1.1" height="13.5" fill="#ff0000"/><rect x="814.5" y="408.3" width="1.1" height="13.5" fill="#ff0000"/><rect x="815.5" y="400.6" width="1.1" height="17.4" fill="#ff0000"/><rect x="816.5" y="408.3" width="1.1" height="2.0" fill="#ffff66"/><rect x="817.5" y="400.6" width="1.1" height="9.7" fill="#0a84ff"/><rect x="818.5" y="408.3" width="1.1" height="5.8" fill="#0a84ff"/><rect x="819.5" y="412.1" width="1.1" height="13.5" fill="#0a84ff"/><rect x="820.5" y="412.1" width="1.1" height="9.7" fill="#ff0000"/><rect x="821.5" y="412.1" width="1.1" height="2.0" fill="#ffff66"/><rect x="822.5" y="412.1" width="1.1" height="5.8" fill="#0a84ff"/><rect x="823.5" y="404.4" width="1.1" height="9.7" fill="#ff0000"/><rect x="824.5" y="408.3" width="1.1" height="9.7" fill="#ffff66"/><rect x="825.5" y="404.4" width="1.1" height="17.4" fill="#ff0000"/><rect x="826.5" y="404.4" width="1.1" height="9.7" fill="#0a84ff"/><rect x="827.5" y="404.4" width="1.1" height="5.8" fill="#0a84ff"/><rect x="828.5" y="400.6" width="1.1" height="17.4" fill="#0a84ff"/><rect x="829.5" y="408.3" width="1.1" height="17.4" fill="#0a84ff"/><rect x="830.5" y="423.6" width="1.1" height="5.8" fill="#0a84ff"/><rect x="831.5" y="415.9" width="1.1" height="17.4" fill="#0a84ff"/><rect x="833.5" y="427.5" width="1.1" height="5.8" fill="#0a84ff"/><rect x="834.5" y="431.3" width="1.1" height="2.0" fill="#ffff66"/><rect x="836.5" y="431.3" width="1.1" height="13.5" fill="#0a84ff"/><rect x="837.5" y="439.0" width="1.1" height="13.5" fill="#0a84ff"/><rect x="838.5" y="446.7" width="1.1" height="17.4" fill="#0a84ff"/><rect x="839.5" y="450.5" width="1.1" height="9.7" fill="#0a84ff"/><rect x="840.5" y="458.2" width="1.1" height="9.7" fill="#0a84ff"/><rect x="841.5" y="458.2" width="1.1" height="17.4" fill="#0a84ff"/><rect x="842.5" y="469.7" width="1.1" height="5.8" fill="#0a84ff"/><rect x="844.5" y="473.5" width="1.1" height="2.0" fill="#ffff66"/><rect x="845.5" y="473.5" width="1.1" height="21.2" fill="#0a84ff"/><rect x="846.5" y="481.2" width="1.1" height="13.5" fill="#0a84ff"/><rect x="847.5" y="488.9" width="1.1" height="9.7" fill="#0a84ff"/><rect x="848.5" y="485.1" width="1.1" height="13.5" fill="#ff0000"/><rect x="849.5" y="481.2" width="1.1" height="5.8" fill="#0a84ff"/><rect x="850.5" y="477.4" width="1.1" height="9.7" fill="#ff0000"/><rect x="851.5" y="462.0" width="1.1" height="17.4" fill="#ff0000"/><rect x="852.5" y="462.0" width="1.1" height="17.4" fill="#ff0000"/><rect x="853.5" y="450.5" width="1.1" height="13.5" fill="#ff0000"/><rect x="854.5" y="450.5" width="1.1" height="9.7" fill="#ff0000"/><rect x="855.5" y="442.8" width="1.1" height="13.5" fill="#ff0000"/><rect x="856.5" y="442.8" width="1.1" height="5.8" fill="#ff0000"/><rect x="857.5" y="442.8" width="1.1" height="5.8" fill="#0a84ff"/><rect x="858.5" y="442.8" width="1.1" height="2.0" fill="#ffff66"/><rect x="859.5" y="442.8" width="1.1" height="9.7" fill="#0a84ff"/><rect x="860.5" y="450.5" width="1.1" height="9.7" fill="#0a84ff"/><rect x="861.5" y="450.5" width="1.1" height="17.4" fill="#ff0000"/><rect x="862.5" y="450.5" width="1.1" height="2.0" fill="#ffff66"/><rect x="863.5" y="435.1" width="1.1" height="17.4" fill="#ff0000"/><rect x="864.5" y="446.7" width="1.1" height="17.4" fill="#0a84ff"/><rect x="865.5" y="450.5" width="1.1" height="13.5" fill="#0a84ff"/><rect x="866.5" y="450.5" width="1.1" height="9.7" fill="#0a84ff"/><rect x="867.5" y="458.2" width="1.1" height="2.0" fill="#ffff66"/><rect x="868.5" y="458.2" width="1.1" height="9.7" fill="#0a84ff"/><rect x="869.5" y="450.5" width="1.1" height="17.4" fill="#ff0000"/><rect x="870.5" y="442.8" width="1.1" height="17.4" fill="#0a84ff"/><rect x="871.5" y="458.2" width="1.1" height="9.7" fill="#0a84ff"/><rect x="872.5" y="462.0" width="1.1" height="13.5" fill="#0a84ff"/><rect x="873.5" y="465.9" width="1.1" height="9.7" fill="#0a84ff"/><rect x="874.5" y="469.7" width="1.1" height="2.0" fill="#ffff66"/><rect x="875.5" y="469.7" width="1.1" height="13.5" fill="#0a84ff"/><rect x="876.5" y="473.5" width="1.1" height="2.0" fill="#ffff66"/><rect x="877.5" y="469.7" width="1.1" height="9.7" fill="#0a84ff"/><rect x="878.5" y="477.4" width="1.1" height="5.8" fill="#0a84ff"/><rect x="879.5" y="477.4" width="1.1" height="9.7" fill="#ff0000"/><rect x="880.5" y="465.9" width="1.1" height="13.5" fill="#ff0000"/><rect x="881.5" y="477.4" width="1.1" height="2.0" fill="#ffff66"/><rect x="882.5" y="477.4" width="1.1" height="5.8" fill="#0a84ff"/><rect x="883.5" y="469.7" width="1.1" height="17.4" fill="#0a84ff"/><rect x="884.5" y="481.2" width="1.1" height="9.7" fill="#ff0000"/><rect x="885.5" y="473.5" width="1.1" height="9.7" fill="#ff0000"/><rect x="886.5" y="477.4" width="1.1" height="2.0" fill="#ffff66"/><rect x="887.5" y="477.4" width="1.1" height="2.0" fill="#ffff66"/><rect x="888.5" y="477.4" width="1.1" height="13.5" fill="#0a84ff"/><rect x="889.5" y="485.1" width="1.1" height="13.5" fill="#0a84ff"/><rect x="890.5" y="473.5" width="1.1" height="13.5" fill="#ffff66"/><rect x="891.5" y="481.2" width="1.1" height="13.5" fill="#ff0000"/><rect x="892.5" y="481.2" width="1.1" height="2.0" fill="#ffff66"/><rect x="893.5" y="481.2" width="1.1" height="2.0" fill="#ffff66"/><rect x="894.5" y="481.2" width="1.1" height="5.8" fill="#ffff66"/><rect x="895.5" y="473.5" width="1.1" height="9.7" fill="#0a84ff"/><rect x="896.5" y="481.2" width="1.1" height="9.7" fill="#0a84ff"/><rect x="897.5" y="477.4" width="1.1" height="5.8" fill="#0a84ff"/><rect x="898.5" y="473.5" width="1.1" height="13.5" fill="#0a84ff"/><rect x="899.5" y="473.5" width="1.1" height="13.5" fill="#ffff66"/><rect x="900.5" y="481.2" width="1.1" height="5.8" fill="#ffff66"/><rect x="901.5" y="485.1" width="1.1" height="2.0" fill="#ffff66"/><rect x="902.5" y="477.4" width="1.1" height="9.7" fill="#ff0000"/><rect x="903.5" y="469.7" width="1.1" height="9.7" fill="#ff0000"/><rect x="904.5" y="469.7" width="1.1" height="2.0" fill="#ffff66"/><rect x="905.5" y="469.7" width="1.1" height="5.8" fill="#ffff66"/><rect x="906.5" y="465.9" width="1.1" height="9.7" fill="#ff0000"/><rect x="907.5" y="462.0" width="1.1" height="13.5" fill="#0a84ff"/><rect x="908.5" y="469.7" width="1.1" height="2.0" fill="#ffff66"/><rect x="909.5" y="469.7" width="1.1" height="2.0" fill="#ffff66"/><rect x="910.5" y="469.7" width="1.1" height="5.8" fill="#0a84ff"/><rect x="911.5" y="473.5" width="1.1" height="2.0" fill="#ffff66"/><rect x="913.5" y="473.5" width="1.1" height="2.0" fill="#ffff66"/><rect x="914.5" y="473.5" width="1.1" height="2.0" fill="#ffff66"/><rect x="915.5" y="469.7" width="1.1" height="9.7" fill="#ff0000"/><rect x="916.5" y="469.7" width="1.1" height="2.0" fill="#ffff66"/><rect x="917.5" y="469.7" width="1.1" height="5.8" fill="#ffff66"/><rect x="918.5" y="469.7" width="1.1" height="2.0" fill="#ffff66"/><rect x="919.5" y="469.7" width="1.1" height="2.0" fill="#ffff66"/><rect x="920.5" y="469.7" width="1.1" height="2.0" fill="#ffff66"/><rect x="921.5" y="469.7" width="1.1" height="2.0" fill="#ffff66"/><rect x="922.5" y="465.9" width="1.1" height="9.7" fill="#ff0000"/><rect x="923.5" y="458.2" width="1.1" height="9.7" fill="#ff0000"/><rect x="925.5" y="454.3" width="1.1" height="13.5" fill="#ff0000"/><rect x="926.5" y="450.5" width="1.1" height="5.8" fill="#ff0000"/><rect x="927.5" y="450.5" width="1.1" height="2.0" fill="#ffff66"/><rect x="928.5" y="446.7" width="1.1" height="5.8" fill="#ff0000"/><rect x="929.5" y="446.7" width="1.1" height="2.0" fill="#ffff66"/><rect x="930.5" y="439.0" width="1.1" height="13.5" fill="#ff0000"/><rect x="931.5" y="439.0" width="1.1" height="2.0" fill="#ffff66"/><rect x="933.5" y="435.1" width="1.1" height="5.8" fill="#ff0000"/><rect x="934.5" y="427.5" width="1.1" height="9.7" fill="#ff0000"/><rect x="935.5" y="431.3" width="1.1" height="2.0" fill="#ffff66"/><rect x="936.5" y="427.5" width="1.1" height="5.8" fill="#ffff66"/><rect x="937.5" y="431.3" width="1.1" height="9.7" fill="#0a84ff"/><rect x="938.5" y="427.5" width="1.1" height="13.5" fill="#ff0000"/><rect x="939.5" y="423.6" width="1.1" height="9.7" fill="#ff0000"/><rect x="940.5" y="423.6" width="1.1" height="2.0" fill="#ffff66"/><rect x="941.5" y="423.6" width="1.1" height="2.0" fill="#ffff66"/><rect x="942.5" y="423.6" width="1.1" height="9.7" fill="#0a84ff"/><rect x="944.5" y="431.3" width="1.1" height="2.0" fill="#ffff66"/><rect x="945.5" y="431.3" width="1.1" height="2.0" fill="#ffff66"/><rect x="946.5" y="431.3" width="1.1" height="9.7" fill="#0a84ff"/><rect x="947.5" y="439.0" width="1.1" height="5.8" fill="#0a84ff"/><rect x="948.5" y="439.0" width="1.1" height="9.7" fill="#0a84ff"/><rect x="949.5" y="439.0" width="1.1" height="9.7" fill="#ff0000"/><rect x="950.5" y="439.0" width="1.1" height="2.0" fill="#ffff66"/><rect x="951.5" y="435.1" width="1.1" height="5.8" fill="#ff0000"/><rect x="953.5" y="427.5" width="1.1" height="13.5" fill="#ff0000"/><rect x="954.5" y="419.8" width="1.1" height="9.7" fill="#ff0000"/><rect x="955.5" y="415.9" width="1.1" height="17.4" fill="#0a84ff"/><rect x="956.5" y="427.5" width="1.1" height="5.8" fill="#ffff66"/><rect x="957.5" y="427.5" width="1.1" height="9.7" fill="#ff0000"/><rect x="958.5" y="423.6" width="1.1" height="9.7" fill="#ff0000"/><rect x="959.5" y="419.8" width="1.1" height="9.7" fill="#ff0000"/><rect x="960.5" y="419.8" width="1.1" height="2.0" fill="#ffff66"/><rect x="961.5" y="419.8" width="1.1" height="2.0" fill="#ffff66"/><rect x="962.5" y="419.8" width="1.1" height="9.7" fill="#0a84ff"/><rect x="963.5" y="427.5" width="1.1" height="2.0" fill="#ffff66"/><rect x="964.5" y="427.5" width="1.1" height="2.0" fill="#ffff66"/><rect x="965.5" y="419.8" width="1.1" height="9.7" fill="#ff0000"/><rect x="966.5" y="423.6" width="1.1" height="5.8" fill="#ffff66"/><rect x="967.5" y="419.8" width="1.1" height="9.7" fill="#ff0000"/><rect x="968.5" y="415.9" width="1.1" height="5.8" fill="#ff0000"/><rect x="969.5" y="412.1" width="1.1" height="5.8" fill="#ffff66"/><rect x="970.5" y="415.9" width="1.1" height="2.0" fill="#ffff66"/><rect x="972.5" y="404.4" width="1.1" height="17.4" fill="#ff0000"/><rect x="973.5" y="404.4" width="1.1" height="2.0" fill="#ffff66"/><rect x="976.5" y="389.1" width="1.1" height="17.4" fill="#ff0000"/><rect x="977.5" y="389.1" width="1.1" height="5.8" fill="#ff0000"/><rect x="978.5" y="385.2" width="1.1" height="9.7" fill="#ff0000"/><rect x="979.5" y="381.4" width="1.1" height="5.8" fill="#ff0000"/><rect x="980.5" y="377.5" width="1.1" height="5.8" fill="#ff0000"/><rect x="981.5" y="377.5" width="1.1" height="2.0" fill="#ffff66"/><rect x="982.5" y="373.7" width="1.1" height="13.5" fill="#0a84ff"/><rect x="983.5" y="381.4" width="1.1" height="9.7" fill="#0a84ff"/><rect x="984.5" y="385.2" width="1.1" height="5.8" fill="#0a84ff"/><rect x="985.5" y="389.1" width="1.1" height="5.8" fill="#0a84ff"/><rect x="987.5" y="392.9" width="1.1" height="2.0" fill="#ffff66"/><rect x="988.5" y="400.6" width="1.1" height="2.0" fill="#ffff66"/><rect x="990.5" y="392.9" width="1.1" height="9.7" fill="#ff0000"/><rect x="991.5" y="392.9" width="1.1" height="2.0" fill="#ffff66"/><rect x="993.5" y="389.1" width="1.1" height="2.0" fill="#ffff66"/><rect x="994.5" y="385.2" width="1.1" height="2.0" fill="#ffff66"/><rect x="995.5" y="385.2" width="1.1" height="2.0" fill="#ffff66"/><rect x="996.5" y="385.2" width="1.1" height="5.8" fill="#ffff66"/><rect x="997.5" y="385.2" width="1.1" height="2.0" fill="#ffff66"/><rect x="998.5" y="377.5" width="1.1" height="9.7" fill="#ff0000"/><rect x="999.5" y="377.5" width="1.1" height="2.0" fill="#ffff66"/><rect x="1000.5" y="377.5" width="1.1" height="2.0" fill="#ffff66"/><rect x="1001.5" y="377.5" width="1.1" height="2.0" fill="#ffff66"/><rect x="1002.5" y="373.7" width="1.1" height="9.7" fill="#0a84ff"/><rect x="1003.5" y="373.7" width="1.1" height="5.8" fill="#ffff66"/><rect x="1004.5" y="377.5" width="1.1" height="5.8" fill="#ffff66"/><rect x="1009.5" y="377.5" width="1.1" height="17.4" fill="#0a84ff"/><rect x="1011.5" y="392.9" width="1.1" height="9.7" fill="#0a84ff"/><rect x="1012.5" y="396.7" width="1.1" height="2.0" fill="#ffff66"/><rect x="1014.5" y="404.4" width="1.1" height="2.0" fill="#ffff66"/><rect x="1015.5" y="404.4" width="1.1" height="9.7" fill="#0a84ff"/><rect x="1016.5" y="412.1" width="1.1" height="2.0" fill="#ffff66"/><rect x="1017.5" y="415.9" width="1.1" height="2.0" fill="#ffff66"/><rect x="1018.5" y="412.1" width="1.1" height="5.8" fill="#ffff66"/><rect x="1019.5" y="419.8" width="1.1" height="2.0" fill="#ffff66"/><rect x="1020.5" y="412.1" width="1.1" height="2.0" fill="#ffff66"/><rect x="1021.5" y="412.1" width="1.1" height="2.0" fill="#ffff66"/><rect x="1022.5" y="408.3" width="1.1" height="5.8" fill="#ffff66"/><rect x="1023.5" y="404.4" width="1.1" height="2.0" fill="#ffff66"/><rect x="1024.5" y="396.7" width="1.1" height="9.7" fill="#ff0000"/><rect x="1025.5" y="396.7" width="1.1" height="2.0" fill="#ffff66"/><rect x="1026.5" y="389.1" width="1.1" height="2.0" fill="#ffff66"/><rect x="1027.5" y="389.1" width="1.1" height="2.0" fill="#ffff66"/><rect x="1029.5" y="385.2" width="1.1" height="2.0" fill="#ffff66"/><rect x="1030.5" y="385.2" width="1.1" height="2.0" fill="#ffff66"/><rect x="1032.5" y="385.2" width="1.1" height="2.0" fill="#ffff66"/><rect x="1034.5" y="377.5" width="1.1" height="13.5" fill="#ff0000"/><rect x="1035.5" y="373.7" width="1.1" height="2.0" fill="#ffff66"/><rect x="1037.5" y="366.0" width="1.1" height="9.7" fill="#ff0000"/><rect x="1041.5" y="366.0" width="1.1" height="2.0" fill="#ffff66"/><rect x="1042.5" y="366.0" width="1.1" height="2.0" fill="#ffff66"/><rect x="1043.5" y="366.0" width="1.1" height="5.8" fill="#0a84ff"/><rect x="1044.5" y="366.0" width="1.1" height="5.8" fill="#ff0000"/><rect x="1045.5" y="362.2" width="1.1" height="9.7" fill="#ff0000"/><rect x="1046.5" y="358.3" width="1.1" height="5.8" fill="#ff0000"/><rect x="1047.5" y="358.3" width="1.1" height="2.0" fill="#ffff66"/><rect x="14.8" y="345.3" width="1.2" height="4.0" fill="#ffff66"/><rect x="17.9" y="339.8" width="1.2" height="2.0" fill="#ffff66"/><rect x="21.9" y="339.8" width="1.2" height="2.0" fill="#ffff66"/><rect x="22.9" y="339.8" width="1.2" height="2.0" fill="#ffff66"/><rect x="24.7" y="335.7" width="1.2" height="3.0" fill="#ffff66"/><rect x="30.9" y="327.5" width="1.2" height="3.0" fill="#ffff66"/><rect x="35.4" y="324.0" width="1.2" height="2.0" fill="#ffff66"/><rect x="36.4" y="324.0" width="1.2" height="2.0" fill="#ffff66"/><rect x="37.4" y="324.0" width="1.2" height="2.0" fill="#ffff66"/><rect x="40.5" y="319.9" width="1.2" height="2.0" fill="#ffff66"/><rect x="44.4" y="324.0" width="1.2" height="2.0" fill="#ffff66"/><rect x="52.9" y="324.0" width="1.2" height="2.0" fill="#ffff66"/><rect x="53.9" y="324.0" width="1.2" height="2.0" fill="#ffff66"/><rect x="56.9" y="327.5" width="1.2" height="3.0" fill="#ffff66"/><rect x="55.9" y="319.9" width="1.2" height="2.0" fill="#ffff66"/><rect x="58.6" y="319.9" width="1.2" height="2.0" fill="#ffff66"/><rect x="60.8" y="316.2" width="1.2" height="3.0" fill="#ffff66"/><rect x="1053.4" y="381.4" width="1.3" height="9.0" fill="#ff0000"/><rect x="1044.8" y="371.2" width="1.2" height="3.0" fill="#ff0000"/><rect x="1054.6" y="377.7" width="1.2" height="2.0" fill="#ffff66"/><rect x="1055.3" y="373.7" width="1.2" height="2.0" fill="#ffff66"/><rect x="1058.3" y="373.6" width="1.2" height="2.0" fill="#ffff66"/><rect x="1059.4" y="371.0" width="1.2" height="2.0" fill="#ffff66"/><rect x="1063.9" y="371.0" width="1.2" height="2.0" fill="#ffff66"/><rect x="1066.8" y="371.0" width="1.2" height="2.0" fill="#ffff66"/><rect x="1070.6" y="381.9" width="1.2" height="2.0" fill="#ffff66"/><rect x="1071.4" y="381.9" width="1.2" height="2.0" fill="#ffff66"/><rect x="1072.8" y="389.7" width="1.2" height="2.0" fill="#ffff66"/><rect x="1074.3" y="393.6" width="1.2" height="2.0" fill="#ffff66"/><rect x="1077.0" y="389.7" width="1.2" height="2.0" fill="#ffff66"/><rect x="1079.9" y="393.6" width="1.2" height="2.0" fill="#ffff66"/><rect x="1081.8" y="400.6" width="1.2" height="2.0" fill="#ffff66"/><rect x="1085.3" y="397.0" width="1.2" height="4.0" fill="#ff0000"/><rect x="1087.1" y="400.6" width="1.2" height="2.0" fill="#ffff66"/><rect x="1088.0" y="400.6" width="1.2" height="2.0" fill="#ffff66"/><rect x="1089.3" y="396.9" width="1.2" height="2.0" fill="#ffff66"/><rect x="1090.5" y="393.6" width="1.2" height="2.0" fill="#ffff66"/><rect x="1097.5" y="389.7" width="1.2" height="2.0" fill="#ffff66"/><rect x="1101.3" y="396.9" width="1.2" height="2.0" fill="#ffff66"/><rect x="1107.0" y="400.6" width="1.2" height="2.0" fill="#ffff66"/><rect x="1111.0" y="393.6" width="1.2" height="2.0" fill="#ffff66"/><rect x="1118.5" y="381.9" width="1.2" height="2.0" fill="#ffff66"/><rect x="1120.0" y="385.7" width="1.3" height="8.0" fill="#0a84ff"/><rect x="1121.5" y="389.7" width="1.2" height="2.0" fill="#ffff66"/><rect x="1123.7" y="393.6" width="1.2" height="2.0" fill="#ffff66"/><rect x="1126.0" y="386.4" width="1.3" height="8.0" fill="#ff0000"/><rect x="1127.2" y="390.6" width="1.2" height="4.0" fill="#0a84ff"/><rect x="1130.2" y="390.2" width="1.2" height="4.0" fill="#ff0000"/><rect x="1136.4" y="385.7" width="1.2" height="2.0" fill="#ffff66"/><rect x="1138.4" y="374.2" width="1.2" height="4.0" fill="#ff0000"/><rect x="1145.4" y="393.6" width="1.2" height="2.0" fill="#ffff66"/><rect x="1146.4" y="393.6" width="1.2" height="2.0" fill="#ffff66"/><rect x="1147.4" y="396.9" width="1.2" height="2.0" fill="#ffff66"/><rect x="1148.4" y="400.6" width="1.2" height="2.0" fill="#ffff66"/><rect x="1152.9" y="400.6" width="1.2" height="2.0" fill="#ffff66"/><rect x="1155.9" y="400.6" width="1.2" height="2.0" fill="#ffff66"/><rect x="1157.8" y="396.9" width="1.2" height="2.0" fill="#ffff66"/><rect x="1159.6" y="412.6" width="1.2" height="2.0" fill="#ffff66"/><rect x="1173.9" y="400.6" width="1.2" height="2.0" fill="#ffff66"/><rect x="1174.9" y="400.6" width="1.2" height="2.0" fill="#ffff66"/><rect x="1175.9" y="400.6" width="1.2" height="2.0" fill="#ffff66"/><rect x="1177.3" y="396.9" width="1.2" height="2.0" fill="#ffff66"/><rect x="1180.3" y="396.9" width="1.2" height="2.0" fill="#ffff66"/><rect x="1181.3" y="401.1" width="1.2" height="4.0" fill="#0a84ff"/><rect x="1187.9" y="396.9" width="1.2" height="2.0" fill="#ffff66"/><rect x="1188.9" y="396.9" width="1.2" height="2.0" fill="#ffff66"/><rect x="1190.3" y="401.1" width="1.2" height="4.0" fill="#0a84ff"/><rect x="1192.3" y="394.1" width="1.2" height="3.0" fill="#ff0000"/><rect x="1191.8" y="397.9" width="1.2" height="3.0" fill="#ffff66"/><rect x="1194.8" y="396.9" width="1.2" height="2.0" fill="#ffff66"/><rect x="1195.9" y="394.1" width="1.3" height="27.0" fill="#0a84ff"/><rect x="1197.4" y="412.6" width="1.2" height="2.0" fill="#ffff66"/><rect x="1198.8" y="417.3" width="1.3" height="15.0" fill="#0a84ff"/><rect x="1200.0" y="428.3" width="1.3" height="8.0" fill="#ff0000"/><rect x="1203.8" y="416.6" width="1.2" height="2.0" fill="#ffff66"/><rect x="1212.0" y="400.6" width="1.2" height="2.0" fill="#ffff66"/><rect x="1213.8" y="389.7" width="1.2" height="2.0" fill="#ffff66"/><rect x="1216.2" y="401.0" width="1.3" height="16.0" fill="#ff0000"/><rect x="1217.6" y="393.6" width="1.2" height="2.0" fill="#ffff66"/><rect x="1224.7" y="404.7" width="1.2" height="2.0" fill="#ffff66"/><rect x="1226.2" y="390.1" width="1.3" height="27.0" fill="#ff0000"/><rect x="1230.4" y="421.3" width="1.3" height="7.0" fill="#0a84ff"/><rect x="1231.5" y="389.7" width="1.2" height="2.0" fill="#ffff66"/><rect x="1234.5" y="373.7" width="1.2" height="2.0" fill="#ffff66"/><rect x="69.9" y="274.4" width="1.1" height="22.4" fill="#ff0000"/><rect x="475.8" y="397.0" width="1.1" height="39.0" fill="#ff0000"/><rect x="766.0" y="332.5" width="1.1" height="33.5" fill="#ff0000"/><rect x="775.3" y="320.0" width="1.1" height="46.0" fill="#ff0000"/><rect x="778.1" y="336.7" width="1.1" height="52.1" fill="#0a84ff"/><rect x="779.1" y="340.0" width="1.1" height="45.0" fill="#0a84ff"/><rect x="780.1" y="359.0" width="1.1" height="41.0" fill="#0a84ff"/><rect x="102.0" y="286.7" width="1.1" height="15.2" fill="#ffff66"/><rect x="108.1" y="329.0" width="1.1" height="8.0" fill="#ffff66"/><rect x="318.4" y="405.0" width="1.1" height="12.4" fill="#ffff66"/><rect x="545.8" y="335.0" width="1.1" height="29.0" fill="#ff0000"/><rect x="547.2" y="328.3" width="1.1" height="9.7" fill="#ffff66"/><rect x="434.2" y="421.0" width="1.1" height="15.0" fill="#ffff66"/><rect x="408.0" y="405.6" width="1.1" height="4.4" fill="#ffff66"/><rect x="718.2" y="375.0" width="1.1" height="15.0" fill="#ffff66"/><rect x="847.6" y="488.0" width="1.1" height="7.6" fill="#ffff66"/><rect x="807.1" y="377.0" width="1.1" height="20.0" fill="#ff0000"/><rect x="852.7" y="450.0" width="1.1" height="24.0" fill="#ff0000"/><rect x="840.0" y="451.0" width="1.1" height="26.0" fill="#0a84ff"/></g>
<path d="M9.0 542.4L10.0 542.4L11.0 541.5L12.0 539.7L13.0 538.8L14.0 538.8L15.0 537.9L16.0 538.8L17.0 538.8L18.0 539.7L19.0 538.8L20.0 538.8L21.0 537.9L22.0 538.8L23.0 537.9L24.0 537.0L25.0 537.9L26.0 537.9L27.0 537.9L28.0 537.9L29.0 537.0L30.0 537.0L31.0 537.9L32.0 537.9L33.0 538.8L34.0 538.8L35.0 539.7L36.0 540.6L37.0 540.6L38.0 541.5L39.0 540.6L40.0 541.5L41.0 540.6L42.0 541.5L43.0 540.6L44.0 540.6L45.0 542.4L46.0 542.4L47.0 542.4L48.0 542.4L49.0 542.4L50.0 542.4L51.0 543.3L52.0 543.3L53.0 544.2L54.0 544.2L55.0 545.1L56.0 544.2L57.0 546.0L58.0 546.0L59.0 546.0L60.0 546.0L61.0 546.9L62.0 546.9L63.0 546.9L64.0 546.9L65.0 546.0L66.0 546.9L67.0 546.9L68.0 547.8L69.0 548.7L70.0 550.6L71.0 554.2L72.0 555.1L73.0 555.1L74.0 555.1L75.0 555.1L76.0 556.0L77.0 556.9L78.0 556.9L79.0 557.8L80.0 557.8L81.0 557.8L82.0 557.8L83.0 556.9L84.0 557.8L85.0 556.9L86.0 555.1L87.0 551.5L88.0 548.7L89.0 548.7L90.0 549.7L91.0 549.7L92.0 551.5L93.0 551.5L94.0 551.5L95.0 552.4L96.0 551.5L97.0 549.7L98.0 550.6L99.0 548.7L100.0 548.7L101.0 550.6L102.0 550.6L103.0 551.5L104.0 550.6L105.0 550.6L106.0 551.5L107.0 550.6L108.0 549.7L109.0 548.7L110.0 548.7L111.0 550.6L112.0 547.8L113.0 547.8L114.0 548.7L115.0 547.8L116.0 547.8L117.0 548.7L118.0 547.8L119.0 546.9L120.0 546.9L121.0 546.9L122.0 546.9L123.0 546.0L124.0 546.0L125.0 544.2L126.0 542.4L127.0 542.4L128.0 540.6L129.0 540.6L130.0 541.5L131.0 540.6L132.0 542.4L133.0 542.4L134.0 543.3L135.0 544.2L136.0 544.2L137.0 544.2L138.0 545.1L139.0 544.2L140.0 545.1L141.0 545.1L142.0 546.0L143.0 545.1L144.0 545.1L145.0 546.0L146.0 545.1L147.0 545.1L148.0 545.1L149.0 545.1L150.0 545.1L151.0 546.0L152.0 546.0L153.0 546.9L154.0 546.9L155.0 546.9L156.0 548.7L157.0 548.7L158.0 548.7L159.0 548.7L160.0 548.7L161.0 547.8L162.0 546.9L163.0 546.9L164.0 548.7L165.0 548.7L166.0 549.7L167.0 549.7L168.0 551.5L169.0 553.3L170.0 553.3L171.0 553.3L172.0 555.1L173.0 554.2L174.0 555.1L175.0 555.1L176.0 556.0L177.0 555.1L178.0 555.1L179.0 556.0L180.0 556.0L181.0 556.0L182.0 556.9L183.0 557.8L184.0 556.9L185.0 556.0L186.0 556.0L187.0 556.0L188.0 555.1L189.0 555.1L190.0 555.1L191.0 555.1L192.0 556.0L193.0 556.0L194.0 556.9L195.0 557.8L196.0 558.7L197.0 558.7L198.0 558.7L199.0 558.7L200.0 558.7L201.0 558.7L202.0 558.7L203.0 556.9L204.0 557.8L205.0 556.0L206.0 556.9L207.0 557.8L208.0 557.8L209.0 558.7L210.0 558.7L211.0 558.7L212.0 558.7L213.0 557.8L214.0 556.9L215.0 556.9L216.0 557.8L217.0 556.9L218.0 556.9L219.0 557.8L220.0 556.9L221.0 557.8L222.0 559.6L223.0 559.6L224.0 560.5L225.0 559.6L226.0 559.6L227.0 559.6L228.0 559.6L229.0 558.7L230.0 557.8L231.0 557.8L232.0 557.8L233.0 557.8L234.0 557.8L235.0 557.8L236.0 557.8L237.0 557.8L238.0 556.9L239.0 556.0L240.0 555.1L241.0 554.2L242.0 553.3L243.0 553.3L244.0 553.3L245.0 553.3L246.0 553.3L247.0 553.3L248.0 553.3L249.0 553.3L250.0 552.4L251.0 552.4L252.0 551.5L253.0 552.4L254.0 551.5L255.0 552.4L256.0 551.5L257.0 550.6L258.0 550.6L259.0 549.7L260.0 548.7L261.0 548.7L262.0 547.8L263.0 548.7L264.0 547.8L265.0 547.8L266.0 547.8L267.0 548.7L268.0 548.7L269.0 548.7L270.0 548.7L271.0 549.7L272.0 549.7L273.0 549.7L274.0 550.6L275.0 551.5L276.0 551.5L277.0 550.6L278.0 550.6L279.0 550.6L280.0 548.7L281.0 548.7L282.0 547.8L283.0 548.7L284.0 547.8L285.0 547.8L286.0 547.8L287.0 547.8L288.0 547.8L289.0 547.8L290.0 546.9L291.0 547.8L292.0 546.9L293.0 546.9L294.0 547.8L295.0 547.8L296.0 548.7L297.0 548.7L298.0 549.7L299.0 550.6L300.0 550.6L301.0 551.5L302.0 551.5L303.0 552.4L304.0 552.4L305.0 553.3L306.0 552.4L307.0 551.5L308.0 550.6L309.0 549.7L310.0 549.7L311.0 550.6L312.0 550.6L313.0 549.7L314.0 550.6L315.0 548.7L316.0 548.7L317.0 547.8L318.0 546.0L319.0 546.0L320.0 546.9L321.0 547.8L322.0 548.7L323.0 549.7L324.0 548.7L325.0 550.6L326.0 549.7L327.0 551.5L328.0 551.5L329.0 551.5L330.0 553.3L331.0 552.4L332.0 552.4L333.0 552.4L334.0 551.5L335.0 550.6L336.0 549.7L337.0 548.7L338.0 547.8L339.0 547.8L340.0 546.9L341.0 546.9L342.0 546.9L343.0 546.9L344.0 546.9L345.0 546.9L346.0 546.9L347.0 546.9L348.0 546.9L349.0 546.0L350.0 546.0L351.0 546.0L352.0 545.1L353.0 543.3L354.0 545.1L355.0 546.0L356.0 546.0L357.0 546.9L358.0 546.9L359.0 547.8L360.0 547.8L361.0 547.8L362.0 547.8L363.0 549.7L364.0 549.7L365.0 549.7L366.0 550.6L367.0 549.7L368.0 548.7L369.0 548.7L370.0 547.8L371.0 547.8L372.0 546.9L373.0 547.8L374.0 547.8L375.0 546.9L376.0 546.9L377.0 546.0L378.0 546.9L379.0 546.9L380.0 546.9L381.0 546.9L382.0 546.0L383.0 546.0L384.0 546.0L385.0 546.9L386.0 547.8L387.0 550.6L388.0 550.6L389.0 550.6L390.0 549.7L391.0 548.7L392.0 547.8L393.0 547.8L394.0 548.7L395.0 548.7L396.0 550.6L397.0 549.7L398.0 550.6L399.0 549.7L400.0 549.7L401.0 549.7L402.0 549.7L403.0 549.7L404.0 549.7L405.0 549.7L406.0 549.7L407.0 550.6L408.0 550.6L409.0 551.5L410.0 550.6L411.0 551.5L412.0 550.6L413.0 550.6L414.0 549.7L415.0 550.6L416.0 550.6L417.0 550.6L418.0 550.6L419.0 550.6L420.0 551.5L421.0 550.6L422.0 551.5L423.0 550.6L424.0 548.7L425.0 548.7L426.0 548.7L427.0 548.7L428.0 549.7L429.0 552.4L430.0 552.4L431.0 554.2L432.0 551.5L433.0 550.6L434.0 549.7L435.0 546.9L436.0 546.9L437.0 547.8L438.0 547.8L439.0 547.8L440.0 546.9L441.0 546.9L442.0 546.9L443.0 546.9L444.0 547.8L445.0 547.8L446.0 547.8L447.0 548.7L448.0 548.7L449.0 550.6L450.0 551.5L451.0 552.4L452.0 552.4L453.0 552.4L454.0 553.3L455.0 554.2L456.0 555.1L457.0 555.1L458.0 555.1L459.0 556.0L460.0 557.8L461.0 557.8L462.0 558.7L463.0 559.6L464.0 560.5L465.0 560.5L466.0 558.7L467.0 556.9L468.0 554.2L469.0 556.0L470.0 556.0L471.0 556.0L472.0 555.1L473.0 554.2L474.0 551.5L475.0 549.7L476.0 547.8L477.0 547.8L478.0 546.9L479.0 547.8L480.0 546.9L481.0 546.9L482.0 548.7L483.0 548.7L484.0 549.7L485.0 548.7L486.0 547.8L487.0 547.8L488.0 546.9L489.0 545.1L490.0 546.0L491.0 545.1L492.0 545.1L493.0 545.1L494.0 544.2L495.0 545.1L496.0 546.0L497.0 546.9L498.0 547.8L499.0 547.8L500.0 546.9L501.0 546.9L502.0 546.0L503.0 546.0L504.0 545.1L505.0 545.1L506.0 545.1L507.0 546.0L508.0 546.0L509.0 545.1L510.0 546.9L511.0 546.0L512.0 546.0L513.0 546.9L514.0 547.8L515.0 547.8L516.0 548.7L517.0 549.7L518.0 549.7L519.0 550.6L520.0 551.5L521.0 552.4L522.0 552.4L523.0 554.2L524.0 555.1L525.0 554.2L526.0 552.4L527.0 550.6L528.0 551.5L529.0 553.3L530.0 553.3L531.0 552.4L532.0 552.4L533.0 553.3L534.0 554.2L535.0 556.9L536.0 557.8L537.0 558.7L538.0 557.8L539.0 557.8L540.0 556.9L541.0 556.9L542.0 556.9L543.0 555.1L544.0 556.0L545.0 555.1L546.0 558.7L547.0 560.5L548.0 560.5L549.0 559.6L550.0 557.8L551.0 558.7L552.0 556.9L553.0 556.9L554.0 556.9L555.0 556.0L556.0 556.0L557.0 556.9L558.0 557.8L559.0 557.8L560.0 557.8L561.0 556.0L562.0 554.2L563.0 554.2L564.0 553.3L565.0 553.3L566.0 553.3L567.0 552.4L568.0 552.4L569.0 552.4L570.0 552.4L571.0 555.1L572.0 555.1L573.0 555.1L574.0 556.0L575.0 555.1L576.0 555.1L577.0 556.0L578.0 556.0L579.0 556.9L580.0 557.8L581.0 558.7L582.0 557.8L583.0 558.7L584.0 557.8L585.0 556.9L586.0 556.0L587.0 556.0L588.0 555.1L589.0 555.1L590.0 554.2L591.0 555.1L592.0 555.1L593.0 556.0L594.0 556.9L595.0 556.9L596.0 556.9L597.0 557.8L598.0 557.8L599.0 557.8L600.0 556.9L601.0 556.9L602.0 556.0L603.0 556.0L604.0 556.0L605.0 556.9L606.0 557.8L607.0 558.7L608.0 557.8L609.0 556.9L610.0 555.1L611.0 555.1L612.0 554.2L613.0 553.3L614.0 554.2L615.0 555.1L616.0 555.1L617.0 556.0L618.0 556.0L619.0 556.0L620.0 555.1L621.0 554.2L622.0 554.2L623.0 555.1L624.0 556.0L625.0 556.0L626.0 556.0L627.0 556.9L628.0 555.1L629.0 555.1L630.0 555.1L631.0 554.2L632.0 553.3L633.0 552.4L634.0 551.5L635.0 550.6L636.0 549.7L637.0 549.7L638.0 549.7L639.0 547.8L640.0 548.7L641.0 551.5L642.0 553.3L643.0 555.1L644.0 554.2L645.0 555.1L646.0 555.1L647.0 556.9L648.0 556.0L649.0 556.9L650.0 557.8L651.0 557.8L652.0 558.7L653.0 559.6L654.0 560.5L655.0 560.5L656.0 560.5L657.0 560.5L658.0 561.4L659.0 559.6L660.0 559.6L661.0 559.6L662.0 559.6L663.0 559.6L664.0 559.6L665.0 560.5L666.0 559.6L667.0 560.5L668.0 561.4L669.0 562.4L670.0 564.2L671.0 566.0L672.0 566.0L673.0 566.0L674.0 566.0L675.0 566.0L676.0 566.9L677.0 566.9L678.0 566.9L679.0 568.7L680.0 568.7L681.0 569.6L682.0 570.5L683.0 571.4L684.0 570.5L685.0 570.5L686.0 570.5L687.0 569.6L688.0 568.7L689.0 568.7L690.0 567.8L691.0 566.9L692.0 566.9L693.0 566.0L694.0 566.0L695.0 566.0L696.0 566.0L697.0 565.1L698.0 566.0L699.0 566.0L700.0 564.2L701.0 563.3L702.0 561.4L703.0 559.6L704.0 558.7L705.0 557.8L706.0 558.7L707.0 560.5L708.0 563.3L709.0 565.1L710.0 565.1L711.0 565.1L712.0 565.1L713.0 565.1L714.0 563.3L715.0 563.3L716.0 562.4L717.0 560.5L718.0 559.6L719.0 560.5L720.0 560.5L721.0 559.6L722.0 559.6L723.0 557.8L724.0 557.8L725.0 557.8L726.0 557.8L727.0 558.7L728.0 559.6L729.0 560.5L730.0 560.5L731.0 560.5L732.0 559.6L733.0 560.5L734.0 559.6L735.0 559.6L736.0 559.6L737.0 560.5L738.0 560.5L739.0 561.4L740.0 561.4L741.0 562.4L742.0 562.4L743.0 562.4L744.0 560.5L745.0 558.7L746.0 560.5L747.0 562.4L748.0 564.2L749.0 566.0L750.0 566.0L751.0 565.1L752.0 564.2L753.0 565.1L754.0 565.1L755.0 566.0L756.0 566.0L757.0 566.0L758.0 565.1L759.0 566.0L760.0 566.0L761.0 566.0L762.0 566.9L763.0 565.1L764.0 565.1L765.0 564.2L766.0 565.1L767.0 566.0L768.0 567.8L769.0 570.5L770.0 573.2L771.0 574.1L772.0 576.0L773.0 572.3L774.0 570.5L775.0 568.7L776.0 566.9L777.0 567.8L778.0 599.5L779.0 605.0L780.0 598.6L781.0 598.6L782.0 604.1L783.0 598.6L784.0 595.0L785.0 591.4L786.0 590.5L787.0 594.1L788.0 596.8L789.0 601.4L790.0 605.0L791.0 606.8L792.0 606.8L793.0 608.6L794.0 610.4L795.0 611.3L796.0 612.2L797.0 613.1L798.0 615.0L799.0 614.0L800.0 613.1L801.0 613.1L802.0 615.0L803.0 616.8L804.0 618.6L805.0 617.7L806.0 616.8L807.0 616.8L808.0 616.8L809.0 616.8L810.0 618.6L811.0 620.4L812.0 622.2L813.0 622.2L814.0 622.2L815.0 624.0L816.0 627.7L817.0 627.7L818.0 624.0L819.0 621.3L820.0 619.5L821.0 615.9L822.0 614.0L823.0 611.3L824.0 610.4L825.0 607.7L826.0 609.5L827.0 612.2L828.0 614.0L829.0 613.1L830.0 614.0L831.0 615.0L832.0 610.4L833.0 611.3L834.0 613.1L835.0 615.0L836.0 614.0L837.0 614.0L838.0 614.0L839.0 615.9L840.0 617.7L841.0 619.5L842.0 618.6L843.0 620.4L844.0 619.5L845.0 620.4L846.0 621.3L847.0 621.3L848.0 622.2L849.0 620.4L850.0 619.5L851.0 618.6L852.0 618.6L853.0 619.5L854.0 620.4L855.0 618.6L856.0 618.6L857.0 618.6L858.0 620.4L859.0 622.2L860.0 623.1L861.0 622.2L862.0 620.4L863.0 619.5L864.0 622.2L865.0 624.9L866.0 627.7L867.0 632.2L868.0 635.8L869.0 637.6L870.0 642.2L871.0 643.1L872.0 642.2L873.0 642.2L874.0 642.2L875.0 642.2L876.0 642.2L877.0 642.2L878.0 644.0L879.0 644.9L880.0 644.9L881.0 643.1L882.0 642.2L883.0 642.2L884.0 641.3L885.0 641.3L886.0 640.4L887.0 639.4L888.0 636.7L889.0 636.7L890.0 634.0L891.0 635.8L892.0 637.6L893.0 640.4L894.0 641.3L895.0 641.3L896.0 642.2L897.0 643.1L898.0 643.1L899.0 642.2L900.0 641.3L901.0 641.3L902.0 641.3L903.0 644.0L904.0 645.8L905.0 646.7L906.0 644.9L907.0 644.0L908.0 643.1L909.0 642.2L910.0 641.3L911.0 638.5L912.0 636.7L913.0 634.9L914.0 633.1L915.0 631.3L916.0 630.4L917.0 633.1L918.0 634.0L919.0 633.1L920.0 632.2L921.0 632.2L922.0 634.0L923.0 634.9L924.0 635.8L925.0 635.8L926.0 637.6L927.0 638.5L928.0 640.4L929.0 642.2L930.0 643.1L931.0 643.1L932.0 644.0L933.0 643.1L934.0 642.2L935.0 643.1L936.0 644.0L937.0 644.9L938.0 645.8L939.0 646.7L940.0 646.7L941.0 647.6L942.0 647.6L943.0 645.8L944.0 645.8L945.0 644.0L946.0 642.2L947.0 642.2L948.0 641.3L949.0 641.3L950.0 641.3L951.0 640.4L952.0 640.4L953.0 639.4L954.0 638.5L955.0 637.6L956.0 638.5L957.0 637.6L958.0 639.4L959.0 640.4L960.0 641.3L961.0 642.2L962.0 643.1L963.0 643.1L964.0 642.2L965.0 641.3L966.0 640.4L967.0 639.4L968.0 640.4L969.0 638.5L970.0 640.4L971.0 640.4L972.0 642.2L973.0 643.1L974.0 643.1L975.0 643.1L976.0 642.2L977.0 642.2L978.0 642.2L979.0 643.1L980.0 644.0L981.0 644.9L982.0 645.8L983.0 646.7L984.0 648.5L985.0 647.6L986.0 646.7L987.0 646.7L988.0 644.9L989.0 644.9L990.0 644.9L991.0 644.9L992.0 644.9L993.0 644.9L994.0 644.9L995.0 645.8L996.0 644.9L997.0 646.7L998.0 646.7L999.0 648.5L1000.0 648.5L1001.0 650.3L1002.0 650.3L1003.0 652.1L1004.0 652.1L1005.0 652.1L1006.0 652.1L1007.0 653.1L1008.0 651.2L1009.0 649.4L1010.0 647.6L1011.0 645.8L1012.0 645.8L1013.0 644.9L1014.0 644.0L1015.0 642.2L1016.0 642.2L1017.0 640.4L1018.0 640.4L1019.0 638.5L1020.0 637.6L1021.0 638.5L1022.0 640.4L1023.0 640.4L1024.0 641.3L1025.0 642.2L1026.0 643.1L1027.0 642.2L1028.0 642.2L1029.0 643.1L1030.0 642.2L1031.0 643.1L1032.0 642.2L1033.0 643.1L1034.0 644.0L1035.0 644.0L1036.0 644.9L1037.0 644.9L1038.0 645.8L1039.0 646.7L1040.0 647.6L1041.0 648.5L1042.0 649.4L1043.0 649.4L1044.0 650.3L1045.0 652.1L1046.0 653.1L1047.0 653.1L1048.0 654.0L1049.0 654.0L1050.0 654.0L1051.0 653.1L1052.0 654.0L1053.0 653.1L1054.0 653.1L1055.0 654.0L1056.0 656.7L1057.0 657.6L1058.0 659.4L1059.0 661.2L1060.0 660.3L1061.0 660.3L1062.0 659.4L1063.0 659.4L1064.0 658.5L1065.0 659.4L1066.0 659.4L1067.0 659.4L1068.0 659.4L1069.0 660.3L1070.0 660.3L1071.0 660.3L1072.0 659.4L1073.0 656.7L1074.0 655.8L1075.0 654.0L1076.0 654.9L1077.0 654.9L1078.0 655.8L1079.0 656.7L1080.0 658.5L1081.0 658.5L1082.0 657.6L1083.0 658.5L1084.0 657.6L1085.0 657.6L1086.0 657.6L1087.0 658.5L1088.0 658.5L1089.0 657.6L1090.0 658.5L1091.0 657.6L1092.0 657.6L1093.0 655.8L1094.0 654.9L1095.0 655.8L1096.0 654.0L1097.0 654.9L1098.0 654.9L1099.0 654.9L1100.0 654.0L1101.0 654.9L1102.0 655.8L1103.0 654.9L1104.0 654.0L1105.0 654.0L1106.0 653.1L1107.0 654.0L1108.0 652.1L1109.0 652.1L1110.0 652.1L1111.0 653.1L1112.0 653.1L1113.0 652.1L1114.0 653.1L1115.0 653.1L1116.0 651.2L1117.0 650.3L1118.0 649.4L1119.0 651.2L1120.0 651.2L1121.0 650.3L1122.0 651.2L1123.0 651.2L1124.0 652.1L1125.0 651.2L1126.0 651.2L1127.0 651.2L1128.0 650.3L1129.0 651.2L1130.0 650.3L1131.0 650.3L1132.0 652.1L1133.0 653.1L1134.0 654.0L1135.0 655.8L1136.0 654.9L1137.0 654.9L1138.0 654.9L1139.0 654.0L1140.0 655.8L1141.0 656.7L1142.0 655.8L1143.0 656.7L1144.0 658.5L1145.0 657.6L1146.0 658.5L1147.0 657.6L1148.0 656.7L1149.0 656.7L1150.0 658.5L1151.0 658.5L1152.0 660.3L1153.0 661.2L1154.0 660.3L1155.0 659.4L1156.0 658.5L1157.0 657.6L1158.0 656.7L1159.0 656.7L1160.0 655.8L1161.0 655.8L1162.0 654.9L1163.0 654.9L1164.0 654.9L1165.0 654.9L1166.0 654.9L1167.0 654.0L1168.0 654.0L1169.0 653.1L1170.0 653.1L1171.0 653.1L1172.0 654.0L1173.0 654.0L1174.0 654.0L1175.0 654.9L1176.0 654.9L1177.0 655.8L1178.0 656.7L1179.0 656.7L1180.0 657.6L1181.0 656.7L1182.0 656.7L1183.0 655.8L1184.0 654.9L1185.0 654.9L1186.0 654.9L1187.0 654.0L1188.0 655.8L1189.0 654.9L1190.0 654.9L1191.0 654.9L1192.0 654.9L1193.0 655.8L1194.0 656.7L1195.0 657.6L1196.0 655.8L1197.0 654.0L1198.0 652.1L1199.0 650.3L1200.0 650.3L1201.0 648.5L1202.0 648.5L1203.0 647.6L1204.0 647.6L1205.0 647.6L1206.0 648.5L1207.0 648.5L1208.0 648.5L1209.0 647.6L1210.0 647.6L1211.0 647.6L1212.0 648.5L1213.0 651.2L1214.0 652.1L1215.0 653.1L1216.0 654.0L1217.0 654.0L1218.0 653.1L1219.0 653.1L1220.0 653.1L1221.0 652.1L1222.0 653.1L1223.0 654.0L1224.0 653.1L1225.0 653.1L1226.0 653.1L1227.0 654.0L1228.0 653.1L1229.0 652.1L1230.0 653.1L1231.0 653.1L1232.0 653.1L1233.0 654.9L1234.0 658.5L1235.0 662.1" fill="none" stroke="#ff0000" stroke-width="2.1" stroke-linejoin="miter"/>
</svg>
<div class="t ax" style="left:16.2px;top:238px;"><span class="l">04</span></div>
<div class="t ax" style="left:56.2px;top:238px;"><span class="l">05</span></div>
<div class="t b" style="left:68.5px;top:238px;"><span class="l">06</span></div>
<div class="t ax" style="left:101.2px;top:238px;"><span class="l">09</span></div>
<div class="t ax" style="left:162.2px;top:238px;"><span class="l">10</span></div>
<div class="t ax" style="left:224.2px;top:238px;"><span class="l">11</span></div>
<div class="t ax" style="left:283.2px;top:238px;"><span class="l">12</span></div>
<div class="t ax" style="left:344.2px;top:238px;"><span class="l">13</span></div>
<div class="t ax" style="left:404.2px;top:238px;"><span class="l">14</span></div>
<div class="t ax" style="left:449px;top:238px;"><span class="l">15</span></div>
<div class="t ax" style="left:476.2px;top:238px;"><span class="l">16</span></div>
<div class="t ax" style="left:505.2px;top:238px;"><span class="l">17</span></div>
<div class="t ax" style="left:567.2px;top:238px;"><span class="l">18</span></div>
<div class="t ax" style="left:628.2px;top:238px;"><span class="l">19</span></div>
<div class="t ax" style="left:686.2px;top:238px;"><span class="l">20</span></div>
<div class="t ax" style="left:747.2px;top:238px;"><span class="l">21</span></div>
<div class="t ax" style="left:808.2px;top:238px;"><span class="l">22</span></div>
<div class="t ax" style="left:869.2px;top:238px;"><span class="l">23</span></div>
<div class="t ax" style="left:930.2px;top:238px;"><span class="l">00</span></div>
<div class="t ax" style="left:991.2px;top:238px;"><span class="l">01</span></div>
<div class="t ax" style="left:1051.2px;top:238px;"><span class="l">02</span></div>
<div class="t ax" style="left:1105.2px;top:238px;"><span class="l">03</span></div>
<div class="t ax" style="left:1154.2px;top:238px;"><span class="l">04</span></div>
<div class="t ax" style="left:1201.2px;top:238px;"><span class="l">05</span></div>
<div class="t ax" style="left:1219.3px;top:238px;"><span class="l">06</span></div>
<div class="t ax" style="left:16.2px;top:511px;"><span class="l">04</span></div>
<div class="t ax" style="left:56.2px;top:511px;"><span class="l">05</span></div>
<div class="t b" style="left:68.5px;top:511px;"><span class="l">06</span></div>
<div class="t ax" style="left:101.2px;top:511px;"><span class="l">09</span></div>
<div class="t ax" style="left:162.2px;top:511px;"><span class="l">10</span></div>
<div class="t ax" style="left:224.2px;top:511px;"><span class="l">11</span></div>
<div class="t ax" style="left:283.2px;top:511px;"><span class="l">12</span></div>
<div class="t ax" style="left:344.2px;top:511px;"><span class="l">13</span></div>
<div class="t ax" style="left:404.2px;top:511px;"><span class="l">14</span></div>
<div class="t ax" style="left:449px;top:511px;"><span class="l">15</span></div>
<div class="t ax" style="left:476.2px;top:511px;"><span class="l">16</span></div>
<div class="t ax" style="left:505.2px;top:511px;"><span class="l">17</span></div>
<div class="t ax" style="left:567.2px;top:511px;"><span class="l">18</span></div>
<div class="t ax" style="left:628.2px;top:511px;"><span class="l">19</span></div>
<div class="t ax" style="left:686.2px;top:511px;"><span class="l">20</span></div>
<div class="t ax" style="left:747.2px;top:511px;"><span class="l">21</span></div>
<div class="t ax" style="left:808.2px;top:511px;"><span class="l">22</span></div>
<div class="t ax" style="left:869.2px;top:511px;"><span class="l">23</span></div>
<div class="t ax" style="left:930.2px;top:511px;"><span class="l">00</span></div>
<div class="t ax" style="left:991.2px;top:511px;"><span class="l">01</span></div>
<div class="t ax" style="left:1051.2px;top:511px;"><span class="l">02</span></div>
<div class="t ax" style="left:1105.2px;top:511px;"><span class="l">03</span></div>
<div class="t ax" style="left:1154.2px;top:511px;"><span class="l">04</span></div>
<div class="t ax" style="left:1201.2px;top:511px;"><span class="l">05</span></div>
<div class="t ax" style="left:1219.3px;top:511px;"><span class="l">06</span></div>
<div class="t ax" style="left:16.2px;top:671px;"><span class="l">04</span></div>
<div class="t ax" style="left:56.2px;top:671px;"><span class="l">05</span></div>
<div class="t b" style="left:68.5px;top:671px;"><span class="l">06</span></div>
<div class="t ax" style="left:101.2px;top:671px;"><span class="l">09</span></div>
<div class="t ax" style="left:162.2px;top:671px;"><span class="l">10</span></div>
<div class="t ax" style="left:224.2px;top:671px;"><span class="l">11</span></div>
<div class="t ax" style="left:283.2px;top:671px;"><span class="l">12</span></div>
<div class="t ax" style="left:344.2px;top:671px;"><span class="l">13</span></div>
<div class="t ax" style="left:404.2px;top:671px;"><span class="l">14</span></div>
<div class="t ax" style="left:449px;top:671px;"><span class="l">15</span></div>
<div class="t ax" style="left:476.2px;top:671px;"><span class="l">16</span></div>
<div class="t ax" style="left:505.2px;top:671px;"><span class="l">17</span></div>
<div class="t ax" style="left:567.2px;top:671px;"><span class="l">18</span></div>
<div class="t ax" style="left:628.2px;top:671px;"><span class="l">19</span></div>
<div class="t ax" style="left:686.2px;top:671px;"><span class="l">20</span></div>
<div class="t ax" style="left:747.2px;top:671px;"><span class="l">21</span></div>
<div class="t ax" style="left:808.2px;top:671px;"><span class="l">22</span></div>
<div class="t ax" style="left:869.2px;top:671px;"><span class="l">23</span></div>
<div class="t ax" style="left:930.2px;top:671px;"><span class="l">00</span></div>
<div class="t ax" style="left:991.2px;top:671px;"><span class="l">01</span></div>
<div class="t ax" style="left:1051.2px;top:671px;"><span class="l">02</span></div>
<div class="t ax" style="left:1105.2px;top:671px;"><span class="l">03</span></div>
<div class="t ax" style="left:1154.2px;top:671px;"><span class="l">04</span></div>
<div class="t ax" style="left:1201.2px;top:671px;"><span class="l">05</span></div>
<div class="t ax" style="left:1219.3px;top:671px;"><span class="l">06</span></div>
<div class="t ax" style="left:1237.5px;top:67px;"><span class="l">7,750</span></div>
<div class="t ax" style="left:1237.5px;top:120px;"><span class="l">7,700</span></div>
<div class="t ax" style="left:1237.5px;top:173px;"><span class="l">7,650</span></div>
<div class="t ax" style="left:1237.5px;top:226px;"><span class="l">7,600</span></div>
<div class="t ax" style="left:1237.5px;top:267px;"><span class="l">3,950</span></div>
<div class="t ax" style="left:1237.5px;top:305px;"><span class="l">3,940</span></div>
<div class="t ax" style="left:1237.5px;top:344px;"><span class="l">3,930</span></div>
<div class="t ax" style="left:1237.5px;top:382px;"><span class="l">3,920</span></div>
<div class="t ax" style="left:1237.5px;top:421px;"><span class="l">3,910</span></div>
<div class="t ax" style="left:1237.5px;top:459px;"><span class="l">3,900</span></div>
<div class="t ax" style="left:1237.5px;top:498px;"><span class="l">3,890</span></div>
<div class="t ax" style="left:1237.5px;top:557px;"><span class="l">3,800</span></div>
<div class="t ax" style="left:1237.5px;top:602px;"><span class="l">3,750</span></div>
<div class="t ax" style="left:1237.5px;top:647px;"><span class="l">3,700</span></div>
<div class="pbox" style="left:1236.2px;top:207.1px;width:59.7px;height:22px;"></div>
<div class="t pb" style="left:1250px;top:210.4px;">7,620</div>
<div class="pbox" style="left:1236.2px;top:363.8px;width:59.7px;height:22px;"></div>
<div class="t pb" style="left:1250px;top:367.1px;">3,925</div>
<div class="pbox" style="left:1236.2px;top:654.2px;width:59.7px;height:22px;"></div>
<div class="t pb" style="left:1250px;top:657.5px;">3,695</div>
<div class="t ax" style="left:932px;top:222.5px;"><span class="l">11</span></div>
<div class="t ax" style="left:932px;top:494.5px;"><span class="l">11</span></div>
<div class="t ax" style="left:932px;top:655.5px;"><span class="l">11</span></div>
<svg width="1303" height="50" viewBox="0 0 1303 50" style="left:0;top:0">
<g shape-rendering="crispEdges">
<rect x="10" y="8" width="14" height="13" fill="#f4f4f4"/>
<g stroke="#d9d9d9" stroke-width="1"><line x1="11" y1="10.5" x2="24" y2="10.5"/><line x1="11" y1="12.5" x2="24" y2="12.5"/><line x1="11" y1="14.5" x2="24" y2="14.5"/><line x1="11" y1="16.5" x2="24" y2="16.5"/><line x1="11" y1="18.5" x2="24" y2="18.5"/></g>
<rect x="10" y="8" width="1" height="14" fill="#7d7d7d"/><rect x="10" y="21" width="14" height="1" fill="#7d7d7d"/>
<rect x="13" y="14" width="2" height="6" fill="#ff1010"/>
<rect x="15" y="10" width="2" height="9" fill="#1080f0"/>
<rect x="17" y="11" width="1" height="4" fill="#ff1010"/>
<rect x="18" y="9" width="1" height="7" fill="#ff1010"/>
<rect x="19" y="11" width="2" height="6" fill="#1080f0"/>
<rect x="21" y="10" width="1" height="8" fill="#ff1010"/>
<rect x="22" y="13" width="1" height="3" fill="#ff1010"/>
</g>
<!-- window list icon -->
<g fill="none" stroke="#8a8a8a" stroke-width="1">
<rect x="1217.5" y="8.5" width="10" height="10" fill="#e8e8e8"/>
<rect x="1220.5" y="11.5" width="10" height="10" fill="#f4f4f4"/>
<path d="M1220.5 14.5h10M1220.5 17.5h10M1223.5 14.5v7M1226.5 14.5v7" stroke="#a8a8a8"/>
<path d="M1220.5 12.5h10" stroke="#6e6e6e"/>
</g>
<!-- caption buttons -->
<defs><linearGradient id="cb" x1="0" y1="0" x2="0" y2="1"><stop offset="0" stop-color="#fbfbfb"/><stop offset="0.5" stop-color="#ececec"/><stop offset="1" stop-color="#cfcfcf"/></linearGradient></defs>
<g stroke="#909090" stroke-width="1" fill="url(#cb)">
<rect x="1239.5" y="6.5" width="17" height="17" rx="3"/>
<rect x="1259.5" y="6.5" width="17" height="17" rx="3"/>
<rect x="1279.5" y="6.5" width="17" height="17" rx="3"/>
</g>
<rect x="1244" y="16.5" width="7" height="2.2" fill="#555"/>
<rect x="1264" y="11" width="8" height="7.5" fill="none" stroke="#555" stroke-width="1.2"/><rect x="1263.4" y="10.4" width="9.2" height="2" fill="#555"/>
<path d="M1284 11l8 8M1292 11l-8 8" stroke="#555" stroke-width="1.6" fill="none"/>
<!-- wrench -->
<g fill="none">
<path d="M1274.7 42.7l5.9-5.6" stroke="#4646f2" stroke-width="2.7"/>
<path d="M1285.1 31.5A3.2 3.2 0 1 0 1287.4 35.4" stroke="#5c5ce0" stroke-width="3.1"/>
<path d="M1285.1 31.5A3.2 3.2 0 1 0 1287.4 35.4" stroke="#e4e4ff" stroke-width="1.2"/>
<path d="M1280.3 37.4l1.5-1.3" stroke="#5c5ce0" stroke-width="3"/>
</g>
<!-- separators -->
<g shape-rendering="crispEdges">
<rect x="134" y="32" width="1" height="13" fill="#c4c8d3"/><rect x="135" y="32" width="1" height="13" fill="#fdfdfe"/><rect x="277" y="32" width="1" height="13" fill="#c4c8d3"/><rect x="278" y="32" width="1" height="13" fill="#fdfdfe"/><rect x="425" y="32" width="1" height="13" fill="#c4c8d3"/><rect x="426" y="32" width="1" height="13" fill="#fdfdfe"/><rect x="454" y="32" width="1" height="13" fill="#c4c8d3"/><rect x="455" y="32" width="1" height="13" fill="#fdfdfe"/><rect x="552" y="32" width="1" height="13" fill="#c4c8d3"/><rect x="553" y="32" width="1" height="13" fill="#fdfdfe"/><rect x="610" y="32" width="1" height="13" fill="#c4c8d3"/><rect x="611" y="32" width="1" height="13" fill="#fdfdfe"/></g><path d="M314.6 35.5h6l-3 3.2z" fill="#000"/><path d="M411.7 35.5h6l-3 3.2z" fill="#000"/><path d="M573.6 35.5h6l-3 3.2z" fill="#000"/><g shape-rendering="crispEdges">
<rect x="428" y="28" width="17" height="18" fill="#fff"/>
<rect x="428" y="28" width="17" height="1" fill="#5f5f5f"/><rect x="428" y="28" width="1" height="18" fill="#5f5f5f"/>
<rect x="429" y="29" width="15" height="1" fill="#9c9c9c"/><rect x="429" y="29" width="1" height="16" fill="#9c9c9c"/>
<rect x="430" y="30" width="14" height="14" fill="#f6f6ee"/>
<g fill="#dcdcd2"><rect x="430" y="32" width="14" height="1"/><rect x="430" y="36" width="14" height="1"/><rect x="430" y="38" width="14" height="1"/><rect x="430" y="40" width="14" height="1"/><rect x="430" y="42" width="14" height="1"/></g>
<rect x="433" y="30" width="1" height="14" fill="#2a2ab0"/><rect x="430" y="34" width="14" height="1" fill="#2a2ab0"/>
</g>
<path d="M436.3 36.8h4.6l-1.5 1.4l3.2 3.2l-1.5 1.5l-3.2-3.2l-1.6 1.6z" fill="#a020c0"/>
<!-- icon 2: pressed select arrow -->
<g shape-rendering="crispEdges">
<rect x="457" y="28" width="17" height="18" fill="#fff"/>
<rect x="457" y="28" width="17" height="1" fill="#5f5f5f"/><rect x="457" y="28" width="1" height="18" fill="#5f5f5f"/>
<rect x="458" y="29" width="15" height="16" fill="#b4b4b4"/>
</g>
<path d="M460.5 32l2.6 9.2l2.2-2.6l3.4 3.6l2-1.9l-3.5-3.5l2.6-2z" fill="#fff" stroke="#6a50d0" stroke-width="1.3" stroke-linejoin="round"/>
<!-- hand -->
<path d="M484.2 43.5c-0.6-2-2.4-3.4-3-5.2c-0.3-1 0.8-1.6 1.6-0.8l1.6 1.6v-6.4c0-1.2 1.7-1.2 1.8 0v-1.6c0-1.3 1.8-1.3 1.9 0v0.8c0-1.3 1.8-1.3 1.9 0v1.4c0-1.2 1.7-1.2 1.8 0l0.3 5c0.2 2-0.6 3.6-1 5.2z" fill="#fffdf6" stroke="#d99a28" stroke-width="1.2" stroke-linejoin="round"/>
<!-- pencil -->
<path d="M504.3 43.2l1.2-3.8l9.5-9.3c1-0.9 3.2 1.1 2.4 2.2l-9.4 9.5z" fill="#ffd9a0" stroke="#e8982a" stroke-width="1.2" stroke-linejoin="round"/>
<path d="M504.3 43.2l0.8-2.2l1.4 1.4z" fill="#705030"/>
<!-- blue pen with target -->
<path d="M527.3 43.4l1.6-4l9.2-9c1.2-1 3.6 1.2 2.6 2.4l-9.3 9.3z" fill="#9cc4ff" stroke="#2f72e0" stroke-width="1.3" stroke-linejoin="round"/>
<path d="M527.3 43.4l1-2.6l1.6 1.6z" fill="#1a3c90"/>
<g stroke="#10206a" stroke-width="1.1" fill="none"><circle cx="537.5" cy="40.6" r="2.3"/><path d="M537.5 37v7.2M533.9 40.6h7.2"/></g>
<!-- bar chart icon -->
<g shape-rendering="crispEdges">
<rect x="557" y="30" width="14" height="13" fill="#f6f6f2"/>
<g fill="#d6d6d0"><rect x="558" y="32" width="13" height="1"/><rect x="558" y="34" width="13" height="1"/><rect x="558" y="36" width="13" height="1"/><rect x="558" y="38" width="13" height="1"/><rect x="558" y="40" width="13" height="1"/></g>
<rect x="557" y="30" width="1" height="14" fill="#8a8a8a"/><rect x="557" y="43" width="14" height="1" fill="#8a8a8a"/>
<g fill="#1e8cff"><rect x="559" y="38" width="2" height="5"/><rect x="562" y="32" width="2" height="11"/><rect x="565" y="34" width="2" height="9"/><rect x="568" y="38" width="2" height="5"/></g>
<!-- bar chart X icon -->
<rect x="585" y="30" width="14" height="13" fill="#f6f6f2"/>
<g fill="#d6d6d0"><rect x="586" y="32" width="13" height="1"/><rect x="586" y="34" width="13" height="1"/><rect x="586" y="36" width="13" height="1"/><rect x="586" y="38" width="13" height="1"/><rect x="586" y="40" width="13" height="1"/></g>
<rect x="585" y="30" width="1" height="14" fill="#8a8a8a"/><rect x="585" y="43" width="14" height="1" fill="#8a8a8a"/>
<g fill="#1e8cff"><rect x="587" y="37" width="2" height="6"/><rect x="590" y="31" width="2" height="12"/><rect x="593" y="33" width="2" height="10"/><rect x="596" y="38" width="2" height="5"/></g>
</g>
<path d="M587 32l10 10M597 32l-10 10" stroke="#ff2828" stroke-width="1.4" fill="none"/>
<!-- refresh -->
<path d="M623.7 41.2A5.3 5.3 0 1 1 619.1 32.3" fill="none" stroke="#1e86f2" stroke-width="2.1"/>
<path d="M615.4 29.5h5.6v4.6z" fill="#1e6cf0"/>
<g shape-rendering="crispEdges"><rect x="81.4" y="28" width="49.19999999999999" height="18" fill="#fff"/><rect x="81.4" y="28" width="49.19999999999999" height="1" fill="#a4a9b6"/><rect x="81.4" y="28" width="1" height="18" fill="#a4a9b6"/><rect x="129.6" y="28" width="1" height="18" fill="#e4e6ec"/><rect x="115" y="30" width="14" height="7" fill="#e6e6e6" stroke="#a8a8a8" stroke-width="1"/><rect x="115" y="37" width="14" height="7" fill="#e6e6e6" stroke="#a8a8a8" stroke-width="1"/></g><path d="M119.2 35.2l2.8-3l2.8 3z" fill="#000"/><path d="M119.2 38.8l2.8 3l2.8-3z" fill="#000"/><g shape-rendering="crispEdges"><rect x="225" y="28" width="48.60000000000002" height="18" fill="#fff"/><rect x="225" y="28" width="48.60000000000002" height="1" fill="#a4a9b6"/><rect x="225" y="28" width="1" height="18" fill="#a4a9b6"/><rect x="272.6" y="28" width="1" height="18" fill="#e4e6ec"/><rect x="258.5" y="30" width="14" height="7" fill="#e6e6e6" stroke="#a8a8a8" stroke-width="1"/><rect x="258.5" y="37" width="14" height="7" fill="#e6e6e6" stroke="#a8a8a8" stroke-width="1"/></g><path d="M262.7 35.2l2.8-3l2.8 3z" fill="#000"/><path d="M262.7 38.8l2.8 3l2.8-3z" fill="#000"/><g shape-rendering="crispEdges"><rect x="324.6" y="28" width="46.19999999999999" height="18" fill="#fff"/><rect x="324.6" y="28" width="46.19999999999999" height="1" fill="#a4a9b6"/><rect x="324.6" y="28" width="1" height="18" fill="#a4a9b6"/><rect x="369.8" y="28" width="1" height="18" fill="#e4e6ec"/><rect x="355" y="30" width="14" height="7" fill="#e6e6e6" stroke="#a8a8a8" stroke-width="1"/><rect x="355" y="37" width="14" height="7" fill="#e6e6e6" stroke="#a8a8a8" stroke-width="1"/></g><path d="M359.2 35.2l2.8-3l2.8 3z" fill="#000"/><path d="M359.2 38.8l2.8 3l2.8-3z" fill="#000"/></svg><div class="u" style="left:29.7px;top:7.1px;font-size:12px;letter-spacing:-0.25px;">金1分足[2023/06]1.00 − 白金1分足[2023/06]1.00</div><div class="u" style="left:11.2px;top:30.2px;">金</div><div class="u" style="left:34px;top:30.2px;letter-spacing:-0.35px;">2023/06</div><div class="u" style="left:84px;top:28.6px;font-size:12.5px;transform:scaleX(0.755);transform-origin:0 0;">1.00</div><div class="u" style="left:143px;top:30.2px;">白金</div><div class="u" style="left:177px;top:30.2px;letter-spacing:-0.35px;">2023/06</div><div class="u" style="left:228px;top:28.6px;font-size:12.5px;transform:scaleX(0.755);transform-origin:0 0;">1.00</div><div class="u" style="left:285.5px;top:30.2px;">分足</div><div class="u" style="left:327.5px;top:28.6px;font-size:12.5px;transform:scaleX(0.755);transform-origin:0 0;">1200</div><div class="u" style="left:377px;top:30.2px;">1分足</div><div class="u" style="left:621.6px;top:29.6px;font-weight:bold;color:#1162d6;font-size:10px;">R</div>
</body></html>
